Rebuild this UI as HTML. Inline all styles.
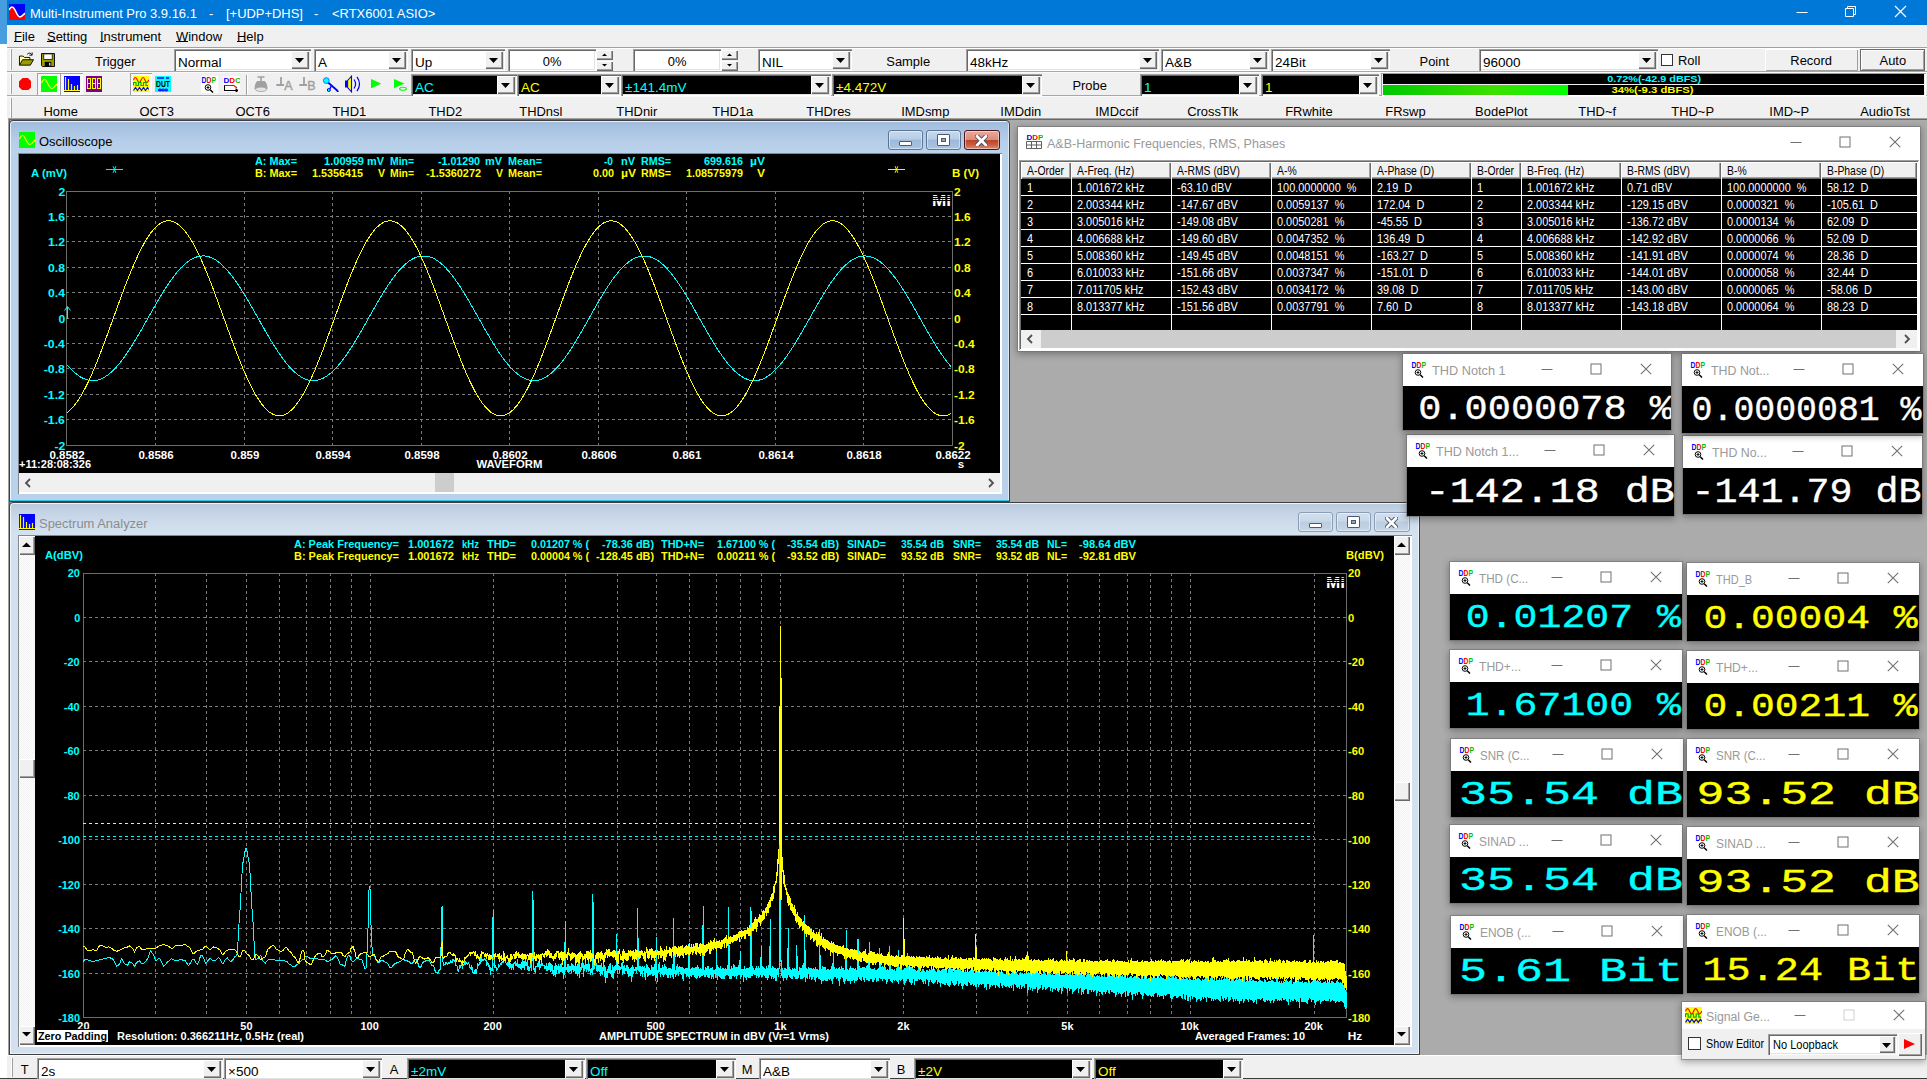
<!DOCTYPE html><html><head><meta charset="utf-8"><title>Multi-Instrument Pro</title><style>html,body{margin:0;padding:0;}
body{width:1927px;height:1079px;overflow:hidden;position:relative;background:#ababab;font-family:"Liberation Sans",sans-serif;}
body div,body svg{position:absolute;box-sizing:border-box;}
</style></head><body>
<div style="left:0px;top:0px;width:8px;height:44px;background:#469de0;"></div>
<div style="left:0px;top:44px;width:8px;height:1035px;background:#fff;"></div>
<div style="left:7px;top:0px;width:1920px;height:25px;background:#0078d7;"></div>
<svg style="left:9px;top:4px" width="16" height="16" viewBox="0 0 16 16"><rect width="16" height="16" fill="#0000ff"/><path d="M0,16 L0,6 C2,2 4,2 6,6 C8,10 9,13 11,13 C13,13 14,11 16,9 L16,16 Z" fill="#ff0000"/><path d="M0,6 C2,2 4,2 6,6 C8,10 9,13 11,13 C13,13 14,11 16,9" fill="none" stroke="#fff" stroke-width="1.6"/></svg>
<div style="left:30px;top:3.7px;height:21px;line-height:21px;font-size:12.5px;color:#fff;font-family:'Liberation Sans',sans-serif;white-space:pre;transform:scaleX(1.0350);transform-origin:0 0;">Multi-Instrument Pro 3.9.16.1</div>
<div style="left:209px;top:3.7px;height:21px;line-height:21px;font-size:12.5px;color:#fff;font-family:'Liberation Sans',sans-serif;white-space:pre;transform:scaleX(1.0350);transform-origin:0 0;">-</div>
<div style="left:226px;top:3.7px;height:21px;line-height:21px;font-size:12.5px;color:#fff;font-family:'Liberation Sans',sans-serif;white-space:pre;transform:scaleX(1.0350);transform-origin:0 0;">[+UDP+DHS]</div>
<div style="left:314px;top:3.7px;height:21px;line-height:21px;font-size:12.5px;color:#fff;font-family:'Liberation Sans',sans-serif;white-space:pre;transform:scaleX(1.0350);transform-origin:0 0;">-</div>
<div style="left:332px;top:3.7px;height:21px;line-height:21px;font-size:12.5px;color:#fff;font-family:'Liberation Sans',sans-serif;white-space:pre;transform:scaleX(1.0350);transform-origin:0 0;">&lt;RTX6001 ASIO&gt;</div>
<svg style="left:1780px;top:0" width="147" height="25" viewBox="0 0 147 25"><g stroke="#fff" stroke-width="1" fill="none"><path d="M16.5,12.5 h11"/><path d="M65.5,8.5 h8 v8 h-8 z M67.5,8.5 v-2 h8 v8 h-2"/><path d="M115,6 l11,11 M126,6 l-11,11" stroke-width="1.2"/></g></svg>
<div style="left:7px;top:25px;width:1920px;height:23px;background:#f0f0f0;"></div>
<div style="left:14px;top:26.7px;height:20px;line-height:20px;font-size:12.5px;color:#000;font-family:'Liberation Sans',sans-serif;white-space:pre;transform:scaleX(1.0350);transform-origin:0 0;">File</div>
<div style="left:14px;top:41px;width:8px;height:1px;background:#000;"></div>
<div style="left:47px;top:26.7px;height:20px;line-height:20px;font-size:12.5px;color:#000;font-family:'Liberation Sans',sans-serif;white-space:pre;transform:scaleX(1.0350);transform-origin:0 0;">Setting</div>
<div style="left:47px;top:41px;width:9px;height:1px;background:#000;"></div>
<div style="left:100px;top:26.7px;height:20px;line-height:20px;font-size:12.5px;color:#000;font-family:'Liberation Sans',sans-serif;white-space:pre;transform:scaleX(1.0350);transform-origin:0 0;">Instrument</div>
<div style="left:100px;top:41px;width:4px;height:1px;background:#000;"></div>
<div style="left:176px;top:26.7px;height:20px;line-height:20px;font-size:12.5px;color:#000;font-family:'Liberation Sans',sans-serif;white-space:pre;transform:scaleX(1.0350);transform-origin:0 0;">Window</div>
<div style="left:176px;top:41px;width:12px;height:1px;background:#000;"></div>
<div style="left:237px;top:26.7px;height:20px;line-height:20px;font-size:12.5px;color:#000;font-family:'Liberation Sans',sans-serif;white-space:pre;transform:scaleX(1.0350);transform-origin:0 0;">Help</div>
<div style="left:237px;top:41px;width:9px;height:1px;background:#000;"></div>
<div style="left:7px;top:48px;width:1920px;height:71px;background:#f0f0f0;"></div>
<div style="left:7px;top:47px;width:1920px;height:1px;background:#a0a0a0;"></div>
<div style="left:7px;top:48px;width:1920px;height:1px;background:#fff;"></div>
<div style="left:7px;top:71px;width:1920px;height:1px;background:#a8a8a8;"></div>
<div style="left:7px;top:72px;width:1920px;height:1px;background:#fbfbfb;"></div>
<div style="left:7px;top:95px;width:1920px;height:1px;background:#a8a8a8;"></div>
<div style="left:7px;top:96px;width:1920px;height:1px;background:#fbfbfb;"></div>
<div style="left:10px;top:49px;width:1px;height:21px;background:#fff;"></div>
<div style="left:11px;top:49px;width:1px;height:21px;background:#a0a0a0;"></div>
<div style="left:10px;top:74px;width:1px;height:20px;background:#fff;"></div>
<div style="left:11px;top:74px;width:1px;height:20px;background:#a0a0a0;"></div>
<div style="left:10px;top:98px;width:1px;height:20px;background:#fff;"></div>
<div style="left:11px;top:98px;width:1px;height:20px;background:#a0a0a0;"></div>
<svg style="left:17.5px;top:52.3px" width="16.5" height="14.5" viewBox="0 0 18 16"><path d="M1.5,14.5 V4.5 h4 l1.5,1.5 h6 v2.5" fill="#ffff9c" stroke="#000"/><path d="M1.5,14.5 l3.5,-6 h12 l-3.5,6 z" fill="#9c9c00" stroke="#000"/><path d="M10,2.5 c2,-2 4,-1.5 5,0.5 M15.5,0.5 v3 h-3" fill="none" stroke="#000"/></svg>
<svg style="left:41px;top:53px" width="14" height="14" viewBox="0 0 15 15"><path d="M0.5,0.5 h14 v14 h-13 l-1,-1 z" fill="#9c9c00" stroke="#000"/><rect x="3" y="1" width="9" height="6" fill="#fff" stroke="#000" stroke-width="0.8"/><rect x="4" y="9.5" width="7" height="5" fill="#000"/><rect x="8.5" y="10.5" width="1.6" height="3" fill="#cfcfcf"/></svg>
<div style="left:95px;top:51.7px;height:20px;line-height:20px;font-size:12.5px;color:#000;font-family:'Liberation Sans',sans-serif;white-space:pre;transform:scaleX(1.0350);transform-origin:0 0;">Trigger</div>
<div style="left:174px;top:49px;width:135px;height:22px;background:#fff;box-shadow:inset 1px 1px 0 #a0a0a0,inset 2px 2px 0 #696969,inset -1px -1px 0 #fff,inset -2px -2px 0 #e3e3e3;"></div>
<div style="left:174px;top:49px;width:137px;height:22px;background:#fff;box-shadow:inset 1px 1px 0 #a0a0a0,inset 2px 2px 0 #696969,inset -1px -1px 0 #fff,inset -2px -2px 0 #e3e3e3;"></div>
<div style="left:291px;top:51px;width:18px;height:18px;background:#f0f0f0;box-shadow:inset 1px 1px 0 #fff,inset -1px -1px 0 #696969,inset -2px -2px 0 #a0a0a0;"></div>
<svg style="left:295.0px;top:58.0px" width="9" height="5" viewBox="0 0 9 5"><polygon points="0,0 9,0 4.5,5" fill="#000"/></svg>
<div style="left:178px;top:52.7px;height:20px;line-height:20px;font-size:12.5px;color:#000;font-family:'Liberation Sans',sans-serif;white-space:pre;transform:scaleX(1.0800);transform-origin:0 0;">Normal</div>
<div style="left:314px;top:49px;width:92px;height:22px;background:#fff;box-shadow:inset 1px 1px 0 #a0a0a0,inset 2px 2px 0 #696969,inset -1px -1px 0 #fff,inset -2px -2px 0 #e3e3e3;"></div>
<div style="left:314px;top:49px;width:94px;height:22px;background:#fff;box-shadow:inset 1px 1px 0 #a0a0a0,inset 2px 2px 0 #696969,inset -1px -1px 0 #fff,inset -2px -2px 0 #e3e3e3;"></div>
<div style="left:388px;top:51px;width:18px;height:18px;background:#f0f0f0;box-shadow:inset 1px 1px 0 #fff,inset -1px -1px 0 #696969,inset -2px -2px 0 #a0a0a0;"></div>
<svg style="left:392.0px;top:58.0px" width="9" height="5" viewBox="0 0 9 5"><polygon points="0,0 9,0 4.5,5" fill="#000"/></svg>
<div style="left:318px;top:52.7px;height:20px;line-height:20px;font-size:12.5px;color:#000;font-family:'Liberation Sans',sans-serif;white-space:pre;transform:scaleX(1.0800);transform-origin:0 0;">A</div>
<div style="left:411px;top:49px;width:92px;height:22px;background:#fff;box-shadow:inset 1px 1px 0 #a0a0a0,inset 2px 2px 0 #696969,inset -1px -1px 0 #fff,inset -2px -2px 0 #e3e3e3;"></div>
<div style="left:411px;top:49px;width:94px;height:22px;background:#fff;box-shadow:inset 1px 1px 0 #a0a0a0,inset 2px 2px 0 #696969,inset -1px -1px 0 #fff,inset -2px -2px 0 #e3e3e3;"></div>
<div style="left:485px;top:51px;width:18px;height:18px;background:#f0f0f0;box-shadow:inset 1px 1px 0 #fff,inset -1px -1px 0 #696969,inset -2px -2px 0 #a0a0a0;"></div>
<svg style="left:489.0px;top:58.0px" width="9" height="5" viewBox="0 0 9 5"><polygon points="0,0 9,0 4.5,5" fill="#000"/></svg>
<div style="left:415px;top:52.7px;height:20px;line-height:20px;font-size:12.5px;color:#000;font-family:'Liberation Sans',sans-serif;white-space:pre;transform:scaleX(1.0800);transform-origin:0 0;">Up</div>
<div style="left:508px;top:49px;width:88px;height:22px;background:#fff;box-shadow:inset 1px 1px 0 #a0a0a0,inset 2px 2px 0 #696969,inset -1px -1px 0 #fff,inset -2px -2px 0 #e3e3e3;"></div>
<div style="left:552px;top:52.7px;height:19px;line-height:19px;font-size:12.5px;color:#000;font-family:'Liberation Sans',sans-serif;white-space:pre;left:542.97px;transform:scaleX(1.0350);transform-origin:50% 0;">0%</div>
<div style="left:596px;top:50px;width:17px;height:10px;background:#f0f0f0;box-shadow:inset 1px 1px 0 #fff,inset -1px -1px 0 #696969,inset -2px -2px 0 #a0a0a0;"></div>
<div style="left:596px;top:61px;width:17px;height:10px;background:#f0f0f0;box-shadow:inset 1px 1px 0 #fff,inset -1px -1px 0 #696969,inset -2px -2px 0 #a0a0a0;"></div>
<svg style="left:602px;top:53px" width="5" height="14" viewBox="0 0 5 14"><polygon points="0,3 5,3 2.5,0.5" fill="#000"/><polygon points="0,11 5,11 2.5,13.5" fill="#000"/></svg>
<div style="left:633px;top:49px;width:88px;height:22px;background:#fff;box-shadow:inset 1px 1px 0 #a0a0a0,inset 2px 2px 0 #696969,inset -1px -1px 0 #fff,inset -2px -2px 0 #e3e3e3;"></div>
<div style="left:677px;top:52.7px;height:19px;line-height:19px;font-size:12.5px;color:#000;font-family:'Liberation Sans',sans-serif;white-space:pre;left:667.97px;transform:scaleX(1.0350);transform-origin:50% 0;">0%</div>
<div style="left:721px;top:50px;width:17px;height:10px;background:#f0f0f0;box-shadow:inset 1px 1px 0 #fff,inset -1px -1px 0 #696969,inset -2px -2px 0 #a0a0a0;"></div>
<div style="left:721px;top:61px;width:17px;height:10px;background:#f0f0f0;box-shadow:inset 1px 1px 0 #fff,inset -1px -1px 0 #696969,inset -2px -2px 0 #a0a0a0;"></div>
<svg style="left:727px;top:53px" width="5" height="14" viewBox="0 0 5 14"><polygon points="0,3 5,3 2.5,0.5" fill="#000"/><polygon points="0,11 5,11 2.5,13.5" fill="#000"/></svg>
<div style="left:758px;top:49px;width:92px;height:22px;background:#fff;box-shadow:inset 1px 1px 0 #a0a0a0,inset 2px 2px 0 #696969,inset -1px -1px 0 #fff,inset -2px -2px 0 #e3e3e3;"></div>
<div style="left:758px;top:49px;width:94px;height:22px;background:#fff;box-shadow:inset 1px 1px 0 #a0a0a0,inset 2px 2px 0 #696969,inset -1px -1px 0 #fff,inset -2px -2px 0 #e3e3e3;"></div>
<div style="left:832px;top:51px;width:18px;height:18px;background:#f0f0f0;box-shadow:inset 1px 1px 0 #fff,inset -1px -1px 0 #696969,inset -2px -2px 0 #a0a0a0;"></div>
<svg style="left:836.0px;top:58.0px" width="9" height="5" viewBox="0 0 9 5"><polygon points="0,0 9,0 4.5,5" fill="#000"/></svg>
<div style="left:762px;top:52.7px;height:20px;line-height:20px;font-size:12.5px;color:#000;font-family:'Liberation Sans',sans-serif;white-space:pre;transform:scaleX(1.0800);transform-origin:0 0;">NIL</div>
<div style="left:908px;top:51.7px;height:20px;line-height:20px;font-size:12.5px;color:#000;font-family:'Liberation Sans',sans-serif;white-space:pre;left:886.81px;transform:scaleX(1.0350);transform-origin:50% 0;">Sample</div>
<div style="left:966px;top:49px;width:191px;height:22px;background:#fff;box-shadow:inset 1px 1px 0 #a0a0a0,inset 2px 2px 0 #696969,inset -1px -1px 0 #fff,inset -2px -2px 0 #e3e3e3;"></div>
<div style="left:966px;top:49px;width:193px;height:22px;background:#fff;box-shadow:inset 1px 1px 0 #a0a0a0,inset 2px 2px 0 #696969,inset -1px -1px 0 #fff,inset -2px -2px 0 #e3e3e3;"></div>
<div style="left:1139px;top:51px;width:18px;height:18px;background:#f0f0f0;box-shadow:inset 1px 1px 0 #fff,inset -1px -1px 0 #696969,inset -2px -2px 0 #a0a0a0;"></div>
<svg style="left:1143.0px;top:58.0px" width="9" height="5" viewBox="0 0 9 5"><polygon points="0,0 9,0 4.5,5" fill="#000"/></svg>
<div style="left:970px;top:52.7px;height:20px;line-height:20px;font-size:12.5px;color:#000;font-family:'Liberation Sans',sans-serif;white-space:pre;transform:scaleX(1.0800);transform-origin:0 0;">48kHz</div>
<div style="left:1161px;top:49px;width:106px;height:22px;background:#fff;box-shadow:inset 1px 1px 0 #a0a0a0,inset 2px 2px 0 #696969,inset -1px -1px 0 #fff,inset -2px -2px 0 #e3e3e3;"></div>
<div style="left:1161px;top:49px;width:108px;height:22px;background:#fff;box-shadow:inset 1px 1px 0 #a0a0a0,inset 2px 2px 0 #696969,inset -1px -1px 0 #fff,inset -2px -2px 0 #e3e3e3;"></div>
<div style="left:1249px;top:51px;width:18px;height:18px;background:#f0f0f0;box-shadow:inset 1px 1px 0 #fff,inset -1px -1px 0 #696969,inset -2px -2px 0 #a0a0a0;"></div>
<svg style="left:1253.0px;top:58.0px" width="9" height="5" viewBox="0 0 9 5"><polygon points="0,0 9,0 4.5,5" fill="#000"/></svg>
<div style="left:1165px;top:52.7px;height:20px;line-height:20px;font-size:12.5px;color:#000;font-family:'Liberation Sans',sans-serif;white-space:pre;transform:scaleX(1.0800);transform-origin:0 0;">A&amp;B</div>
<div style="left:1271px;top:49px;width:117px;height:22px;background:#fff;box-shadow:inset 1px 1px 0 #a0a0a0,inset 2px 2px 0 #696969,inset -1px -1px 0 #fff,inset -2px -2px 0 #e3e3e3;"></div>
<div style="left:1271px;top:49px;width:119px;height:22px;background:#fff;box-shadow:inset 1px 1px 0 #a0a0a0,inset 2px 2px 0 #696969,inset -1px -1px 0 #fff,inset -2px -2px 0 #e3e3e3;"></div>
<div style="left:1370px;top:51px;width:18px;height:18px;background:#f0f0f0;box-shadow:inset 1px 1px 0 #fff,inset -1px -1px 0 #696969,inset -2px -2px 0 #a0a0a0;"></div>
<svg style="left:1374.0px;top:58.0px" width="9" height="5" viewBox="0 0 9 5"><polygon points="0,0 9,0 4.5,5" fill="#000"/></svg>
<div style="left:1275px;top:52.7px;height:20px;line-height:20px;font-size:12.5px;color:#000;font-family:'Liberation Sans',sans-serif;white-space:pre;transform:scaleX(1.0800);transform-origin:0 0;">24Bit</div>
<div style="left:1434px;top:51.7px;height:20px;line-height:20px;font-size:12.5px;color:#000;font-family:'Liberation Sans',sans-serif;white-space:pre;left:1419.75px;transform:scaleX(1.0350);transform-origin:50% 0;">Point</div>
<div style="left:1479px;top:49px;width:177px;height:22px;background:#fff;box-shadow:inset 1px 1px 0 #a0a0a0,inset 2px 2px 0 #696969,inset -1px -1px 0 #fff,inset -2px -2px 0 #e3e3e3;"></div>
<div style="left:1479px;top:49px;width:179px;height:22px;background:#fff;box-shadow:inset 1px 1px 0 #a0a0a0,inset 2px 2px 0 #696969,inset -1px -1px 0 #fff,inset -2px -2px 0 #e3e3e3;"></div>
<div style="left:1638px;top:51px;width:18px;height:18px;background:#f0f0f0;box-shadow:inset 1px 1px 0 #fff,inset -1px -1px 0 #696969,inset -2px -2px 0 #a0a0a0;"></div>
<svg style="left:1642.0px;top:58.0px" width="9" height="5" viewBox="0 0 9 5"><polygon points="0,0 9,0 4.5,5" fill="#000"/></svg>
<div style="left:1483px;top:52.7px;height:20px;line-height:20px;font-size:12.5px;color:#000;font-family:'Liberation Sans',sans-serif;white-space:pre;transform:scaleX(1.0800);transform-origin:0 0;">96000</div>
<div style="left:1661px;top:54px;width:12px;height:12px;background:#fff;box-shadow:inset 1px 1px 0 #333,inset -1px -1px 0 #333;"></div>
<div style="left:1678px;top:50.7px;height:20px;line-height:20px;font-size:12.5px;color:#000;font-family:'Liberation Sans',sans-serif;white-space:pre;transform:scaleX(1.0350);transform-origin:0 0;">Roll</div>
<div style="left:1765px;top:49px;width:93px;height:22px;background:#f0f0f0;box-shadow:inset 1px 1px 0 #fff,inset -1px -1px 0 #a0a0a0;"></div>
<div style="left:1811px;top:51.7px;height:19px;line-height:19px;font-size:12.5px;color:#000;font-family:'Liberation Sans',sans-serif;white-space:pre;left:1790.85px;transform:scaleX(1.0350);transform-origin:50% 0;">Record</div>
<div style="left:1860px;top:49px;width:65px;height:22px;background:#f0f0f0;box-shadow:inset 1px 1px 0 #696969,inset -1px -1px 0 #696969,inset 2px 2px 0 #fff,inset -2px -2px 0 #a0a0a0;"></div>
<div style="left:1893px;top:51.7px;height:19px;line-height:19px;font-size:12.5px;color:#000;font-family:'Liberation Sans',sans-serif;white-space:pre;left:1880.14px;transform:scaleX(1.0350);transform-origin:50% 0;">Auto</div>
<svg style="left:18.6px;top:77.5px" width="12.5" height="12.5" viewBox="0 0 14 14"><polygon points="4,0 10,0 14,4 14,10 10,14 4,14 0,10 0,4" fill="#ff0000"/></svg>
<div style="left:37px;top:73px;width:23px;height:22px;background:#fff;box-shadow:inset 1px 1px 0 #a0a0a0,inset -1px -1px 0 #fff;background-image:repeating-conic-gradient(#f0f0f0 0 25%,#fff 0 50%);background-size:2px 2px;"></div>
<div style="left:60px;top:73px;width:23px;height:22px;background:#fff;box-shadow:inset 1px 1px 0 #a0a0a0,inset -1px -1px 0 #fff;background-image:repeating-conic-gradient(#f0f0f0 0 25%,#fff 0 50%);background-size:2px 2px;"></div>
<svg style="left:41px;top:76px" width="16" height="16" viewBox="0 0 16 16"><rect width="16" height="16" fill="#00ff00"/><path d="M0.5,7 C2,3 4,2 6,6 C8,10 9,12.5 11,12.5 C13,12.5 14,10 16,8" fill="none" stroke="#ffff00" stroke-width="1.2"/></svg>
<svg style="left:64px;top:76px" width="16" height="16" viewBox="0 0 16 16"><rect width="16" height="16" fill="#0000ff"/><path d="M1.5,1 V14 M4.5,3 V14 M7.5,8 V14 M10.5,10 V14 M13.5,9 V14 M0,14.5 H16" stroke="#ffff00" stroke-width="1.2" fill="none"/></svg>
<svg style="left:86px;top:76px" width="16" height="16" viewBox="0 0 16 16"><rect width="16" height="16" fill="#800080"/><g fill="none" stroke="#ffff00" stroke-width="1"><rect x="1.5" y="2.5" width="3" height="5"/><rect x="1.5" y="7.5" width="3" height="5"/><rect x="6.5" y="2.5" width="3" height="5"/><rect x="6.5" y="7.5" width="3" height="5"/><rect x="11.5" y="2.5" width="3" height="5"/><rect x="11.5" y="7.5" width="3" height="5"/></g></svg>
<div style="left:129.5px;top:73px;width:22px;height:22px;background:#fff;box-shadow:inset 1px 1px 0 #a0a0a0,inset -1px -1px 0 #fff;background-image:repeating-conic-gradient(#f0f0f0 0 25%,#fff 0 50%);background-size:2px 2px;"></div>
<svg style="left:133px;top:76px" width="16" height="16" viewBox="0 0 16 16"><rect width="16" height="16" fill="#ffff00"/><path d="M0.5,4 q1.9,-5 3.8,0 t3.8,0 t3.8,0 t3.8,0" fill="none" stroke="#ff0000" stroke-width="1.1"/><path d="M0.5,9.5 v-3 h2.5 v3 h2.5 v-3 h2.5 v3 h2.5 v-3 h2.5 v3 h2" fill="none" stroke="#00b000" stroke-width="1.1"/><path d="M0.5,14.5 l2,-3 l2,3 l2,-3 l2,3 l2,-3 l2,3 l2,-3 l1.2,2" fill="none" stroke="#0000ff" stroke-width="1.1"/></svg>
<svg style="left:155px;top:76px" width="16" height="16" viewBox="0 0 16 16"><rect width="16" height="16" fill="#00ffff"/><text x="8" y="11" font-size="8.5" font-weight="bold" font-family="Liberation Sans,sans-serif" text-anchor="middle" fill="#000" textLength="14" lengthAdjust="spacingAndGlyphs">DUT</text><path d="M2,2 h7 M11,2 l3,0 M3,14 h10" stroke="#0000ff" stroke-width="1.4"/><circle cx="5" cy="14" r="1.2" fill="none" stroke="#0000ff" stroke-width="0.7"/><circle cx="8" cy="14" r="1.2" fill="none" stroke="#0000ff" stroke-width="0.7"/><circle cx="11" cy="14" r="1.2" fill="none" stroke="#0000ff" stroke-width="0.7"/></svg>
<svg style="left:201px;top:76px" width="17" height="17" viewBox="0 0 17 17"><rect width="17" height="17" fill="#fff"/><text x="0.5" y="7" font-size="8.5" font-weight="bold" font-family="Liberation Sans,sans-serif" textLength="14.5" lengthAdjust="spacingAndGlyphs"><tspan fill="#0000ff">D</tspan><tspan fill="#ff0000">D</tspan><tspan fill="#00c000">P</tspan></text><circle cx="7" cy="11.5" r="2.8" fill="#fff" stroke="#000" stroke-width="1"/><path d="M7,10 v3 M5.5,11.5 h3" stroke="#000" stroke-width="0.9"/><path d="M9.2,13.7 L12,16.5" stroke="#000" stroke-width="1.5"/></svg>
<svg style="left:223px;top:76px" width="17" height="16" viewBox="0 0 17 16"><rect width="17" height="16" fill="#fff"/><text x="0.5" y="7" font-size="8" font-weight="bold" font-family="Liberation Sans,sans-serif"><tspan fill="#0000ff">D</tspan><tspan fill="#ff0000">D</tspan><tspan fill="#00c000">C</tspan></text><path d="M1.5,9 V14.5 H15 M15,14.5 l-2.5,-1.8 M15,14.5 l-2.5,1.5" fill="none" stroke="#000" stroke-width="1.1"/><path d="M1.5,9.5 H11 L14,12" fill="none" stroke="#ff0000" stroke-width="1.1"/></svg>
<div style="left:246px;top:75px;width:1px;height:20px;background:#a0a0a0;"></div>
<div style="left:247px;top:75px;width:1px;height:20px;background:#fff;"></div>
<svg style="left:254px;top:76px" width="15" height="16" viewBox="0 0 15 16"><path d="M3.5,1 h7 M7,1 v4" stroke="#a0a0a0" stroke-width="1.6" fill="none"/><path d="M3.2,5 h7.6 q3,3.5 2.6,8 h-12.8 q-0.4,-4.500 2.600,-8 z" fill="#a0a0a0"/><ellipse cx="7" cy="13.3" rx="5.6" ry="2.2" fill="#e4e4e4" stroke="#a0a0a0" stroke-width="0.8"/></svg>
<svg style="left:276px;top:76px" width="18" height="16" viewBox="0 0 18 16"><path d="M5,1 V9 M0.3,9 H8" stroke="#a0a0a0" stroke-width="1.8" fill="none"/><text x="8.3" y="14" font-size="12.5" font-family="Liberation Sans,sans-serif" fill="#a0a0a0" stroke="#a0a0a0" stroke-width="0.4">A</text></svg>
<svg style="left:299px;top:76px" width="18" height="16" viewBox="0 0 18 16"><path d="M5,1 V9 M0.3,9 H8" stroke="#a0a0a0" stroke-width="1.8" fill="none"/><text x="8.3" y="14" font-size="12.5" font-family="Liberation Sans,sans-serif" fill="#a0a0a0" stroke="#a0a0a0" stroke-width="0.4">B</text></svg>
<svg style="left:322px;top:76px" width="18" height="17" viewBox="0 0 18 17"><path d="M5.5,6 L15.5,14.8" stroke="#0000ff" stroke-width="1.8" fill="none"/><path d="M9.5,9.5 L7.5,13.5" stroke="#0000ff" stroke-width="1.4" fill="none"/><circle cx="4.3" cy="4.6" r="2.9" fill="#00ffff" stroke="#1e5cff" stroke-width="0.9"/><circle cx="6.8" cy="14" r="1.5" fill="#00ffff" stroke="#0000ff" stroke-width="1"/><circle cx="15.7" cy="15.2" r="0.9" fill="#000"/></svg>
<svg style="left:344px;top:75px" width="18" height="18" viewBox="0 0 18 18"><rect x="1" y="5.5" width="2.6" height="7" fill="#0000ff"/><path d="M3.6,5.5 L7.5,1.2 V16.8 L3.6,12.5 z" fill="#ffff00" stroke="#0000ff" stroke-width="1.1"/><path d="M10,4.5 q3.2,4.500 0,9 M13,1.800 q5,7.200 0,14.400" fill="none" stroke="#0000ff" stroke-width="1.2"/></svg>
<svg style="left:370.8px;top:79px" width="10.4" height="9.4" viewBox="0 0 10 9"><polygon points="0,0 10,4.5 0,9" fill="#00ff00"/></svg>
<svg style="left:393.5px;top:79px" width="14" height="13" viewBox="0 0 14 13"><polygon points="0,0 10.400,4.600 0,9.200" fill="#00ff00"/><ellipse cx="9" cy="9.800" rx="3.400" ry="1.500" fill="none" stroke="#00ff00" stroke-width="1.1"/></svg>
<div style="left:411px;top:74px;width:104px;height:22px;background:#000;box-shadow:inset 1px 1px 0 #a0a0a0,inset 2px 2px 0 #696969,inset -1px -1px 0 #fff,inset -2px -2px 0 #e3e3e3;"></div>
<div style="left:411px;top:74px;width:106px;height:22px;background:#000;box-shadow:inset 1px 1px 0 #a0a0a0,inset 2px 2px 0 #696969,inset -1px -1px 0 #fff,inset -2px -2px 0 #e3e3e3;"></div>
<div style="left:497px;top:76px;width:18px;height:18px;background:#f0f0f0;box-shadow:inset 1px 1px 0 #fff,inset -1px -1px 0 #696969,inset -2px -2px 0 #a0a0a0;"></div>
<svg style="left:501.0px;top:83.0px" width="9" height="5" viewBox="0 0 9 5"><polygon points="0,0 9,0 4.5,5" fill="#000"/></svg>
<div style="left:415px;top:77.7px;height:20px;line-height:20px;font-size:12.5px;color:#00ffff;font-family:'Liberation Sans',sans-serif;white-space:pre;transform:scaleX(1.0800);transform-origin:0 0;">AC</div>
<div style="left:517px;top:74px;width:102px;height:22px;background:#000;box-shadow:inset 1px 1px 0 #a0a0a0,inset 2px 2px 0 #696969,inset -1px -1px 0 #fff,inset -2px -2px 0 #e3e3e3;"></div>
<div style="left:517px;top:74px;width:104px;height:22px;background:#000;box-shadow:inset 1px 1px 0 #a0a0a0,inset 2px 2px 0 #696969,inset -1px -1px 0 #fff,inset -2px -2px 0 #e3e3e3;"></div>
<div style="left:601px;top:76px;width:18px;height:18px;background:#f0f0f0;box-shadow:inset 1px 1px 0 #fff,inset -1px -1px 0 #696969,inset -2px -2px 0 #a0a0a0;"></div>
<svg style="left:605.0px;top:83.0px" width="9" height="5" viewBox="0 0 9 5"><polygon points="0,0 9,0 4.5,5" fill="#000"/></svg>
<div style="left:521px;top:77.7px;height:20px;line-height:20px;font-size:12.5px;color:#ffff00;font-family:'Liberation Sans',sans-serif;white-space:pre;transform:scaleX(1.0800);transform-origin:0 0;">AC</div>
<div style="left:621px;top:74px;width:208px;height:22px;background:#000;box-shadow:inset 1px 1px 0 #a0a0a0,inset 2px 2px 0 #696969,inset -1px -1px 0 #fff,inset -2px -2px 0 #e3e3e3;"></div>
<div style="left:621px;top:74px;width:210px;height:22px;background:#000;box-shadow:inset 1px 1px 0 #a0a0a0,inset 2px 2px 0 #696969,inset -1px -1px 0 #fff,inset -2px -2px 0 #e3e3e3;"></div>
<div style="left:811px;top:76px;width:18px;height:18px;background:#f0f0f0;box-shadow:inset 1px 1px 0 #fff,inset -1px -1px 0 #696969,inset -2px -2px 0 #a0a0a0;"></div>
<svg style="left:815.0px;top:83.0px" width="9" height="5" viewBox="0 0 9 5"><polygon points="0,0 9,0 4.5,5" fill="#000"/></svg>
<div style="left:625px;top:77.7px;height:20px;line-height:20px;font-size:12.5px;color:#00ffff;font-family:'Liberation Sans',sans-serif;white-space:pre;transform:scaleX(1.0800);transform-origin:0 0;">±141.4mV</div>
<div style="left:832px;top:74px;width:208px;height:22px;background:#000;box-shadow:inset 1px 1px 0 #a0a0a0,inset 2px 2px 0 #696969,inset -1px -1px 0 #fff,inset -2px -2px 0 #e3e3e3;"></div>
<div style="left:832px;top:74px;width:210px;height:22px;background:#000;box-shadow:inset 1px 1px 0 #a0a0a0,inset 2px 2px 0 #696969,inset -1px -1px 0 #fff,inset -2px -2px 0 #e3e3e3;"></div>
<div style="left:1022px;top:76px;width:18px;height:18px;background:#f0f0f0;box-shadow:inset 1px 1px 0 #fff,inset -1px -1px 0 #696969,inset -2px -2px 0 #a0a0a0;"></div>
<svg style="left:1026.0px;top:83.0px" width="9" height="5" viewBox="0 0 9 5"><polygon points="0,0 9,0 4.5,5" fill="#000"/></svg>
<div style="left:836px;top:77.7px;height:20px;line-height:20px;font-size:12.5px;color:#ffff00;font-family:'Liberation Sans',sans-serif;white-space:pre;transform:scaleX(1.0800);transform-origin:0 0;">±4.472V</div>
<div style="left:1090px;top:75.7px;height:20px;line-height:20px;font-size:12.5px;color:#000;font-family:'Liberation Sans',sans-serif;white-space:pre;left:1073.32px;transform:scaleX(1.0350);transform-origin:50% 0;">Probe</div>
<div style="left:1140px;top:74px;width:117px;height:22px;background:#000;box-shadow:inset 1px 1px 0 #a0a0a0,inset 2px 2px 0 #696969,inset -1px -1px 0 #fff,inset -2px -2px 0 #e3e3e3;"></div>
<div style="left:1140px;top:74px;width:119px;height:22px;background:#000;box-shadow:inset 1px 1px 0 #a0a0a0,inset 2px 2px 0 #696969,inset -1px -1px 0 #fff,inset -2px -2px 0 #e3e3e3;"></div>
<div style="left:1239px;top:76px;width:18px;height:18px;background:#f0f0f0;box-shadow:inset 1px 1px 0 #fff,inset -1px -1px 0 #696969,inset -2px -2px 0 #a0a0a0;"></div>
<svg style="left:1243.0px;top:83.0px" width="9" height="5" viewBox="0 0 9 5"><polygon points="0,0 9,0 4.5,5" fill="#000"/></svg>
<div style="left:1144px;top:77.7px;height:20px;line-height:20px;font-size:12.5px;color:#00ffff;font-family:'Liberation Sans',sans-serif;white-space:pre;transform:scaleX(1.0800);transform-origin:0 0;">1</div>
<div style="left:1261px;top:74px;width:116px;height:22px;background:#000;box-shadow:inset 1px 1px 0 #a0a0a0,inset 2px 2px 0 #696969,inset -1px -1px 0 #fff,inset -2px -2px 0 #e3e3e3;"></div>
<div style="left:1261px;top:74px;width:118px;height:22px;background:#000;box-shadow:inset 1px 1px 0 #a0a0a0,inset 2px 2px 0 #696969,inset -1px -1px 0 #fff,inset -2px -2px 0 #e3e3e3;"></div>
<div style="left:1359px;top:76px;width:18px;height:18px;background:#f0f0f0;box-shadow:inset 1px 1px 0 #fff,inset -1px -1px 0 #696969,inset -2px -2px 0 #a0a0a0;"></div>
<svg style="left:1363.0px;top:83.0px" width="9" height="5" viewBox="0 0 9 5"><polygon points="0,0 9,0 4.5,5" fill="#000"/></svg>
<div style="left:1265px;top:77.7px;height:20px;line-height:20px;font-size:12.5px;color:#ffff00;font-family:'Liberation Sans',sans-serif;white-space:pre;transform:scaleX(1.0800);transform-origin:0 0;">1</div>
<div style="left:1381px;top:73px;width:545px;height:23px;background:#f0f0f0;box-shadow:inset 1px 1px 0 #a0a0a0,inset -1px -1px 0 #fff;"></div>
<div style="left:1383px;top:74px;width:541px;height:10px;background:#000;"></div>
<div style="left:1383px;top:85px;width:541px;height:10px;background:#000;"></div>
<div style="left:1383px;top:85px;width:185px;height:10px;background:linear-gradient(90deg,#00c800,#3ee000 60%,#00ff00);"></div>
<div style="left:1654px;top:73px;height:12px;line-height:12px;font-size:9.5px;color:#00ffff;font-family:'Liberation Sans',sans-serif;white-space:pre;font-weight:bold;left:1612.82px;transform:scaleX(1.1414);transform-origin:50% 0;">0.72%(-42.9 dBFS)</div>
<div style="left:1653px;top:84px;height:12px;line-height:12px;font-size:9.5px;color:#ffff00;font-family:'Liberation Sans',sans-serif;white-space:pre;font-weight:bold;left:1618.43px;transform:scaleX(1.1858);transform-origin:50% 0;">34%(-9.3 dBFS)</div>
<div style="left:61px;top:102.7px;height:19px;line-height:19px;font-size:12.5px;color:#000;font-family:'Liberation Sans',sans-serif;white-space:pre;left:44.33px;transform:scaleX(1.0350);transform-origin:50% 0;">Home</div>
<div style="left:157px;top:102.7px;height:19px;line-height:19px;font-size:12.5px;color:#000;font-family:'Liberation Sans',sans-serif;white-space:pre;left:140.33px;transform:scaleX(1.0350);transform-origin:50% 0;">OCT3</div>
<div style="left:253px;top:102.7px;height:19px;line-height:19px;font-size:12.5px;color:#000;font-family:'Liberation Sans',sans-serif;white-space:pre;left:236.33px;transform:scaleX(1.0350);transform-origin:50% 0;">OCT6</div>
<div style="left:349px;top:102.7px;height:19px;line-height:19px;font-size:12.5px;color:#000;font-family:'Liberation Sans',sans-serif;white-space:pre;left:332.68px;transform:scaleX(1.0350);transform-origin:50% 0;">THD1</div>
<div style="left:445px;top:102.7px;height:19px;line-height:19px;font-size:12.5px;color:#000;font-family:'Liberation Sans',sans-serif;white-space:pre;left:428.68px;transform:scaleX(1.0350);transform-origin:50% 0;">THD2</div>
<div style="left:541px;top:102.7px;height:19px;line-height:19px;font-size:12.5px;color:#000;font-family:'Liberation Sans',sans-serif;white-space:pre;left:520.17px;transform:scaleX(1.0350);transform-origin:50% 0;">THDnsl</div>
<div style="left:637px;top:102.7px;height:19px;line-height:19px;font-size:12.5px;color:#000;font-family:'Liberation Sans',sans-serif;white-space:pre;left:617.21px;transform:scaleX(1.0350);transform-origin:50% 0;">THDnir</div>
<div style="left:733px;top:102.7px;height:19px;line-height:19px;font-size:12.5px;color:#000;font-family:'Liberation Sans',sans-serif;white-space:pre;left:713.20px;transform:scaleX(1.0350);transform-origin:50% 0;">THD1a</div>
<div style="left:829px;top:102.7px;height:19px;line-height:19px;font-size:12.5px;color:#000;font-family:'Liberation Sans',sans-serif;white-space:pre;left:807.47px;transform:scaleX(1.0350);transform-origin:50% 0;">THDres</div>
<div style="left:925px;top:102.7px;height:19px;line-height:19px;font-size:12.5px;color:#000;font-family:'Liberation Sans',sans-serif;white-space:pre;left:901.74px;transform:scaleX(1.0350);transform-origin:50% 0;">IMDsmp</div>
<div style="left:1021px;top:102.7px;height:19px;line-height:19px;font-size:12.5px;color:#000;font-family:'Liberation Sans',sans-serif;white-space:pre;left:1001.20px;transform:scaleX(1.0350);transform-origin:50% 0;">IMDdin</div>
<div style="left:1117px;top:102.7px;height:19px;line-height:19px;font-size:12.5px;color:#000;font-family:'Liberation Sans',sans-serif;white-space:pre;left:1096.17px;transform:scaleX(1.0350);transform-origin:50% 0;">IMDccif</div>
<div style="left:1213px;top:102.7px;height:19px;line-height:19px;font-size:12.5px;color:#000;font-family:'Liberation Sans',sans-serif;white-space:pre;left:1188.35px;transform:scaleX(1.0350);transform-origin:50% 0;">CrossTlk</div>
<div style="left:1309px;top:102.7px;height:19px;line-height:19px;font-size:12.5px;color:#000;font-family:'Liberation Sans',sans-serif;white-space:pre;left:1286.08px;transform:scaleX(1.0350);transform-origin:50% 0;">FRwhite</div>
<div style="left:1405px;top:102.7px;height:19px;line-height:19px;font-size:12.5px;color:#000;font-family:'Liberation Sans',sans-serif;white-space:pre;left:1385.55px;transform:scaleX(1.0350);transform-origin:50% 0;">FRswp</div>
<div style="left:1501px;top:102.7px;height:19px;line-height:19px;font-size:12.5px;color:#000;font-family:'Liberation Sans',sans-serif;white-space:pre;left:1475.63px;transform:scaleX(1.0350);transform-origin:50% 0;">BodePlot</div>
<div style="left:1597px;top:102.7px;height:19px;line-height:19px;font-size:12.5px;color:#000;font-family:'Liberation Sans',sans-serif;white-space:pre;left:1578.77px;transform:scaleX(1.0350);transform-origin:50% 0;">THD~f</div>
<div style="left:1693px;top:102.7px;height:19px;line-height:19px;font-size:12.5px;color:#000;font-family:'Liberation Sans',sans-serif;white-space:pre;left:1672.34px;transform:scaleX(1.0350);transform-origin:50% 0;">THD~P</div>
<div style="left:1789px;top:102.7px;height:19px;line-height:19px;font-size:12.5px;color:#000;font-family:'Liberation Sans',sans-serif;white-space:pre;left:1769.72px;transform:scaleX(1.0350);transform-origin:50% 0;">IMD~P</div>
<div style="left:1885px;top:102.7px;height:19px;line-height:19px;font-size:12.5px;color:#000;font-family:'Liberation Sans',sans-serif;white-space:pre;left:1861.03px;transform:scaleX(1.0350);transform-origin:50% 0;">AudioTst</div>
<div style="left:8px;top:118px;width:1919px;height:937px;border-left:1px solid #a0a0a0;border-top:1px solid #a0a0a0;"></div>
<div style="left:9px;top:119px;width:1918px;height:936px;border-left:1px solid #696969;border-top:1px solid #696969;"></div>
<div style="left:9px;top:120px;width:1001px;height:382px;background:linear-gradient(180deg,#9fbbdc 0px,#a9c3e2 8px,#b6cee9 20px,#bdd3ec 34px,#b9d1ea 35px);border:1px solid #3f3f3f;border-radius:4px 4px 0 0;box-shadow:inset 1px 1px 0 rgba(255,255,255,.75),inset -1px -1px 0 rgba(255,255,255,.55);"></div>
<svg style="left:19px;top:132px" width="16" height="16" viewBox="0 0 16 16"><rect width="16" height="16" fill="#00ff00"/><path d="M0.5,7 C2,3 4,2 6,6 C8,10 9,12.5 11,12.5 C13,12.5 14,10 16,8" fill="none" stroke="#ffff00" stroke-width="1.2"/></svg>
<div style="left:39px;top:131.7px;height:20px;line-height:20px;font-size:12.5px;color:#000;font-family:'Liberation Sans',sans-serif;white-space:pre;transform:scaleX(1.0350);transform-origin:0 0;">Oscilloscope</div>
<div style="left:888px;top:130px;width:35px;height:20px;background:linear-gradient(180deg,#c6d9ee 0%,#b7cde7 45%,#9db9da 50%,#aac4e2 100%);border:1px solid #5d7594;border-radius:3px;box-shadow:inset 0 0 0 1px rgba(255,255,255,.45);"></div>
<div style="left:926px;top:130px;width:35px;height:20px;background:linear-gradient(180deg,#c6d9ee 0%,#b7cde7 45%,#9db9da 50%,#aac4e2 100%);border:1px solid #5d7594;border-radius:3px;box-shadow:inset 0 0 0 1px rgba(255,255,255,.45);"></div>
<div style="left:964px;top:130px;width:36px;height:20px;background:linear-gradient(180deg,#e9a99c 0%,#de8c7a 48%,#be4428 52%,#c85a40 75%,#d88a76 100%);border:1px solid #4a1420;border-radius:3px;box-shadow:inset 0 0 0 1px rgba(255,255,255,.45);"></div>
<div style="left:899px;top:141px;width:13px;height:5px;background:#fff;border:1px solid #4b5a70;border-radius:1px;"></div>
<div style="left:937px;top:134px;width:13px;height:12px;background:#fff;border:1px solid #4b5a70;border-radius:1px;"></div>
<div style="left:941px;top:138px;width:5px;height:4px;background:#8ea6c8;border:1px solid #4b5a70;"></div>
<svg style="left:975.2px;top:134.5px" width="13" height="11.4" viewBox="0 0 16 14"><path d="M2.5,1.5 L13.5,12.5 M13.5,1.5 L2.5,12.5" stroke="#43506a" stroke-width="5.6" stroke-linecap="round"/><path d="M2.5,1.5 L13.5,12.5 M13.5,1.5 L2.5,12.5" stroke="#fff" stroke-width="3.4" stroke-linecap="round"/></svg>
<div style="left:10px;top:500px;width:999px;height:1px;background:#35c4e8;"></div>
<div style="left:18px;top:153px;width:984px;height:341px;background:#fff;border-left:1px solid #828790;border-top:1px solid #828790;"></div>
<div style="left:19px;top:154px;width:981px;height:319px;background:#000;"></div>
<div style="left:19px;top:473px;width:981px;height:19px;background:#f0f0f0;"></div>
<div style="left:435px;top:473px;width:19px;height:19px;background:#cdcdcd;"></div>
<svg style="left:24px;top:478px" width="8" height="10" viewBox="0 0 8 10"><path d="M6,1 L2,5 L6,9" fill="none" stroke="#505050" stroke-width="1.8"/></svg>
<svg style="left:987px;top:478px" width="8" height="10" viewBox="0 0 8 10"><path d="M2,1 L6,5 L2,9" fill="none" stroke="#505050" stroke-width="1.8"/></svg>
<svg style="left:19px;top:154px" width="981" height="319" viewBox="19 154 981 319" shape-rendering="crispEdges"><rect x="66.5" y="191.5" width="886" height="254" fill="none" stroke="#6c6c6c"/><path d="M66,216.5H952M66,241.5H952M66,267.5H952M66,292.5H952M66,318.5H952M66,343.5H952M66,368.5H952M66,394.5H952M66,419.5H952M155.5,191V445M244.5,191V445M332.5,191V445M421.5,191V445M509.5,191V445M598.5,191V445M686.5,191V445M775.5,191V445M863.5,191V445" stroke="#7a7a7a" stroke-dasharray="3 3" fill="none"/></svg>
<svg style="left:19px;top:154px" width="981" height="319" viewBox="19 154 981 319" shape-rendering="crispEdges"><polyline points="66.9,364.6 68.9,366.9 70.9,369.0 72.9,371.0 74.9,372.8 76.9,374.4 78.9,375.9 80.9,377.2 82.9,378.2 84.9,379.1 86.9,379.8 88.9,380.3 90.9,380.6 92.9,380.7 94.9,380.5 96.9,380.2 98.9,379.7 100.9,379.0 102.9,378.0 104.9,376.9 106.9,375.6 108.9,374.1 110.9,372.5 112.9,370.6 114.9,368.6 116.9,366.4 118.9,364.1 120.9,361.6 122.9,359.0 124.9,356.2 126.9,353.3 128.9,350.3 130.9,347.2 132.9,344.1 134.9,340.8 136.9,337.4 138.9,334.0 140.9,330.6 142.9,327.1 144.9,323.5 146.9,320.0 148.9,316.4 150.9,312.9 152.9,309.4 154.9,305.9 156.9,302.4 158.9,299.0 160.9,295.7 162.9,292.4 164.9,289.2 166.9,286.1 168.9,283.1 170.9,280.2 172.9,277.5 174.9,274.9 176.9,272.4 178.9,270.1 180.9,267.9 182.9,265.9 184.9,264.0 186.9,262.4 188.9,260.9 190.9,259.6 192.9,258.5 194.9,257.6 196.9,256.9 198.9,256.4 200.9,256.1 202.9,255.9 204.9,256.0 206.9,256.3 208.9,256.8 210.9,257.5 212.9,258.4 214.9,259.5 216.9,260.8 218.9,262.2 220.9,263.9 222.9,265.7 224.9,267.7 226.9,269.8 228.9,272.2 230.9,274.6 232.9,277.2 234.9,280.0 236.9,282.8 238.9,285.8 240.9,288.9 242.9,292.1 244.9,295.3 246.9,298.7 248.9,302.1 250.9,305.5 252.9,309.0 254.9,312.5 256.9,316.1 258.9,319.6 260.9,323.2 262.9,326.7 264.9,330.2 266.9,333.7 268.9,337.1 270.9,340.5 272.9,343.7 274.9,346.9 276.9,350.0 278.9,353.0 280.9,355.9 282.9,358.7 284.9,361.3 286.9,363.8 288.9,366.2 290.9,368.4 292.9,370.4 294.9,372.3 296.9,374.0 298.9,375.5 300.9,376.8 302.9,377.9 304.9,378.9 306.9,379.6 308.9,380.2 310.9,380.5 312.9,380.7 314.9,380.6 316.9,380.3 318.9,379.9 320.9,379.2 322.9,378.3 324.9,377.3 326.9,376.0 328.9,374.6 330.9,373.0 332.9,371.2 334.9,369.2 336.9,367.1 338.9,364.8 340.9,362.4 342.9,359.8 344.9,357.1 346.9,354.2 348.9,351.3 350.9,348.2 352.9,345.0 354.9,341.8 356.9,338.4 358.9,335.1 360.9,331.6 362.9,328.1 364.9,324.6 366.9,321.1 368.9,317.5 370.9,314.0 372.9,310.4 374.9,306.9 376.9,303.4 378.9,300.0 380.9,296.6 382.9,293.4 384.9,290.1 386.9,287.0 388.9,284.0 390.9,281.1 392.9,278.3 394.9,275.6 396.9,273.1 398.9,270.7 400.9,268.5 402.9,266.5 404.9,264.6 406.9,262.9 408.9,261.3 410.9,260.0 412.9,258.8 414.9,257.8 416.9,257.1 418.9,256.5 420.9,256.1 422.9,256.0 424.9,256.0 426.9,256.2 428.9,256.7 430.9,257.3 432.9,258.1 434.9,259.1 436.9,260.4 438.9,261.8 440.9,263.4 442.9,265.1 444.9,267.1 446.9,269.2 448.9,271.4 450.9,273.9 452.9,276.4 454.9,279.1 456.9,281.9 458.9,284.9 460.9,287.9 462.9,291.1 464.9,294.3 466.9,297.7 468.9,301.0 470.9,304.5 472.9,308.0 474.9,311.5 476.9,315.0 478.9,318.6 480.9,322.1 482.9,325.7 484.9,329.2 486.9,332.6 488.9,336.1 490.9,339.5 492.9,342.8 494.9,346.0 496.9,349.1 498.9,352.2 500.9,355.1 502.9,357.9 504.9,360.6 506.9,363.1 508.9,365.5 510.9,367.7 512.9,369.8 514.9,371.7 516.9,373.5 518.9,375.1 520.9,376.4 522.9,377.6 524.9,378.6 526.9,379.4 528.9,380.0 530.9,380.4 532.9,380.6 534.9,380.6 536.9,380.4 538.9,380.0 540.9,379.4 542.9,378.6 544.9,377.6 546.9,376.4 548.9,375.1 550.9,373.5 552.9,371.7 554.9,369.8 556.9,367.7 558.9,365.5 560.9,363.1 562.9,360.6 564.9,357.9 566.9,355.1 568.9,352.2 570.9,349.1 572.9,346.0 574.9,342.8 576.9,339.5 578.9,336.1 580.9,332.6 582.9,329.2 584.9,325.7 586.9,322.1 588.9,318.6 590.9,315.0 592.9,311.5 594.9,308.0 596.9,304.5 598.9,301.0 600.9,297.7 602.9,294.3 604.9,291.1 606.9,287.9 608.9,284.9 610.9,281.9 612.9,279.1 614.9,276.4 616.9,273.9 618.9,271.4 620.9,269.2 622.9,267.1 624.9,265.1 626.9,263.4 628.9,261.8 630.9,260.4 632.9,259.1 634.9,258.1 636.9,257.3 638.9,256.7 640.9,256.2 642.9,256.0 644.9,256.0 646.9,256.1 648.9,256.5 650.9,257.1 652.9,257.8 654.9,258.8 656.9,260.0 658.9,261.3 660.9,262.9 662.9,264.6 664.9,266.5 666.9,268.5 668.9,270.7 670.9,273.1 672.9,275.6 674.9,278.3 676.9,281.1 678.9,284.0 680.9,287.0 682.9,290.1 684.9,293.4 686.9,296.6 688.9,300.0 690.9,303.4 692.9,306.9 694.9,310.4 696.9,314.0 698.9,317.5 700.9,321.1 702.9,324.6 704.9,328.1 706.9,331.6 708.9,335.1 710.9,338.4 712.9,341.8 714.9,345.0 716.9,348.2 718.9,351.3 720.9,354.2 722.9,357.1 724.9,359.8 726.9,362.4 728.9,364.8 730.9,367.1 732.9,369.2 734.9,371.2 736.9,373.0 738.9,374.6 740.9,376.0 742.9,377.3 744.9,378.3 746.9,379.2 748.9,379.9 750.9,380.3 752.9,380.6 754.9,380.7 756.9,380.5 758.9,380.2 760.9,379.6 762.9,378.9 764.9,377.9 766.9,376.8 768.9,375.5 770.9,374.0 772.9,372.3 774.9,370.4 776.9,368.4 778.9,366.2 780.9,363.8 782.9,361.3 784.9,358.7 786.9,355.9 788.9,353.0 790.9,350.0 792.9,346.9 794.9,343.7 796.9,340.5 798.9,337.1 800.9,333.7 802.9,330.2 804.9,326.7 806.9,323.2 808.9,319.6 810.9,316.1 812.9,312.5 814.9,309.0 816.9,305.5 818.9,302.1 820.9,298.7 822.9,295.3 824.9,292.1 826.9,288.9 828.9,285.8 830.9,282.8 832.9,280.0 834.9,277.2 836.9,274.6 838.9,272.2 840.9,269.8 842.9,267.7 844.9,265.7 846.9,263.9 848.9,262.2 850.9,260.8 852.9,259.5 854.9,258.4 856.9,257.5 858.9,256.8 860.9,256.3 862.9,256.0 864.9,255.9 866.9,256.1 868.9,256.4 870.9,256.9 872.9,257.6 874.9,258.5 876.9,259.6 878.9,260.9 880.9,262.4 882.9,264.0 884.9,265.9 886.9,267.9 888.9,270.1 890.9,272.4 892.9,274.9 894.9,277.5 896.9,280.2 898.9,283.1 900.9,286.1 902.9,289.2 904.9,292.4 906.9,295.7 908.9,299.0 910.9,302.4 912.9,305.9 914.9,309.4 916.9,312.9 918.9,316.4 920.9,320.0 922.9,323.5 924.9,327.1 926.9,330.6 928.9,334.0 930.9,337.4 932.9,340.8 934.9,344.1 936.9,347.2 938.9,350.3 940.9,353.3 942.9,356.2 944.9,359.0 946.9,361.6 948.9,364.1 950.9,366.4" fill="none" stroke="#00ffff" stroke-width="1"/><polyline points="66.9,412.7 68.9,411.2 70.9,409.3 72.9,407.2 74.9,404.8 76.9,402.1 78.9,399.1 80.9,395.9 82.9,392.4 84.9,388.7 86.9,384.7 88.9,380.6 90.9,376.2 92.9,371.7 94.9,366.9 96.9,362.1 98.9,357.0 100.9,351.9 102.9,346.6 104.9,341.3 106.9,335.9 108.9,330.4 110.9,324.9 112.9,319.4 114.9,313.8 116.9,308.3 118.9,302.8 120.9,297.4 122.9,292.0 124.9,286.7 126.9,281.5 128.9,276.4 130.9,271.5 132.9,266.7 134.9,262.1 136.9,257.7 138.9,253.4 140.9,249.4 142.9,245.6 144.9,242.0 146.9,238.7 148.9,235.6 150.9,232.8 152.9,230.3 154.9,228.1 156.9,226.1 158.9,224.4 160.9,223.1 162.9,222.0 164.9,221.3 166.9,220.9 168.9,220.8 170.9,221.0 172.9,221.5 174.9,222.3 176.9,223.5 178.9,224.9 180.9,226.7 182.9,228.7 184.9,231.0 186.9,233.6 188.9,236.5 190.9,239.7 192.9,243.1 194.9,246.7 196.9,250.6 198.9,254.7 200.9,259.0 202.9,263.5 204.9,268.2 206.9,273.0 208.9,278.0 210.9,283.1 212.9,288.3 214.9,293.6 216.9,299.0 218.9,304.5 220.9,310.0 222.9,315.5 224.9,321.0 226.9,326.6 228.9,332.1 230.9,337.5 232.9,342.9 234.9,348.2 236.9,353.4 238.9,358.6 240.9,363.5 242.9,368.4 244.9,373.0 246.9,377.5 248.9,381.8 250.9,385.9 252.9,389.8 254.9,393.5 256.9,396.9 258.9,400.0 260.9,402.9 262.9,405.5 264.9,407.9 266.9,409.9 268.9,411.7 270.9,413.1 272.9,414.3 274.9,415.1 276.9,415.6 278.9,415.8 280.9,415.7 282.9,415.3 284.9,414.6 286.9,413.5 288.9,412.2 290.9,410.5 292.9,408.6 294.9,406.3 296.9,403.8 298.9,401.0 300.9,398.0 302.9,394.6 304.9,391.1 306.9,387.3 308.9,383.2 310.9,379.0 312.9,374.6 314.9,369.9 316.9,365.2 318.9,360.2 320.9,355.2 322.9,350.0 324.9,344.7 326.9,339.3 328.9,333.9 330.9,328.4 332.9,322.9 334.9,317.3 336.9,311.8 338.9,306.3 340.9,300.8 342.9,295.4 344.9,290.1 346.9,284.8 348.9,279.7 350.9,274.6 352.9,269.8 354.9,265.0 356.9,260.5 358.9,256.1 360.9,251.9 362.9,248.0 364.9,244.3 366.9,240.8 368.9,237.6 370.9,234.6 372.9,231.9 374.9,229.4 376.9,227.3 378.9,225.5 380.9,223.9 382.9,222.7 384.9,221.7 386.9,221.1 388.9,220.8 390.9,220.8 392.9,221.1 394.9,221.8 396.9,222.7 398.9,224.0 400.9,225.5 402.9,227.4 404.9,229.5 406.9,231.9 408.9,234.7 410.9,237.6 412.9,240.9 414.9,244.4 416.9,248.1 418.9,252.1 420.9,256.2 422.9,260.6 424.9,265.2 426.9,269.9 428.9,274.8 430.9,279.8 432.9,285.0 434.9,290.2 436.9,295.6 438.9,301.0 440.9,306.5 442.9,312.0 444.9,317.5 446.9,323.0 448.9,328.6 450.9,334.1 452.9,339.5 454.9,344.9 456.9,350.1 458.9,355.3 460.9,360.4 462.9,365.3 464.9,370.1 466.9,374.7 468.9,379.1 470.9,383.4 472.9,387.4 474.9,391.2 476.9,394.7 478.9,398.0 480.9,401.1 482.9,403.9 484.9,406.4 486.9,408.6 488.9,410.6 490.9,412.2 492.9,413.6 494.9,414.6 496.9,415.3 498.9,415.7 500.9,415.8 502.9,415.6 504.9,415.1 506.9,414.2 508.9,413.1 510.9,411.6 512.9,409.9 514.9,407.8 516.9,405.5 518.9,402.8 520.9,399.9 522.9,396.8 524.9,393.4 526.9,389.7 528.9,385.8 530.9,381.7 532.9,377.4 534.9,372.9 536.9,368.2 538.9,363.4 540.9,358.4 542.9,353.3 544.9,348.1 546.9,342.7 548.9,337.3 550.9,331.9 552.9,326.4 554.9,320.9 556.9,315.3 558.9,309.8 560.9,304.3 562.9,298.8 564.9,293.4 566.9,288.1 568.9,282.9 570.9,277.8 572.9,272.8 574.9,268.0 576.9,263.3 578.9,258.9 580.9,254.6 582.9,250.5 584.9,246.6 586.9,243.0 588.9,239.6 590.9,236.4 592.9,233.6 594.9,231.0 596.9,228.6 598.9,226.6 600.9,224.9 602.9,223.4 604.9,222.3 606.9,221.5 608.9,221.0 610.9,220.8 612.9,220.9 614.9,221.3 616.9,222.1 618.9,223.1 620.9,224.5 622.9,226.2 624.9,228.1 626.9,230.4 628.9,232.9 630.9,235.7 632.9,238.8 634.9,242.1 636.9,245.7 638.9,249.5 640.9,253.6 642.9,257.8 644.9,262.3 646.9,266.9 648.9,271.7 650.9,276.6 652.9,281.7 654.9,286.9 656.9,292.2 658.9,297.5 660.9,303.0 662.9,308.5 664.9,314.0 666.9,319.5 668.9,325.1 670.9,330.6 672.9,336.0 674.9,341.5 676.9,346.8 678.9,352.0 680.9,357.2 682.9,362.2 684.9,367.1 686.9,371.8 688.9,376.3 690.9,380.7 692.9,384.8 694.9,388.8 696.9,392.5 698.9,396.0 700.9,399.2 702.9,402.2 704.9,404.9 706.9,407.3 708.9,409.4 710.9,411.2 712.9,412.8 714.9,414.0 716.9,414.9 718.9,415.5 720.9,415.8 722.9,415.8 724.9,415.5 726.9,414.8 728.9,413.8 730.9,412.6 732.9,411.0 734.9,409.1 736.9,407.0 738.9,404.5 740.9,401.8 742.9,398.8 744.9,395.6 746.9,392.0 748.9,388.3 750.9,384.3 752.9,380.2 754.9,375.8 756.9,371.2 758.9,366.5 760.9,361.6 762.9,356.6 764.9,351.4 766.9,346.1 768.9,340.8 770.9,335.4 772.9,329.9 774.9,324.4 776.9,318.8 778.9,313.3 780.9,307.8 782.9,302.3 784.9,296.9 786.9,291.5 788.9,286.2 790.9,281.0 792.9,276.0 794.9,271.1 796.9,266.3 798.9,261.7 800.9,257.3 802.9,253.1 804.9,249.0 806.9,245.3 808.9,241.7 810.9,238.4 812.9,235.4 814.9,232.6 816.9,230.1 818.9,227.9 820.9,225.9 822.9,224.3 824.9,223.0 826.9,222.0 828.9,221.2 830.9,220.9 832.9,220.8 834.9,221.0 836.9,221.6 838.9,222.4 840.9,223.6 842.9,225.1 844.9,226.8 846.9,228.9 848.9,231.3 850.9,233.9 852.9,236.8 854.9,240.0 856.9,243.4 858.9,247.1 860.9,251.0 862.9,255.1 864.9,259.4 866.9,263.9 868.9,268.6 870.9,273.4 872.9,278.4 874.9,283.6 876.9,288.8 878.9,294.1 880.9,299.5 882.9,305.0 884.9,310.5 886.9,316.0 888.9,321.5 890.9,327.1 892.9,332.6 894.9,338.0 896.9,343.4 898.9,348.7 900.9,353.9 902.9,359.0 904.9,364.0 906.9,368.8 908.9,373.5 910.9,377.9 912.9,382.2 914.9,386.3 916.9,390.2 918.9,393.8 920.9,397.2 922.9,400.3 924.9,403.2 926.9,405.8 928.9,408.1 930.9,410.1 932.9,411.8 934.9,413.2 936.9,414.4 938.9,415.2 940.9,415.7 942.9,415.8 944.9,415.7 946.9,415.3 948.9,414.5 950.9,413.4" fill="none" stroke="#ffff00" stroke-width="1"/></svg>
<div style="left:65px;top:184.5px;height:14px;line-height:14px;font-size:11.5px;color:#00ffff;font-family:'Liberation Sans',sans-serif;white-space:pre;font-weight:bold;left:58.60px;transform:scaleX(1.0600);transform-origin:100% 0;">2</div>
<div style="left:954px;top:184.5px;height:14px;line-height:14px;font-size:11.5px;color:#ffff00;font-family:'Liberation Sans',sans-serif;white-space:pre;font-weight:bold;transform:scaleX(1.0400);transform-origin:0 0;">2</div>
<div style="left:65px;top:209.5px;height:14px;line-height:14px;font-size:11.5px;color:#00ffff;font-family:'Liberation Sans',sans-serif;white-space:pre;font-weight:bold;left:49.02px;transform:scaleX(1.0600);transform-origin:100% 0;">1.6</div>
<div style="left:954px;top:209.5px;height:14px;line-height:14px;font-size:11.5px;color:#ffff00;font-family:'Liberation Sans',sans-serif;white-space:pre;font-weight:bold;transform:scaleX(1.0400);transform-origin:0 0;">1.6</div>
<div style="left:65px;top:234.5px;height:14px;line-height:14px;font-size:11.5px;color:#00ffff;font-family:'Liberation Sans',sans-serif;white-space:pre;font-weight:bold;left:49.02px;transform:scaleX(1.0600);transform-origin:100% 0;">1.2</div>
<div style="left:954px;top:234.5px;height:14px;line-height:14px;font-size:11.5px;color:#ffff00;font-family:'Liberation Sans',sans-serif;white-space:pre;font-weight:bold;transform:scaleX(1.0400);transform-origin:0 0;">1.2</div>
<div style="left:65px;top:260.5px;height:14px;line-height:14px;font-size:11.5px;color:#00ffff;font-family:'Liberation Sans',sans-serif;white-space:pre;font-weight:bold;left:49.02px;transform:scaleX(1.0600);transform-origin:100% 0;">0.8</div>
<div style="left:954px;top:260.5px;height:14px;line-height:14px;font-size:11.5px;color:#ffff00;font-family:'Liberation Sans',sans-serif;white-space:pre;font-weight:bold;transform:scaleX(1.0400);transform-origin:0 0;">0.8</div>
<div style="left:65px;top:285.5px;height:14px;line-height:14px;font-size:11.5px;color:#00ffff;font-family:'Liberation Sans',sans-serif;white-space:pre;font-weight:bold;left:49.02px;transform:scaleX(1.0600);transform-origin:100% 0;">0.4</div>
<div style="left:954px;top:285.5px;height:14px;line-height:14px;font-size:11.5px;color:#ffff00;font-family:'Liberation Sans',sans-serif;white-space:pre;font-weight:bold;transform:scaleX(1.0400);transform-origin:0 0;">0.4</div>
<div style="left:65px;top:311.5px;height:14px;line-height:14px;font-size:11.5px;color:#00ffff;font-family:'Liberation Sans',sans-serif;white-space:pre;font-weight:bold;left:58.60px;transform:scaleX(1.0600);transform-origin:100% 0;">0</div>
<div style="left:954px;top:311.5px;height:14px;line-height:14px;font-size:11.5px;color:#ffff00;font-family:'Liberation Sans',sans-serif;white-space:pre;font-weight:bold;transform:scaleX(1.0400);transform-origin:0 0;">0</div>
<div style="left:65px;top:336.5px;height:14px;line-height:14px;font-size:11.5px;color:#00ffff;font-family:'Liberation Sans',sans-serif;white-space:pre;font-weight:bold;left:45.19px;transform:scaleX(1.0600);transform-origin:100% 0;">-0.4</div>
<div style="left:954px;top:336.5px;height:14px;line-height:14px;font-size:11.5px;color:#ffff00;font-family:'Liberation Sans',sans-serif;white-space:pre;font-weight:bold;transform:scaleX(1.0400);transform-origin:0 0;">-0.4</div>
<div style="left:65px;top:361.5px;height:14px;line-height:14px;font-size:11.5px;color:#00ffff;font-family:'Liberation Sans',sans-serif;white-space:pre;font-weight:bold;left:45.19px;transform:scaleX(1.0600);transform-origin:100% 0;">-0.8</div>
<div style="left:954px;top:361.5px;height:14px;line-height:14px;font-size:11.5px;color:#ffff00;font-family:'Liberation Sans',sans-serif;white-space:pre;font-weight:bold;transform:scaleX(1.0400);transform-origin:0 0;">-0.8</div>
<div style="left:65px;top:387.5px;height:14px;line-height:14px;font-size:11.5px;color:#00ffff;font-family:'Liberation Sans',sans-serif;white-space:pre;font-weight:bold;left:45.19px;transform:scaleX(1.0600);transform-origin:100% 0;">-1.2</div>
<div style="left:954px;top:387.5px;height:14px;line-height:14px;font-size:11.5px;color:#ffff00;font-family:'Liberation Sans',sans-serif;white-space:pre;font-weight:bold;transform:scaleX(1.0400);transform-origin:0 0;">-1.2</div>
<div style="left:65px;top:412.5px;height:14px;line-height:14px;font-size:11.5px;color:#00ffff;font-family:'Liberation Sans',sans-serif;white-space:pre;font-weight:bold;left:45.19px;transform:scaleX(1.0600);transform-origin:100% 0;">-1.6</div>
<div style="left:954px;top:412.5px;height:14px;line-height:14px;font-size:11.5px;color:#ffff00;font-family:'Liberation Sans',sans-serif;white-space:pre;font-weight:bold;transform:scaleX(1.0400);transform-origin:0 0;">-1.6</div>
<div style="left:65px;top:438.5px;height:14px;line-height:14px;font-size:11.5px;color:#00ffff;font-family:'Liberation Sans',sans-serif;white-space:pre;font-weight:bold;left:54.78px;transform:scaleX(1.0600);transform-origin:100% 0;">-2</div>
<div style="left:954px;top:438.5px;height:14px;line-height:14px;font-size:11.5px;color:#ffff00;font-family:'Liberation Sans',sans-serif;white-space:pre;font-weight:bold;transform:scaleX(1.0400);transform-origin:0 0;">-2</div>
<div style="left:67px;top:448px;height:14px;line-height:14px;font-size:11.5px;color:#fff;font-family:'Liberation Sans',sans-serif;white-space:pre;font-weight:bold;left:49.41px;transform:scaleX(1.0000);transform-origin:50% 0;">0.8582</div>
<div style="left:156px;top:448px;height:14px;line-height:14px;font-size:11.5px;color:#fff;font-family:'Liberation Sans',sans-serif;white-space:pre;font-weight:bold;left:138.41px;transform:scaleX(1.0000);transform-origin:50% 0;">0.8586</div>
<div style="left:245px;top:448px;height:14px;line-height:14px;font-size:11.5px;color:#fff;font-family:'Liberation Sans',sans-serif;white-space:pre;font-weight:bold;left:230.61px;transform:scaleX(1.0000);transform-origin:50% 0;">0.859</div>
<div style="left:333px;top:448px;height:14px;line-height:14px;font-size:11.5px;color:#fff;font-family:'Liberation Sans',sans-serif;white-space:pre;font-weight:bold;left:315.41px;transform:scaleX(1.0000);transform-origin:50% 0;">0.8594</div>
<div style="left:422px;top:448px;height:14px;line-height:14px;font-size:11.5px;color:#fff;font-family:'Liberation Sans',sans-serif;white-space:pre;font-weight:bold;left:404.41px;transform:scaleX(1.0000);transform-origin:50% 0;">0.8598</div>
<div style="left:510px;top:448px;height:14px;line-height:14px;font-size:11.5px;color:#fff;font-family:'Liberation Sans',sans-serif;white-space:pre;font-weight:bold;left:492.41px;transform:scaleX(1.0000);transform-origin:50% 0;">0.8602</div>
<div style="left:599px;top:448px;height:14px;line-height:14px;font-size:11.5px;color:#fff;font-family:'Liberation Sans',sans-serif;white-space:pre;font-weight:bold;left:581.41px;transform:scaleX(1.0000);transform-origin:50% 0;">0.8606</div>
<div style="left:687px;top:448px;height:14px;line-height:14px;font-size:11.5px;color:#fff;font-family:'Liberation Sans',sans-serif;white-space:pre;font-weight:bold;left:672.61px;transform:scaleX(1.0000);transform-origin:50% 0;">0.861</div>
<div style="left:776px;top:448px;height:14px;line-height:14px;font-size:11.5px;color:#fff;font-family:'Liberation Sans',sans-serif;white-space:pre;font-weight:bold;left:758.41px;transform:scaleX(1.0000);transform-origin:50% 0;">0.8614</div>
<div style="left:864px;top:448px;height:14px;line-height:14px;font-size:11.5px;color:#fff;font-family:'Liberation Sans',sans-serif;white-space:pre;font-weight:bold;left:846.41px;transform:scaleX(1.0000);transform-origin:50% 0;">0.8618</div>
<div style="left:953px;top:448px;height:14px;line-height:14px;font-size:11.5px;color:#fff;font-family:'Liberation Sans',sans-serif;white-space:pre;font-weight:bold;left:935.41px;transform:scaleX(1.0000);transform-origin:50% 0;">0.8622</div>
<div style="left:19px;top:457px;height:14px;line-height:14px;font-size:11.5px;color:#fff;font-family:'Liberation Sans',sans-serif;white-space:pre;font-weight:bold;transform:scaleX(0.9584);transform-origin:0 0;">+11:28:08:326</div>
<div style="left:509px;top:457px;height:14px;line-height:14px;font-size:11.5px;color:#fff;font-family:'Liberation Sans',sans-serif;white-space:pre;font-weight:bold;left:475.57px;transform:scaleX(0.9870);transform-origin:50% 0;">WAVEFORM</div>
<div style="left:961px;top:457px;height:14px;line-height:14px;font-size:11.5px;color:#fff;font-family:'Liberation Sans',sans-serif;white-space:pre;font-weight:bold;left:957.80px;">s</div>
<div style="left:31px;top:166px;height:14px;line-height:14px;font-size:11.5px;color:#00ffff;font-family:'Liberation Sans',sans-serif;white-space:pre;font-weight:bold;transform:scaleX(0.9828);transform-origin:0 0;">A (mV)</div>
<div style="left:952px;top:166px;height:14px;line-height:14px;font-size:11.5px;color:#ffff00;font-family:'Liberation Sans',sans-serif;white-space:pre;font-weight:bold;transform:scaleX(1.0064);transform-origin:0 0;">B (V)</div>
<svg style="left:106px;top:165px" width="17" height="9" viewBox="0 0 18 9"><path d="M0,4.5 H18 M7.5,1 L9,4.5 L7.5,8 M10.5,1 L9,4.5 L10.5,8" stroke="#00ffff" fill="none" stroke-width="1"/></svg>
<svg style="left:888px;top:165px" width="17" height="9" viewBox="0 0 18 9"><path d="M0,4.5 H18 M7.5,1 L9,4.5 L7.5,8 M10.5,1 L9,4.5 L10.5,8" stroke="#ffff00" fill="none" stroke-width="1"/></svg>
<svg style="left:62px;top:305px" width="9" height="16" viewBox="0 0 9 16"><path d="M5.5,14 V2 M2.5,5.5 L5.5,1.5 L8.5,5.5" stroke="#00ffff" fill="none" stroke-width="1"/></svg>
<div style="left:931.5px;top:193.5px;height:14px;line-height:14px;font-size:16px;color:#fff;font-family:'Liberation Sans',sans-serif;white-space:pre;font-weight:bold;transform:scaleX(1.0691);transform-origin:0 0;">Mi</div>
<div style="left:932px;top:196px;width:20px;height:1px;background:#000;"></div>
<div style="left:932px;top:198px;width:20px;height:1px;background:#000;"></div>
<div style="left:932px;top:200px;width:20px;height:1px;background:#000;"></div>
<div style="left:932px;top:193px;width:20px;height:2px;background:#000;"></div>
<div style="left:255px;top:155px;height:13px;line-height:13px;font-size:11px;color:#00ffff;font-family:'Liberation Sans',sans-serif;white-space:pre;font-weight:bold;transform:scaleX(0.9886);transform-origin:0 0;">A: Max=</div>
<div style="left:324px;top:155px;height:13px;line-height:13px;font-size:11px;color:#00ffff;font-family:'Liberation Sans',sans-serif;white-space:pre;font-weight:bold;transform:scaleX(1.0061);transform-origin:0 0;">1.00959</div>
<div style="left:367px;top:155px;height:13px;line-height:13px;font-size:11px;color:#00ffff;font-family:'Liberation Sans',sans-serif;white-space:pre;font-weight:bold;transform:scaleX(0.9931);transform-origin:0 0;">mV</div>
<div style="left:390px;top:155px;height:13px;line-height:13px;font-size:11px;color:#00ffff;font-family:'Liberation Sans',sans-serif;white-space:pre;font-weight:bold;transform:scaleX(0.9463);transform-origin:0 0;">Min=</div>
<div style="left:438px;top:155px;height:13px;line-height:13px;font-size:11px;color:#00ffff;font-family:'Liberation Sans',sans-serif;white-space:pre;font-weight:bold;transform:scaleX(0.9673);transform-origin:0 0;">-1.01290</div>
<div style="left:485px;top:155px;height:13px;line-height:13px;font-size:11px;color:#00ffff;font-family:'Liberation Sans',sans-serif;white-space:pre;font-weight:bold;transform:scaleX(0.9931);transform-origin:0 0;">mV</div>
<div style="left:508px;top:155px;height:13px;line-height:13px;font-size:11px;color:#00ffff;font-family:'Liberation Sans',sans-serif;white-space:pre;font-weight:bold;transform:scaleX(0.9844);transform-origin:0 0;">Mean=</div>
<div style="left:604px;top:155px;height:13px;line-height:13px;font-size:11px;color:#00ffff;font-family:'Liberation Sans',sans-serif;white-space:pre;font-weight:bold;transform:scaleX(0.9203);transform-origin:0 0;">-0</div>
<div style="left:621px;top:155px;height:13px;line-height:13px;font-size:11px;color:#00ffff;font-family:'Liberation Sans',sans-serif;white-space:pre;font-weight:bold;transform:scaleX(0.9960);transform-origin:0 0;">nV</div>
<div style="left:641px;top:155px;height:13px;line-height:13px;font-size:11px;color:#00ffff;font-family:'Liberation Sans',sans-serif;white-space:pre;font-weight:bold;transform:scaleX(0.9719);transform-origin:0 0;">RMS=</div>
<div style="left:704px;top:155px;height:13px;line-height:13px;font-size:11px;color:#00ffff;font-family:'Liberation Sans',sans-serif;white-space:pre;font-weight:bold;transform:scaleX(0.9809);transform-origin:0 0;">699.616</div>
<div style="left:750px;top:155px;height:13px;line-height:13px;font-size:11px;color:#00ffff;font-family:'Liberation Sans',sans-serif;white-space:pre;font-weight:bold;transform:scaleX(1.0968);transform-origin:0 0;">µV</div>
<div style="left:255px;top:167px;height:13px;line-height:13px;font-size:11px;color:#ffff00;font-family:'Liberation Sans',sans-serif;white-space:pre;font-weight:bold;transform:scaleX(0.9886);transform-origin:0 0;">B: Max=</div>
<div style="left:312px;top:167px;height:13px;line-height:13px;font-size:11px;color:#ffff00;font-family:'Liberation Sans',sans-serif;white-space:pre;font-weight:bold;transform:scaleX(0.9809);transform-origin:0 0;">1.5356415</div>
<div style="left:378px;top:167px;height:13px;line-height:13px;font-size:11px;color:#ffff00;font-family:'Liberation Sans',sans-serif;white-space:pre;font-weight:bold;transform:scaleX(0.9540);transform-origin:0 0;">V</div>
<div style="left:390px;top:167px;height:13px;line-height:13px;font-size:11px;color:#ffff00;font-family:'Liberation Sans',sans-serif;white-space:pre;font-weight:bold;transform:scaleX(0.9463);transform-origin:0 0;">Min=</div>
<div style="left:426px;top:167px;height:13px;line-height:13px;font-size:11px;color:#ffff00;font-family:'Liberation Sans',sans-serif;white-space:pre;font-weight:bold;transform:scaleX(0.9882);transform-origin:0 0;">-1.5360272</div>
<div style="left:496px;top:167px;height:13px;line-height:13px;font-size:11px;color:#ffff00;font-family:'Liberation Sans',sans-serif;white-space:pre;font-weight:bold;transform:scaleX(0.9540);transform-origin:0 0;">V</div>
<div style="left:508px;top:167px;height:13px;line-height:13px;font-size:11px;color:#ffff00;font-family:'Liberation Sans',sans-serif;white-space:pre;font-weight:bold;transform:scaleX(0.9844);transform-origin:0 0;">Mean=</div>
<div style="left:593px;top:167px;height:13px;line-height:13px;font-size:11px;color:#ffff00;font-family:'Liberation Sans',sans-serif;white-space:pre;font-weight:bold;transform:scaleX(0.9810);transform-origin:0 0;">0.00</div>
<div style="left:621px;top:167px;height:13px;line-height:13px;font-size:11px;color:#ffff00;font-family:'Liberation Sans',sans-serif;white-space:pre;font-weight:bold;transform:scaleX(1.0968);transform-origin:0 0;">µV</div>
<div style="left:641px;top:167px;height:13px;line-height:13px;font-size:11px;color:#ffff00;font-family:'Liberation Sans',sans-serif;white-space:pre;font-weight:bold;transform:scaleX(0.9719);transform-origin:0 0;">RMS=</div>
<div style="left:686px;top:167px;height:13px;line-height:13px;font-size:11px;color:#ffff00;font-family:'Liberation Sans',sans-serif;white-space:pre;font-weight:bold;transform:scaleX(0.9809);transform-origin:0 0;">1.08575979</div>
<div style="left:757px;top:167px;height:13px;line-height:13px;font-size:11px;color:#ffff00;font-family:'Liberation Sans',sans-serif;white-space:pre;font-weight:bold;transform:scaleX(1.0903);transform-origin:0 0;">V</div>
<div style="left:9px;top:502px;width:1411px;height:553px;background:linear-gradient(180deg,#b9c9dc 0px,#c3d2e4 8px,#cfdcec 20px,#d6e2f0 34px,#d3e0ef 35px);border:1px solid #3f3f3f;border-radius:4px 4px 0 0;box-shadow:inset 1px 1px 0 rgba(255,255,255,.75),inset -1px -1px 0 rgba(255,255,255,.55);"></div>
<svg style="left:19px;top:514px" width="16" height="16" viewBox="0 0 16 16"><rect width="16" height="16" fill="#0000ff"/><path d="M1.5,1 V14 M4.5,3 V14 M7.5,8 V14 M10.5,10 V14 M13.5,9 V14 M0,14.5 H16" stroke="#ffff00" stroke-width="1.2" fill="none"/></svg>
<div style="left:39px;top:513.7px;height:20px;line-height:20px;font-size:12.5px;color:#8c8c8c;font-family:'Liberation Sans',sans-serif;white-space:pre;transform:scaleX(1.0350);transform-origin:0 0;">Spectrum Analyzer</div>
<div style="left:1298px;top:512px;width:35px;height:20px;background:linear-gradient(180deg,#d3dfed 0%,#c9d8e9 45%,#bccde1 50%,#c6d5e7 100%);border:1px solid #8c9db7;border-radius:3px;box-shadow:inset 0 0 0 1px rgba(255,255,255,.45);"></div>
<div style="left:1336px;top:512px;width:35px;height:20px;background:linear-gradient(180deg,#d3dfed 0%,#c9d8e9 45%,#bccde1 50%,#c6d5e7 100%);border:1px solid #8c9db7;border-radius:3px;box-shadow:inset 0 0 0 1px rgba(255,255,255,.45);"></div>
<div style="left:1374px;top:512px;width:36px;height:20px;background:linear-gradient(180deg,#d3dfed 0%,#c9d8e9 45%,#bccde1 50%,#c6d5e7 100%);border:1px solid #8c9db7;border-radius:3px;box-shadow:inset 0 0 0 1px rgba(255,255,255,.45);"></div>
<div style="left:1309px;top:523px;width:13px;height:5px;background:#fff;border:1px solid #4b5a70;border-radius:1px;"></div>
<div style="left:1347px;top:516px;width:13px;height:12px;background:#fff;border:1px solid #4b5a70;border-radius:1px;"></div>
<div style="left:1351px;top:520px;width:5px;height:4px;background:#8ea6c8;border:1px solid #4b5a70;"></div>
<svg style="left:1385.2px;top:516.5px" width="13" height="11.4" viewBox="0 0 16 14"><path d="M2.5,1.5 L13.5,12.5 M13.5,1.5 L2.5,12.5" stroke="#43506a" stroke-width="5.6" stroke-linecap="round"/><path d="M2.5,1.5 L13.5,12.5 M13.5,1.5 L2.5,12.5" stroke="#fff" stroke-width="3.4" stroke-linecap="round"/></svg>
<div style="left:18px;top:535px;width:1394px;height:512px;background:#fff;border-left:1px solid #828790;border-top:1px solid #828790;"></div>
<div style="left:35px;top:536px;width:1359px;height:509px;background:#000;"></div>
<div style="left:19px;top:536px;width:16px;height:509px;background:#fff;background-image:repeating-conic-gradient(#f0f0f0 0 25%,#fff 0 50%);background-size:2px 2px;"></div>
<div style="left:19px;top:536px;width:16px;height:19px;background:#f0f0f0;box-shadow:inset 1px 1px 0 #fff,inset -1px -1px 0 #696969,inset -2px -2px 0 #a0a0a0;"></div>
<svg style="left:22px;top:542px" width="9" height="5" viewBox="0 0 9 5"><polygon points="0,5 9,5 4.5,0.5" fill="#000"/></svg>
<div style="left:19px;top:1026px;width:16px;height:19px;background:#f0f0f0;box-shadow:inset 1px 1px 0 #fff,inset -1px -1px 0 #696969,inset -2px -2px 0 #a0a0a0;"></div>
<svg style="left:22px;top:1032px" width="9" height="5" viewBox="0 0 9 5"><polygon points="0,0 9,0 4.5,4.5" fill="#000"/></svg>
<div style="left:19px;top:759px;width:16px;height:19px;background:#f0f0f0;box-shadow:inset 1px 1px 0 #fff,inset -1px -1px 0 #696969,inset -2px -2px 0 #a0a0a0;"></div>
<div style="left:1394px;top:536px;width:16px;height:509px;background:#fff;background-image:repeating-conic-gradient(#f0f0f0 0 25%,#fff 0 50%);background-size:2px 2px;"></div>
<div style="left:1394px;top:536px;width:16px;height:19px;background:#f0f0f0;box-shadow:inset 1px 1px 0 #fff,inset -1px -1px 0 #696969,inset -2px -2px 0 #a0a0a0;"></div>
<svg style="left:1397px;top:542px" width="9" height="5" viewBox="0 0 9 5"><polygon points="0,5 9,5 4.5,0.5" fill="#000"/></svg>
<div style="left:1394px;top:1026px;width:16px;height:19px;background:#f0f0f0;box-shadow:inset 1px 1px 0 #fff,inset -1px -1px 0 #696969,inset -2px -2px 0 #a0a0a0;"></div>
<svg style="left:1397px;top:1032px" width="9" height="5" viewBox="0 0 9 5"><polygon points="0,0 9,0 4.5,4.5" fill="#000"/></svg>
<div style="left:1394px;top:782px;width:16px;height:19px;background:#f0f0f0;box-shadow:inset 1px 1px 0 #fff,inset -1px -1px 0 #696969,inset -2px -2px 0 #a0a0a0;"></div>
<svg style="left:35px;top:536px" width="1359" height="509" viewBox="35 536 1359 509" shape-rendering="crispEdges"><rect x="83.5" y="573.5" width="1263" height="444" fill="none" stroke="#6c6c6c"/><path d="M83,617.5H1346M83,661.5H1346M83,706.5H1346M83,750.5H1346M83,795.5H1346M83,839.5H1346M83,884.5H1346M83,928.5H1346M83,973.5H1346M155.5,573V1017M206.5,573V1017M246.5,573V1017M279.5,573V1017M306.5,573V1017M330.5,573V1017M351.5,573V1017M370.5,573V1017M493.5,573V1017M565.5,573V1017M617.5,573V1017M656.5,573V1017M689.5,573V1017M716.5,573V1017M740.5,573V1017M761.5,573V1017M780.5,573V1017M903.5,573V1017M976.5,573V1017M1027.5,573V1017M1067.5,573V1017M1099.5,573V1017M1127.5,573V1017M1150.5,573V1017M1171.5,573V1017M1190.5,573V1017M1314.5,573V1017" stroke="#7a7a7a" stroke-dasharray="3 3" fill="none"/><path d="M83,823.5H1314" stroke="#ffff00" stroke-dasharray="3 3" fill="none"/><path d="M83,836.5H1314" stroke="#00ffff" stroke-dasharray="3 3" fill="none"/></svg>
<svg style="left:35px;top:536px" width="1359" height="509" viewBox="35 536 1359 509"><clipPath id="spc"><rect x="83" y="573" width="1264" height="444"/></clipPath><g clip-path="url(#spc)" fill="none" stroke-width="1" stroke-linejoin="round" shape-rendering="crispEdges"><path d="M80.5,963.9 84.5,960.0 87.5,959.9 90.5,960.8 93.5,961.5 96.5,960.6 99.5,959.8 102.5,959.2 105.5,958.4 108.5,957.4 111.5,958.3 113.5,960.0 116.5,966.4 119.5,964.3 121.5,958.4 124.5,963.7 127.5,965.5 129.5,961.5 132.5,963.4 134.5,966.6 136.5,962.6 139.5,960.8 141.5,963.3 144.5,963.0 146.5,960.2 148.5,957.0 150.5,950.8 153.5,954.7 155.5,960.8 157.5,959.6 159.5,958.1 161.5,961.5 163.5,966.4 165.5,964.4 167.5,962.0 169.5,960.5 171.5,958.7 173.5,959.4 175.5,961.0 177.5,960.8 179.5,959.8 181.5,959.7 183.5,960.3 185.5,960.6 186.5,963.0 188.5,965.3 190.5,963.1 192.5,959.5 194.5,959.6 195.5,962.7 197.5,964.5 199.5,959.9 200.5,955.2 202.5,955.9 204.5,960.4 205.5,963.3 207.5,961.2 209.5,959.0 210.5,958.9 212.5,960.1 213.5,961.0 215.5,960.3 217.5,958.6 218.5,957.8 220.5,959.7 221.5,962.9 223.5,963.6 224.5,960.7 226.5,958.1 227.5,957.9 228.5,959.6 230.5,961.4 231.5,961.2 233.5,959.0 234.5,957.0 235.5,956.9 237.5,953.6 238.5,930.4 240.5,903.6 241.5,881.9 242.5,865.4 244.5,854.4 245.5,848.9 246.5,848.7 247.5,853.9 249.5,864.5 250.5,880.6 251.5,902.0 253.5,928.5 254.5,953.5 255.5,959.4 256.5,959.5 258.5,958.0 259.5,956.3 260.5,955.6 261.5,957.0 262.5,960.1 264.5,962.8 265.5,963.1 266.5,961.6 267.5,960.2 268.5,959.5 269.5,959.5 270.5,959.6 272.5,959.7 273.5,959.7 274.5,959.9 275.5,960.3 276.5,960.5 277.5,960.6 278.5,960.7 279.5,960.8 280.5,960.9 281.5,960.9 283.5,960.9 284.5,961.0 285.5,961.0 286.5,961.2 287.5,962.1 288.5,963.6 289.5,964.6 290.5,964.8 291.5,965.4 292.5,966.2 293.5,966.8 294.5,966.9 295.5,966.2 296.5,965.1 297.5,964.2 298.5,963.9 299.5,963.1 300.5,961.6 301.5,960.4 302.5,959.8 303.5,959.5 304.5,958.6 304.5,957.5 305.5,956.6 306.5,956.4 307.5,956.7 308.5,957.4 309.5,958.0 310.5,958.4 311.5,958.4 312.5,958.3 313.5,958.2 314.5,958.2 315.5,958.2 315.5,958.3 316.5,958.6 317.5,958.9 318.5,959.2 319.5,959.2 320.5,959.3 321.5,959.4 321.5,959.5 322.5,959.5 323.5,959.6 324.5,959.9 325.5,960.4 326.5,961.0 326.5,961.4 327.5,961.5 328.5,961.2 329.5,960.7 330.5,960.0 331.5,959.5 331.5,959.4 332.5,959.0 333.5,958.1 334.5,956.9 335.5,956.0 335.5,955.6 336.5,956.1 337.5,957.8 338.5,960.0 339.5,962.2 339.5,963.8 340.5,964.2 341.5,964.4 342.5,964.9 342.5,965.5 343.5,965.9 344.5,966.1 345.5,965.2 345.5,962.4 346.5,959.7 347.5,957.1 348.5,955.4 348.5,955.1 349.5,955.8 350.5,957.3 350.5,959.0 351.5,960.6 352.5,961.5 353.5,961.6 353.5,961.2 354.5,960.6 355.5,959.8 355.5,959.2 356.5,958.9 357.5,958.9 358.5,958.9 358.5,959.0 359.5,959.1 360.5,959.2 360.5,959.3 361.5,959.4 362.5,960.4 362.5,962.1 363.5,964.5 364.5,966.9 364.5,968.5 365.5,968.7 366.5,966.9 366.5,962.7 367.5,944.2 368.5,913.6 368.5,893.8 369.5,886.6 370.5,892.1 370.5,910.2 371.5,939.1 372.5,954.7 372.5,955.6 373.5,955.9 374.5,956.1 374.5,956.7 375.5,957.9 375.5,959.3 376.5,960.7 377.5,961.8 377.5,962.3 378.5,962.2 379.5,962.0 379.5,961.6 380.5,961.1 380.5,960.6 381.5,960.3 382.5,960.2 382.5,960.3 383.5,960.7 383.5,961.1 384.5,961.7 385.5,962.2 385.5,962.5 386.5,962.7 386.5,962.9 387.5,963.4 388.5,964.5 388.5,965.6 389.5,966.7 389.5,967.5 390.5,967.9 391.5,967.8 391.5,967.3 392.5,966.6 392.5,965.8 393.5,965.0 393.5,964.3 394.5,964.0 395.5,963.9 395.5,963.7 396.5,963.4 396.5,963.0 397.5,962.7 397.5,962.4 398.5,962.1 398.5,962.1 399.5,962.0 400.5,961.7 400.5,961.2 401.5,960.7 401.5,960.2 402.5,959.7 402.5,959.5 403.5,959.5 403.5,959.6 404.5,959.8 404.5,960.1 405.5,960.4 406.5,960.7 406.5,960.9 407.5,961.0 407.5,961.1 408.5,961.3 408.5,961.6 409.5,962.0 409.5,962.5 410.5,963.0 410.5,963.3 411.5,963.5 411.5,963.5 412.5,963.3 412.5,962.7 413.5,961.9 413.5,961.0 414.5,960.2 414.5,959.5 415.5,959.1 415.5,959.0 416.5,959.3 416.5,960.1 417.5,961.3 417.5,962.7 418.5,964.2 418.5,965.9 419.5,967.1 419.5,967.7 420.5,967.6 420.5,967.1 421.5,966.1 421.5,964.8 422.5,963.6 422.5,962.7 423.5,961.9 423.5,961.4 424.5,961.2 424.5,961.2 425.5,961.1 425.5,961.0 426.5,960.8 426.5,960.6 427.5,960.4 427.5,960.3 428.5,960.2 428.5,960.4 429.5,960.9 429.5,961.7 430.5,962.5 430.5,963.4 431.5,964.2 431.5,965.0 432.5,965.5 432.5,965.7 433.5,966.0 433.5,966.6 434.5,967.6 434.5,970.0 435.5,971.2 435.5,972.1 436.5,972.8 436.5,973.0 437.5,973.0 437.5,972.7 438.5,972.2 438.5,970.8 439.5,970.2 439.5,969.6 440.5,969.1 440.5,963.7 441.5,930.2 441.5,908.5 442.5,906.6 442.5,957.5 443.5,965.8 443.5,964.8 444.5,964.3 444.5,964.3 445.5,964.0 445.5,963.1 446.5,962.5 446.5,963.0 447.5,963.5 447.5,964.1 448.5,963.8 448.5,962.6 449.5,963.0 449.5,962.7 450.5,963.0 450.5,960.3 451.5,961.8 451.5,962.7 452.5,962.2 452.5,959.4 453.5,960.2 453.5,959.6 454.5,961.0 454.5,961.9 455.5,961.2 455.5,965.3 456.5,965.8 456.5,965.5 457.5,966.7 457.5,969.8 458.5,971.1 458.5,970.1 459.5,967.9 459.5,965.2 460.5,967.6 460.5,966.4 461.5,964.9 461.5,963.8 462.5,968.7 462.5,966.6 463.5,964.6 463.5,964.5 464.5,964.4 464.5,961.8 465.5,961.5 465.5,964.1 466.5,963.0 466.5,963.3 467.5,964.2 467.5,963.3 468.5,962.8 468.5,963.4 469.5,965.0 469.5,967.9 470.5,968.2 470.5,967.4 471.5,969.8 471.5,965.9 472.5,969.1 472.5,972.2 473.5,972.7 473.5,973.3 474.5,970.4 474.5,973.7 475.5,973.3 475.5,969.2 476.5,973.4 476.5,970.6 477.5,967.5 477.5,963.6 478.5,965.5 478.5,964.8 479.5,962.9 479.5,964.1 480.5,963.6 480.5,960.4 481.5,953.7 481.5,961.2 482.5,959.9 482.5,960.4 483.5,960.5 483.5,959.5 484.5,958.3 484.5,959.0 485.5,960.8 485.5,959.7 486.5,961.0 486.5,965.6 487.5,964.8 487.5,962.6 488.5,963.4 488.5,966.5 489.5,966.4 489.5,965.8 490.5,974.1 490.5,967.8 491.5,968.5 491.5,970.0 492.5,970.6 492.5,923.0 493.5,910.5 493.5,944.0 494.5,966.8 494.5,968.0 495.5,967.8 495.5,965.9 496.5,968.8 496.5,970.5 497.5,968.5 497.5,969.9 498.5,966.9 498.5,964.9 499.5,965.3 499.5,966.1 500.5,964.0 500.5,963.1 501.5,964.5 501.5,963.0 502.5,962.0 502.5,961.1 503.5,962.3 503.5,961.9 504.5,959.9 504.5,956.8 505.5,959.4 505.5,962.3 506.5,963.4 506.5,964.4 507.5,962.7 507.5,965.7 508.5,966.5 508.5,960.9 509.5,968.8 509.5,967.4 510.5,963.7 510.5,966.2 511.5,969.3 511.5,964.0 512.5,967.5 512.5,964.7 513.5,969.2 513.5,963.8 514.5,963.5 514.5,962.1 515.5,961.6 515.5,965.5 516.5,963.6 516.5,965.7 517.5,959.7 517.5,966.4 518.5,967.9 518.5,964.6 519.5,964.2 519.5,967.4 520.5,964.7 520.5,968.2 521.5,962.7 521.5,969.3 522.5,966.5 522.5,958.2 523.5,964.2 523.5,966.5 524.5,969.6 524.5,962.3 525.5,960.3 525.5,965.1 526.5,965.1 526.5,963.6 527.5,959.8 527.5,968.4 528.5,970.8 528.5,966.4 529.5,967.7 529.5,970.8 530.5,965.0 530.5,962.7 531.5,970.3 531.5,965.2 532.5,956.3 532.5,891.4 533.5,908.0 533.5,967.5 534.5,971.8 534.5,968.1 535.5,972.2 535.5,966.3 536.5,966.1 536.5,966.8 537.5,966.0 537.5,963.0 538.5,966.7 538.5,961.9 539.5,963.5 539.5,969.2 540.5,964.1 540.5,967.2 541.5,961.1 541.5,965.9 542.5,963.2 542.5,965.4 543.5,965.2 543.5,965.9 544.5,965.9 544.5,968.3 545.5,966.7 545.5,968.3 546.5,964.0 546.5,970.3 547.5,970.8 547.5,966.2 548.5,969.4 548.5,963.9 549.5,962.8 549.5,969.9 550.5,963.7 550.5,971.5 551.5,969.9 551.5,964.7 552.5,966.0 552.5,973.2 553.5,970.7 553.5,975.5 554.5,974.1 554.5,968.2 555.5,963.4 555.5,976.5 556.5,971.5 556.5,965.0 557.5,969.3 557.5,966.6 558.5,965.0 558.5,971.8 559.5,972.9 559.5,967.2 560.5,964.1 560.5,971.1 561.5,963.8 561.5,970.9 562.5,972.6 562.5,967.2 563.5,967.8 563.5,978.1 564.5,971.3 564.5,963.4 565.5,921.8 565.5,969.2 566.5,969.1 566.5,967.3 567.5,971.3 567.5,964.6 568.5,964.8 568.5,972.2 569.5,971.2 569.5,966.1 570.5,967.0 570.5,969.0 571.5,973.0 571.5,963.4 572.5,965.5 572.5,968.0 573.5,971.1 573.5,965.2 574.5,967.3 574.5,971.0 575.5,964.1 575.5,974.0 576.5,966.6 576.5,973.4 577.5,965.0 577.5,975.2 578.5,972.2 578.5,963.6 579.5,963.9 579.5,977.1 580.5,967.3 580.5,970.7 581.5,969.1 581.5,963.9 582.5,967.3 582.5,961.2 583.5,965.4 583.5,976.2 584.5,965.3 584.5,970.9 585.5,966.9 585.5,962.5 586.5,966.3 586.5,971.2 587.5,964.6 587.5,968.8 588.5,971.9 588.5,961.1 589.5,966.8 589.5,971.0 590.5,969.2 590.5,974.4 591.5,971.6 591.5,968.9 592.5,974.4 592.5,894.4 593.5,909.6 593.5,969.6 594.5,967.8 594.5,962.2 595.5,966.0 595.5,962.1 596.5,963.3 596.5,969.8 597.5,971.4 597.5,965.4 598.5,965.5 598.5,969.9 599.5,971.0 599.5,965.1 600.5,975.2 600.5,967.9 601.5,963.4 601.5,973.4 602.5,967.2 602.5,974.4 603.5,963.0 603.5,970.6 604.5,966.0 604.5,976.7 605.5,967.5 605.5,982.1 606.5,974.4 606.5,971.8 607.5,977.1 607.5,969.1 608.5,972.9 608.5,966.5 609.5,972.3 609.5,964.8 610.5,963.7 610.5,973.9 611.5,970.5 611.5,976.1 612.5,977.6 612.5,965.5 613.5,978.2 613.5,967.6 614.5,972.3 614.5,967.5 615.5,965.8 615.5,970.7 616.5,968.4 616.5,934.1 617.5,966.8 617.5,973.9 618.5,965.4 618.5,969.4 619.5,966.1 619.5,972.3 620.5,967.9 620.5,969.1 621.5,968.1 621.5,964.0 622.5,962.8 622.5,974.7 623.5,966.2 623.5,972.6 624.5,973.6 624.5,965.5 625.5,970.3 625.5,968.5 626.5,970.6 626.5,965.6 627.5,965.8 627.5,971.3 628.5,976.2 628.5,967.7 629.5,970.7 629.5,975.0 630.5,975.3 630.5,969.5 631.5,967.6 631.5,981.4 632.5,972.6 632.5,965.6 633.5,973.2 633.5,967.2 634.5,970.4 634.5,969.1 635.5,970.6 635.5,967.4 636.5,972.3 636.5,967.4 637.5,969.1 637.5,908.0 638.5,964.4 638.5,970.8 639.5,971.8 639.5,966.8 640.5,966.4 640.5,975.1 641.5,973.3 641.5,967.6 642.5,976.9 642.5,966.2 643.5,970.5 643.5,968.3 644.5,966.3 644.5,973.6 645.5,979.5 645.5,968.7 646.5,972.4 646.5,964.4 647.5,965.3 647.5,976.4 648.5,968.0 648.5,975.3 649.5,968.6 649.5,974.5 650.5,970.6 650.5,974.3 651.5,965.2 651.5,972.8 652.5,975.9 652.5,967.6 653.5,968.0 653.5,976.0 654.5,973.5 654.5,964.9 655.5,968.7 655.5,980.8 656.5,937.8 656.5,973.8 657.5,982.0 657.5,970.1 658.5,972.6 658.5,966.4 659.5,962.3 659.5,971.3 660.5,968.5 660.5,976.6 661.5,969.0 661.5,973.8 662.5,965.4 662.5,974.6 663.5,967.7 663.5,976.6 664.5,964.1 664.5,975.0 665.5,973.4 665.5,966.0 666.5,974.6 666.5,967.8 667.5,970.1 667.5,977.7 668.5,977.5 668.5,968.9 669.5,974.7 669.5,968.4 670.5,968.1 670.5,977.5 671.5,969.6 671.5,974.4 672.5,964.8 672.5,975.0 673.5,978.9 673.5,918.2 674.5,973.4 674.5,968.6 675.5,976.9 675.5,970.0 676.5,975.0 676.5,969.0 677.5,964.2 677.5,970.1 678.5,975.4 678.5,967.0 679.5,971.4 679.5,966.1 680.5,973.2 680.5,967.7 681.5,967.9 681.5,974.8 682.5,967.3 682.5,977.3 683.5,980.5 683.5,968.0 684.5,972.6 684.5,969.2 685.5,973.1 685.5,968.5 686.5,968.5 686.5,976.4 687.5,968.2 687.5,974.4 688.5,976.6 688.5,944.4 689.5,963.3 689.5,979.0 690.5,969.2 690.5,974.7 691.5,976.9 691.5,968.7 692.5,975.0 692.5,967.9 693.5,968.6 693.5,974.5 694.5,968.8 694.5,976.2 695.5,977.2 695.5,967.9 696.5,967.8 696.5,978.1 697.5,977.6 697.5,965.5 698.5,975.5 698.5,967.4 699.5,970.0 699.5,977.2 700.5,968.1 700.5,976.7 701.5,969.9 701.5,975.8 702.5,974.9 702.5,943.6 703.5,907.0 703.5,974.6 704.5,970.9 704.5,976.3 705.5,967.5 705.5,976.5 706.5,968.6 706.5,973.1 707.5,977.0 707.5,966.5 708.5,977.2 708.5,966.3 709.5,977.3 709.5,969.8 710.5,968.2 710.5,974.1 711.5,968.1 711.5,979.0 712.5,975.3 712.5,967.9 713.5,978.2 713.5,970.2 714.5,970.5 714.5,973.1 715.5,969.6 715.5,977.3 716.5,972.0 716.5,949.2 717.5,979.4 717.5,969.4 718.5,975.4 718.5,967.1 719.5,969.5 719.5,976.7 720.5,977.1 720.5,966.8 721.5,979.0 721.5,969.5 722.5,968.6 722.5,978.6 723.5,978.4 723.5,968.7 724.5,969.9 724.5,978.8 725.5,968.3 725.5,975.8 726.5,969.2 726.5,974.4 727.5,966.0 727.5,974.8 728.5,975.7 728.5,907.0 729.5,978.8 729.5,969.3 730.5,978.3 730.5,969.0 731.5,979.0 731.5,966.3 732.5,968.8 732.5,976.0 733.5,964.9 733.5,974.7 734.5,976.2 734.5,965.6 735.5,967.7 735.5,975.1 736.5,967.9 736.5,978.1 737.5,974.0 737.5,968.3 738.5,965.8 738.5,974.4 739.5,974.1 739.5,968.2 740.5,951.6 740.5,978.7 741.5,975.2 741.5,969.5 742.5,969.7 742.5,974.7 743.5,969.6 743.5,981.6 744.5,966.6 744.5,976.2 745.5,969.3 745.5,976.7 746.5,979.7 746.5,968.6 747.5,976.9 747.5,968.3 748.5,977.8 748.5,969.4 749.5,967.2 749.5,977.7 750.5,977.2 750.5,907.0 751.5,915.6 751.5,975.3 752.5,966.4 752.5,975.1 753.5,968.8 753.5,973.7 754.5,974.1 754.5,970.2 755.5,974.4 755.5,968.0 756.5,977.3 756.5,966.6 757.5,975.3 757.5,969.1 758.5,966.9 758.5,977.7 759.5,975.8 759.5,968.5 760.5,974.6 760.5,967.2 761.5,947.0 761.5,977.0 762.5,976.6 762.5,966.7 763.5,967.9 763.5,974.9 764.5,968.2 764.5,975.9 765.5,969.9 765.5,977.6 766.5,966.3 766.5,976.2 767.5,979.8 767.5,968.5 768.5,977.3 768.5,965.0 769.5,966.3 769.5,975.0 770.5,919.3 770.5,975.9 771.5,968.5 771.5,978.7 772.5,975.0 772.5,966.1 773.5,967.6 773.5,978.2 774.5,968.5 774.5,977.1 775.5,968.6 775.5,980.5 776.5,980.9 776.5,969.8 777.5,974.6 777.5,968.2 778.5,977.0 778.5,968.7 779.5,967.9 779.5,878.7 780.5,757.2 780.5,961.8 781.5,961.0 781.5,975.5 782.5,968.4 782.5,975.5 783.5,980.1 783.5,970.8 784.5,968.9 784.5,977.1 785.5,968.4 785.5,976.2 786.5,979.4 786.5,969.1 787.5,977.6 787.5,968.1 788.5,928.4 788.5,975.0 789.5,968.0 789.5,976.2 790.5,977.9 790.5,969.6 791.5,970.3 791.5,978.1 792.5,968.5 792.5,978.2 793.5,969.7 793.5,975.8 794.5,976.6 794.5,968.0 795.5,970.0 795.5,979.0 796.5,978.7 796.5,945.8 797.5,965.6 797.5,978.3 798.5,977.8 798.5,971.2 799.5,974.7 799.5,967.9 800.5,978.3 800.5,968.7 801.5,978.5 801.5,968.1 802.5,978.3 802.5,967.1 803.5,963.8 803.5,978.0 804.5,976.0 804.5,915.5 805.5,981.9 805.5,969.3 806.5,968.5 806.5,977.2 807.5,978.6 807.5,970.3 808.5,967.8 808.5,974.0 809.5,968.6 809.5,978.4 810.5,968.5 810.5,976.3 811.5,968.6 811.5,979.9 812.5,978.1 812.5,969.5 813.5,968.8 813.5,976.1 814.5,969.5 814.5,978.3 815.5,981.9 815.5,967.5 816.5,977.7 816.5,969.0 817.5,976.9 817.5,969.1 818.5,978.7 818.5,970.7 819.5,978.8 819.5,929.1 820.5,979.4 820.5,968.6 821.5,969.2 821.5,983.8 822.5,977.4 822.5,966.6 823.5,967.9 823.5,980.3 824.5,979.0 824.5,967.2 825.5,967.4 825.5,980.6 826.5,980.0 826.5,971.6 827.5,969.5 827.5,980.4 828.5,978.2 828.5,969.4 829.5,979.2 829.5,971.0 830.5,969.4 830.5,977.4 831.5,980.2 831.5,966.3 832.5,969.5 832.5,984.0 833.5,942.5 833.5,978.2 834.5,967.6 834.5,976.7 835.5,976.7 835.5,969.1 836.5,978.8 836.5,968.6 837.5,977.9 837.5,969.8 838.5,968.4 838.5,976.3 839.5,985.3 839.5,967.0 840.5,978.4 840.5,969.6 841.5,976.8 841.5,966.4 842.5,977.7 842.5,968.6 843.5,981.2 843.5,968.0 844.5,983.6 844.5,970.0 845.5,980.9 845.5,969.3 846.5,930.1 846.5,976.4 847.5,980.5 847.5,969.9 848.5,980.8 848.5,971.8 849.5,968.6 849.5,978.3 850.5,983.6 850.5,966.9 851.5,969.7 851.5,980.1 852.5,980.9 852.5,968.0 853.5,968.5 853.5,976.6 854.5,982.3 854.5,969.7 855.5,968.9 855.5,980.1 856.5,980.8 856.5,970.1 857.5,979.7 857.5,940.1 858.5,939.5 858.5,976.1 859.5,978.1 859.5,966.5 860.5,970.2 860.5,979.1 861.5,980.0 861.5,968.6 862.5,976.6 862.5,967.6 863.5,968.0 863.5,979.2 864.5,981.0 864.5,967.1 865.5,968.6 865.5,977.8 866.5,966.2 866.5,979.3 867.5,979.4 867.5,965.7 868.5,969.2 868.5,980.6 869.5,942.7 869.5,981.0 870.5,977.7 870.5,968.7 871.5,978.2 871.5,969.1 872.5,981.7 872.5,969.7 873.5,969.3 873.5,981.4 874.5,979.2 874.5,968.9 875.5,970.6 875.5,977.7 876.5,970.5 876.5,981.5 877.5,980.2 877.5,969.0 878.5,981.0 878.5,968.7 879.5,977.5 879.5,948.5 880.5,968.6 880.5,978.8 881.5,967.8 881.5,977.2 882.5,980.6 882.5,966.7 883.5,968.4 883.5,979.0 884.5,978.9 884.5,967.8 885.5,967.9 885.5,979.8 886.5,970.7 886.5,983.3 887.5,981.3 887.5,969.0 888.5,978.6 888.5,970.8 889.5,978.9 889.5,946.0 890.5,967.4 890.5,980.5 891.5,969.4 891.5,981.7 892.5,982.6 892.5,969.3 893.5,970.6 893.5,979.6 894.5,969.2 894.5,980.9 895.5,979.7 895.5,971.3 896.5,980.1 896.5,969.0 897.5,968.0 897.5,981.1 898.5,950.2 898.5,983.6 899.5,967.3 899.5,979.5 900.5,980.4 900.5,967.4 901.5,966.6 901.5,979.4 902.5,977.6 902.5,970.2 903.5,970.5 903.5,980.8 904.5,968.3 904.5,984.5 905.5,980.9 905.5,968.7 906.5,967.7 906.5,980.1 907.5,977.3 907.5,953.7 908.5,978.7 908.5,966.8 909.5,970.0 909.5,981.8 910.5,968.0 910.5,980.4 911.5,984.6 911.5,967.7 912.5,982.9 912.5,968.6 913.5,978.8 913.5,969.2 914.5,984.2 914.5,969.6 915.5,971.2 915.5,980.3 916.5,971.2 916.5,980.7 917.5,980.4 917.5,970.3 918.5,978.9 918.5,967.4 919.5,969.6 919.5,979.1 920.5,972.1 920.5,978.4 921.5,979.7 921.5,972.5 922.5,969.9 922.5,981.4 923.5,983.2 923.5,969.4 924.5,980.3 924.5,971.1 925.5,972.4 925.5,983.3 926.5,970.4 926.5,978.6 927.5,979.9 927.5,970.3 928.5,971.5 928.5,985.3 929.5,979.8 929.5,969.6 930.5,979.7 930.5,970.8 931.5,969.8 931.5,981.2 932.5,970.0 932.5,982.1 933.5,969.3 933.5,983.1 934.5,982.0 934.5,969.5 935.5,972.7 935.5,981.4 936.5,972.2 936.5,979.3 937.5,969.3 937.5,983.9 938.5,979.3 938.5,969.0 939.5,970.9 939.5,979.4 940.5,986.4 940.5,972.2 941.5,970.8 941.5,982.4 942.5,983.4 942.5,969.3 943.5,970.1 943.5,982.6 944.5,984.3 944.5,969.4 945.5,984.2 945.5,972.6 946.5,968.4 946.5,982.1 947.5,973.3 947.5,984.3 948.5,985.9 948.5,971.1 949.5,967.4 949.5,986.2 950.5,984.0 950.5,968.1 951.5,980.4 951.5,969.8 952.5,982.9 952.5,969.7 953.5,984.6 953.5,972.8 954.5,985.2 954.5,970.5 955.5,984.1 955.5,970.8 956.5,970.8 956.5,983.9 957.5,968.0 957.5,980.3 958.5,969.3 958.5,985.5 959.5,981.8 959.5,969.3 960.5,969.2 960.5,982.8 961.5,971.5 961.5,982.7 962.5,988.4 962.5,971.5 963.5,985.8 963.5,971.2 964.5,983.6 964.5,974.0 965.5,970.7 965.5,984.8 966.5,985.2 966.5,972.1 967.5,972.0 967.5,985.4 968.5,972.3 968.5,981.7 969.5,971.4 969.5,981.3 970.5,984.3 970.5,970.7 971.5,970.1 971.5,984.8 972.5,970.3 972.5,983.1 973.5,985.0 973.5,970.4 974.5,985.0 974.5,973.4 975.5,986.3 975.5,955.0 976.5,986.1 976.5,972.2 977.5,971.3 977.5,982.6 978.5,986.1 978.5,972.5 979.5,984.7 979.5,972.8 980.5,983.8 980.5,972.8 981.5,972.1 981.5,984.4 982.5,971.8 982.5,982.9 983.5,983.8 983.5,972.2 984.5,987.2 984.5,973.4 985.5,968.2 985.5,983.7 986.5,989.4 986.5,971.9 987.5,973.1 987.5,984.0 988.5,983.4 988.5,971.4 989.5,973.2 989.5,988.4 990.5,985.9 990.5,972.5 991.5,971.3 991.5,983.8 992.5,985.9 992.5,972.4 993.5,984.6 993.5,972.9 994.5,984.7 994.5,970.9 995.5,969.5 995.5,987.4 996.5,973.4 996.5,983.5 997.5,985.3 997.5,973.1 998.5,972.4 998.5,985.7 999.5,987.1 999.5,971.1 1000.5,982.3 1000.5,972.6 1001.5,973.1 1001.5,984.3 1002.5,988.0 1002.5,972.7 1003.5,984.7 1003.5,974.9 1004.5,985.1 1004.5,974.7 1005.5,986.9 1005.5,974.6 1006.5,973.9 1006.5,986.2 1007.5,985.7 1007.5,971.6 1008.5,973.5 1008.5,985.7 1009.5,987.6 1009.5,973.4 1010.5,985.4 1010.5,974.3 1011.5,987.5 1011.5,973.9 1012.5,984.2 1012.5,972.6 1013.5,972.7 1013.5,990.3 1014.5,971.4 1014.5,983.1 1015.5,972.1 1015.5,984.7 1016.5,972.4 1016.5,986.7 1017.5,974.2 1017.5,987.8 1018.5,975.2 1018.5,985.1 1019.5,988.3 1019.5,973.8 1020.5,984.9 1020.5,972.4 1021.5,975.8 1021.5,988.9 1022.5,985.0 1022.5,973.9 1023.5,985.9 1023.5,974.3 1024.5,973.3 1024.5,987.3 1025.5,974.2 1025.5,983.9 1026.5,970.2 1026.5,983.1 1027.5,973.4 1027.5,992.5 1028.5,987.6 1028.5,972.5 1029.5,986.9 1029.5,973.5 1030.5,973.7 1030.5,990.0 1031.5,985.2 1031.5,973.6 1032.5,973.8 1032.5,990.1 1033.5,988.2 1033.5,971.4 1034.5,974.8 1034.5,988.1 1035.5,988.9 1035.5,973.5 1036.5,972.6 1036.5,986.3 1037.5,971.7 1037.5,992.1 1038.5,987.3 1038.5,973.7 1039.5,988.5 1039.5,971.9 1040.5,987.2 1040.5,976.1 1041.5,973.4 1041.5,984.1 1042.5,975.0 1042.5,989.7 1043.5,974.1 1043.5,988.6 1044.5,986.0 1044.5,969.3 1045.5,989.7 1045.5,974.5 1046.5,976.2 1046.5,988.5 1047.5,973.4 1047.5,987.2 1048.5,973.4 1048.5,986.9 1049.5,986.7 1049.5,973.3 1050.5,975.3 1050.5,990.8 1051.5,975.2 1051.5,987.8 1052.5,974.5 1052.5,992.0 1053.5,986.4 1053.5,975.3 1054.5,975.1 1054.5,989.0 1055.5,973.8 1055.5,989.1 1056.5,987.5 1056.5,974.1 1057.5,972.3 1057.5,990.9 1058.5,974.0 1058.5,991.4 1059.5,988.2 1059.5,973.0 1060.5,987.7 1060.5,975.1 1061.5,976.1 1061.5,993.2 1062.5,989.5 1062.5,975.2 1063.5,986.7 1063.5,975.1 1064.5,975.5 1064.5,987.2 1065.5,987.4 1065.5,973.7 1066.5,988.8 1066.5,974.0 1067.5,975.3 1067.5,992.9 1068.5,975.9 1068.5,987.2 1069.5,974.3 1069.5,990.1 1070.5,987.6 1070.5,972.8 1071.5,976.3 1071.5,988.2 1072.5,974.5 1072.5,993.5 1073.5,975.2 1073.5,991.5 1074.5,990.8 1074.5,976.0 1075.5,973.9 1075.5,989.3 1076.5,988.8 1076.5,975.5 1077.5,972.7 1077.5,987.7 1078.5,975.5 1078.5,992.4 1079.5,973.7 1079.5,988.7 1080.5,986.9 1080.5,973.9 1081.5,994.8 1081.5,974.5 1082.5,976.2 1082.5,990.2 1083.5,993.8 1083.5,975.6 1084.5,975.0 1084.5,989.7 1085.5,987.6 1085.5,977.8 1086.5,988.7 1086.5,976.0 1087.5,974.1 1087.5,993.9 1088.5,973.7 1088.5,993.6 1089.5,974.3 1089.5,990.0 1090.5,988.9 1090.5,975.1 1091.5,974.9 1091.5,991.1 1092.5,988.4 1092.5,973.9 1093.5,974.2 1093.5,991.8 1094.5,990.7 1094.5,976.5 1095.5,990.0 1095.5,977.1 1096.5,976.7 1096.5,995.1 1097.5,991.0 1097.5,975.2 1098.5,990.5 1098.5,976.0 1099.5,991.6 1099.5,976.6 1100.5,977.6 1100.5,991.4 1101.5,993.2 1101.5,975.6 1102.5,994.2 1102.5,976.5 1103.5,977.3 1103.5,991.4 1104.5,974.8 1104.5,991.7 1105.5,977.3 1105.5,993.5 1106.5,989.5 1106.5,977.0 1107.5,989.9 1107.5,974.0 1108.5,975.2 1108.5,991.2 1109.5,994.0 1109.5,976.3 1110.5,989.9 1110.5,976.1 1111.5,991.7 1111.5,976.8 1112.5,991.9 1112.5,975.1 1113.5,992.8 1113.5,974.2 1114.5,992.6 1114.5,976.9 1115.5,977.7 1115.5,996.9 1116.5,992.2 1116.5,976.1 1117.5,977.0 1117.5,990.7 1118.5,993.9 1118.5,974.8 1119.5,992.9 1119.5,976.8 1120.5,993.7 1120.5,975.1 1121.5,977.2 1121.5,996.2 1122.5,992.7 1122.5,975.3 1123.5,992.5 1123.5,977.4 1124.5,992.0 1124.5,972.0 1125.5,996.2 1125.5,977.8 1126.5,978.2 1126.5,990.9 1127.5,977.9 1127.5,995.2 1128.5,995.9 1128.5,978.9 1129.5,992.8 1129.5,977.3 1130.5,991.8 1130.5,976.8 1131.5,994.6 1131.5,976.9 1132.5,999.7 1132.5,978.5 1133.5,993.2 1133.5,977.5 1134.5,993.2 1134.5,977.0 1135.5,976.6 1135.5,995.6 1136.5,975.0 1136.5,990.6 1137.5,994.2 1137.5,975.7 1138.5,978.7 1138.5,991.4 1139.5,991.1 1139.5,978.0 1140.5,979.8 1140.5,993.0 1141.5,994.7 1141.5,976.9 1142.5,976.9 1142.5,998.2 1143.5,994.3 1143.5,979.5 1144.5,993.0 1144.5,975.7 1145.5,977.3 1145.5,993.3 1146.5,977.1 1146.5,994.6 1147.5,979.2 1147.5,995.5 1148.5,995.3 1148.5,978.6 1149.5,978.6 1149.5,994.3 1150.5,977.2 1150.5,995.3 1151.5,996.6 1151.5,977.3 1152.5,978.9 1152.5,995.9 1153.5,996.5 1153.5,974.7 1154.5,977.4 1154.5,993.9 1155.5,978.1 1155.5,992.5 1156.5,992.3 1156.5,978.4 1157.5,978.3 1157.5,996.3 1158.5,975.9 1158.5,994.5 1159.5,996.2 1159.5,980.2 1160.5,977.0 1160.5,995.3 1161.5,995.3 1161.5,977.2 1162.5,995.2 1162.5,978.0 1163.5,978.4 1163.5,998.5 1164.5,992.5 1164.5,979.4 1165.5,979.2 1165.5,995.3 1166.5,978.7 1166.5,994.3 1167.5,992.9 1167.5,979.2 1168.5,973.4 1168.5,993.3 1169.5,993.9 1169.5,977.7 1170.5,997.4 1170.5,978.4 1171.5,998.9 1171.5,978.5 1172.5,998.9 1172.5,975.5 1173.5,996.9 1173.5,975.0 1174.5,980.8 1174.5,996.0 1175.5,995.8 1175.5,976.7 1176.5,978.3 1176.5,997.9 1177.5,996.9 1177.5,979.8 1178.5,996.1 1178.5,980.3 1179.5,977.7 1179.5,995.5 1180.5,995.2 1180.5,979.2 1181.5,978.7 1181.5,997.6 1182.5,979.5 1182.5,998.7 1183.5,977.4 1183.5,993.8 1184.5,979.5 1184.5,997.9 1185.5,999.3 1185.5,979.6 1186.5,994.5 1186.5,976.9 1187.5,978.5 1187.5,1000.7 1188.5,981.0 1188.5,1000.7 1189.5,974.7 1189.5,995.1 1190.5,999.5 1190.5,979.6 1191.5,995.6 1191.5,980.1 1192.5,998.2 1192.5,980.9 1193.5,978.4 1193.5,996.1 1194.5,996.1 1194.5,981.2 1195.5,979.3 1195.5,997.6 1196.5,980.0 1196.5,1001.1 1197.5,998.3 1197.5,978.5 1198.5,998.4 1198.5,978.8 1199.5,979.6 1199.5,997.2 1200.5,1000.1 1200.5,980.9 1201.5,999.3 1201.5,981.0 1202.5,996.5 1202.5,979.4 1203.5,980.5 1203.5,999.0 1204.5,995.0 1204.5,979.8 1205.5,997.8 1205.5,975.0 1206.5,980.6 1206.5,1001.4 1207.5,978.3 1207.5,996.5 1208.5,980.0 1208.5,998.0 1209.5,980.3 1209.5,997.4 1210.5,978.8 1210.5,997.3 1211.5,978.0 1211.5,1000.6 1212.5,997.6 1212.5,975.7 1213.5,1000.4 1213.5,980.3 1214.5,979.3 1214.5,997.2 1215.5,999.9 1215.5,981.3 1216.5,998.4 1216.5,978.6 1217.5,981.6 1217.5,998.1 1218.5,999.5 1218.5,982.0 1219.5,978.8 1219.5,1000.2 1220.5,981.0 1220.5,1001.4 1221.5,977.5 1221.5,995.9 1222.5,980.3 1222.5,998.2 1223.5,979.5 1223.5,1000.2 1224.5,977.3 1224.5,995.8 1225.5,999.8 1225.5,979.4 1226.5,978.9 1226.5,998.4 1227.5,995.8 1227.5,976.7 1228.5,980.5 1228.5,1001.4 1229.5,1000.0 1229.5,978.9 1230.5,999.5 1230.5,981.0 1231.5,996.9 1231.5,979.0 1232.5,998.2 1232.5,976.8 1233.5,979.7 1233.5,1002.0 1234.5,996.3 1234.5,981.1 1235.5,1000.2 1235.5,980.4 1236.5,979.0 1236.5,998.4 1237.5,980.3 1237.5,1000.6 1238.5,1000.5 1238.5,980.8 1239.5,978.3 1239.5,1003.4 1240.5,998.4 1240.5,979.0 1241.5,980.1 1241.5,1000.5 1242.5,996.9 1242.5,980.7 1243.5,978.0 1243.5,1002.7 1244.5,978.2 1244.5,1000.8 1245.5,982.1 1245.5,998.5 1246.5,981.4 1246.5,998.7 1247.5,981.9 1247.5,999.2 1248.5,981.8 1248.5,1001.1 1249.5,978.7 1249.5,998.3 1250.5,979.4 1250.5,999.6 1251.5,999.4 1251.5,983.1 1252.5,980.1 1252.5,1000.2 1253.5,980.9 1253.5,1002.4 1254.5,1001.6 1254.5,981.7 1255.5,999.6 1255.5,981.0 1256.5,1003.9 1256.5,981.0 1257.5,982.5 1257.5,998.7 1258.5,998.9 1258.5,981.6 1259.5,998.4 1259.5,979.5 1260.5,980.4 1260.5,999.4 1261.5,981.2 1261.5,998.5 1262.5,997.4 1262.5,981.7 1263.5,982.7 1263.5,999.5 1264.5,1001.6 1264.5,979.3 1265.5,1001.5 1265.5,980.0 1266.5,999.8 1266.5,982.5 1267.5,982.4 1267.5,1000.2 1268.5,999.3 1268.5,981.3 1269.5,982.0 1269.5,999.3 1270.5,1002.0 1270.5,982.6 1271.5,980.4 1271.5,1000.5 1272.5,999.4 1272.5,980.5 1273.5,1002.5 1273.5,981.1 1274.5,983.1 1274.5,1000.1 1275.5,997.4 1275.5,982.1 1276.5,998.6 1276.5,977.1 1277.5,981.2 1277.5,1001.0 1278.5,983.0 1278.5,999.3 1279.5,982.0 1279.5,1000.3 1280.5,999.8 1280.5,983.5 1281.5,1000.2 1281.5,981.7 1282.5,997.3 1282.5,983.4 1283.5,982.0 1283.5,999.4 1284.5,999.2 1284.5,982.0 1285.5,998.3 1285.5,981.3 1286.5,979.9 1286.5,998.8 1287.5,1002.0 1287.5,981.4 1288.5,1004.4 1288.5,982.5 1289.5,981.6 1289.5,999.0 1290.5,980.5 1290.5,1001.2 1291.5,980.3 1291.5,999.5 1292.5,984.6 1292.5,1000.8 1293.5,1000.2 1293.5,982.7 1294.5,982.1 1294.5,998.3 1295.5,982.1 1295.5,999.6 1296.5,980.7 1296.5,1001.9 1297.5,1000.0 1297.5,981.1 1298.5,1001.8 1298.5,979.0 1299.5,1007.6 1299.5,982.4 1300.5,982.4 1300.5,997.8 1301.5,982.2 1301.5,1001.5 1302.5,1001.9 1302.5,981.7 1303.5,1001.2 1303.5,983.5 1304.5,982.3 1304.5,1001.3 1305.5,982.7 1305.5,1000.6 1306.5,1002.5 1306.5,982.1 1307.5,1003.4 1307.5,983.8 1308.5,999.9 1308.5,980.2 1309.5,982.3 1309.5,997.7 1310.5,998.8 1310.5,983.1 1311.5,1001.1 1311.5,982.5 1312.5,981.2 1312.5,999.9 1313.5,999.3 1313.5,935.0 1314.5,1002.5 1314.5,982.7 1315.5,981.0 1315.5,1004.5 1316.5,998.6 1316.5,982.3 1317.5,980.4 1317.5,1000.5 1318.5,981.7 1318.5,1000.9 1319.5,999.7 1319.5,982.5 1320.5,981.9 1320.5,1004.0 1321.5,999.6 1321.5,983.3 1322.5,983.4 1322.5,1000.5 1323.5,1000.8 1323.5,982.1 1324.5,982.7 1324.5,1000.0 1325.5,981.8 1325.5,1000.6 1326.5,1000.0 1326.5,983.0 1327.5,1000.5 1327.5,982.6 1328.5,1000.2 1328.5,983.4 1329.5,981.5 1329.5,998.2 1330.5,983.8 1330.5,1001.9 1331.5,1000.3 1331.5,981.4 1332.5,999.4 1332.5,981.5 1333.5,983.0 1333.5,1000.0 1334.5,1000.5 1334.5,983.7 1335.5,983.6 1335.5,1002.4 1336.5,1001.0 1336.5,981.6 1337.5,980.4 1337.5,1000.4 1338.5,1001.0 1338.5,982.2 1339.5,1001.5 1339.5,983.6 1340.5,1001.0 1340.5,982.3 1341.5,984.4 1341.5,1000.1 1342.5,983.8 1342.5,1001.5 1343.5,1002.4 1343.5,985.6 1344.5,986.6 1344.5,1004.5 1345.5,1008.7 1345.5,990.0 1346.5,993.8 1346.5,1007.7" stroke="#00ffff"/><path d="M80.5,946.5 84.5,946.5 87.5,950.7 90.5,950.4 93.5,949.8 96.5,950.9 99.5,945.8 102.5,945.7 105.5,947.5 108.5,946.9 111.5,948.2 113.5,950.2 116.5,951.2 119.5,950.6 121.5,949.1 124.5,947.9 127.5,947.1 129.5,945.9 132.5,948.3 134.5,952.3 136.5,948.0 139.5,946.3 141.5,949.3 144.5,949.8 146.5,948.9 148.5,948.6 150.5,948.1 153.5,948.2 155.5,948.4 157.5,947.0 159.5,945.6 161.5,945.1 163.5,944.5 165.5,945.1 167.5,945.9 169.5,946.9 171.5,948.7 173.5,947.7 175.5,945.7 177.5,945.6 179.5,945.7 181.5,945.6 183.5,944.9 185.5,944.7 186.5,945.7 188.5,946.6 190.5,948.8 192.5,953.0 194.5,953.4 195.5,951.7 197.5,950.9 199.5,950.5 200.5,949.9 202.5,949.3 204.5,947.1 205.5,946.2 207.5,947.4 209.5,949.2 210.5,949.3 212.5,947.9 213.5,946.9 215.5,947.4 217.5,948.4 218.5,948.9 220.5,950.7 221.5,953.7 223.5,954.4 224.5,952.6 226.5,950.6 227.5,950.2 228.5,949.7 230.5,949.2 231.5,949.3 233.5,949.6 234.5,949.8 235.5,950.4 237.5,953.4 238.5,956.4 240.5,956.5 241.5,953.7 242.5,950.9 244.5,950.6 245.5,951.7 246.5,953.5 247.5,954.2 249.5,955.8 250.5,958.4 251.5,959.9 253.5,959.1 254.5,956.6 255.5,954.6 256.5,954.6 258.5,956.4 259.5,958.7 260.5,959.7 261.5,959.2 262.5,958.1 264.5,957.2 265.5,956.6 266.5,953.3 267.5,949.9 268.5,948.4 269.5,948.0 270.5,946.9 272.5,945.9 273.5,945.6 274.5,946.5 275.5,948.1 276.5,949.3 277.5,949.6 278.5,950.1 279.5,950.8 280.5,951.3 281.5,951.2 283.5,950.0 284.5,948.5 285.5,947.4 286.5,947.5 287.5,948.8 288.5,950.4 289.5,951.6 290.5,951.9 291.5,953.0 292.5,954.9 293.5,956.4 294.5,956.8 295.5,958.1 296.5,960.1 297.5,962.0 298.5,962.6 299.5,960.7 300.5,956.4 301.5,952.2 302.5,950.5 303.5,951.0 304.5,953.6 304.5,957.9 305.5,961.2 306.5,962.1 307.5,962.5 308.5,963.3 309.5,964.1 310.5,964.6 311.5,964.2 312.5,962.1 313.5,959.2 314.5,956.8 315.5,955.9 315.5,955.6 316.5,954.9 317.5,953.9 318.5,953.3 319.5,953.1 320.5,953.7 321.5,954.7 321.5,955.9 322.5,956.7 323.5,956.9 324.5,955.7 325.5,953.6 326.5,951.8 326.5,950.6 327.5,950.4 328.5,950.9 329.5,951.8 330.5,952.8 331.5,953.6 331.5,954.0 332.5,953.8 333.5,953.6 334.5,953.2 335.5,953.0 335.5,953.0 336.5,952.9 337.5,952.8 338.5,952.6 339.5,952.4 339.5,952.3 340.5,952.4 341.5,952.9 342.5,953.7 342.5,954.9 343.5,955.9 344.5,956.2 345.5,956.0 345.5,955.4 346.5,954.5 347.5,953.7 348.5,953.3 348.5,953.1 349.5,952.4 350.5,951.0 350.5,949.3 351.5,947.8 352.5,946.9 353.5,947.0 353.5,948.4 354.5,950.7 355.5,953.3 355.5,956.1 356.5,957.8 357.5,957.9 358.5,957.3 358.5,956.2 359.5,955.0 360.5,954.0 360.5,953.6 361.5,953.5 362.5,953.4 362.5,953.2 363.5,952.9 364.5,952.7 364.5,952.5 365.5,952.5 366.5,952.8 366.5,953.5 367.5,954.4 368.5,955.5 368.5,956.2 369.5,956.6 370.5,956.5 370.5,956.2 371.5,955.7 372.5,955.2 372.5,954.8 373.5,954.6 374.5,954.6 374.5,955.3 375.5,956.7 375.5,958.3 376.5,959.9 377.5,961.1 377.5,961.7 378.5,961.5 379.5,960.9 379.5,959.8 380.5,958.6 380.5,957.5 381.5,956.7 382.5,956.4 382.5,956.3 383.5,956.0 383.5,955.6 384.5,955.2 385.5,954.8 385.5,954.5 386.5,954.4 386.5,954.3 387.5,953.8 388.5,953.2 388.5,952.5 389.5,951.9 389.5,951.4 390.5,951.2 391.5,951.2 391.5,951.3 392.5,951.4 392.5,951.5 393.5,951.6 393.5,951.7 394.5,951.8 395.5,951.8 395.5,952.2 396.5,953.0 396.5,953.9 397.5,955.0 397.5,956.2 398.5,957.0 398.5,957.3 399.5,957.4 400.5,957.6 400.5,958.0 401.5,958.5 401.5,958.9 402.5,959.3 402.5,959.5 403.5,959.6 403.5,958.8 404.5,957.2 404.5,955.0 405.5,953.1 406.5,951.5 406.5,950.2 407.5,949.5 407.5,949.4 408.5,949.6 408.5,950.0 409.5,950.5 409.5,951.0 410.5,951.6 410.5,952.0 411.5,952.2 411.5,952.3 412.5,952.9 412.5,953.9 413.5,955.6 413.5,957.8 414.5,960.0 414.5,961.7 415.5,962.8 415.5,963.2 416.5,962.9 416.5,962.2 417.5,961.2 417.5,960.0 418.5,958.8 418.5,957.8 419.5,957.0 419.5,956.7 420.5,956.7 420.5,956.9 421.5,957.2 421.5,957.6 422.5,958.0 422.5,958.4 423.5,958.8 423.5,959.0 424.5,959.1 424.5,959.0 425.5,958.9 425.5,958.8 426.5,958.6 426.5,958.4 427.5,958.2 427.5,958.0 428.5,957.9 428.5,958.1 429.5,958.6 429.5,959.2 430.5,960.0 430.5,960.8 431.5,961.5 431.5,962.1 432.5,962.5 432.5,962.6 433.5,962.4 433.5,961.9 434.5,961.2 434.5,959.5 435.5,958.6 435.5,957.9 436.5,957.5 436.5,957.3 437.5,957.3 437.5,957.3 438.5,957.4 438.5,957.5 439.5,957.6 439.5,957.6 440.5,957.7 440.5,957.7 441.5,954.9 441.5,943.6 442.5,942.0 442.5,957.4 443.5,958.0 443.5,957.5 444.5,957.0 444.5,956.5 445.5,956.5 445.5,956.1 446.5,956.5 446.5,956.4 447.5,955.3 447.5,954.0 448.5,953.4 448.5,953.0 449.5,952.3 449.5,952.6 450.5,952.6 450.5,953.8 451.5,954.4 451.5,954.9 452.5,955.3 452.5,954.8 453.5,954.0 453.5,955.2 454.5,955.0 454.5,955.2 455.5,956.2 455.5,959.4 456.5,961.7 456.5,958.6 457.5,958.9 457.5,959.2 458.5,961.5 458.5,960.8 459.5,959.0 459.5,961.4 460.5,961.6 460.5,960.8 461.5,961.9 461.5,962.6 462.5,961.0 462.5,964.1 463.5,962.6 463.5,961.7 464.5,959.8 464.5,957.3 465.5,957.3 465.5,958.2 466.5,956.7 466.5,956.2 467.5,955.8 467.5,956.4 468.5,955.3 468.5,954.5 469.5,953.7 469.5,952.6 470.5,952.9 470.5,955.6 471.5,952.2 471.5,953.6 472.5,953.7 472.5,952.6 473.5,952.3 473.5,951.8 474.5,952.4 474.5,955.9 475.5,951.2 475.5,954.2 476.5,958.4 476.5,956.0 477.5,955.0 477.5,957.7 478.5,958.5 478.5,956.1 479.5,957.5 479.5,960.2 480.5,955.0 480.5,955.4 481.5,955.4 481.5,951.3 482.5,952.3 482.5,953.6 483.5,952.7 483.5,952.8 484.5,955.9 484.5,956.8 485.5,956.2 485.5,953.5 486.5,958.1 486.5,954.6 487.5,953.4 487.5,954.8 488.5,956.1 488.5,959.3 489.5,955.0 489.5,959.2 490.5,959.8 490.5,955.2 491.5,955.8 491.5,958.1 492.5,957.8 492.5,959.9 493.5,954.3 493.5,956.0 494.5,958.1 494.5,954.9 495.5,953.6 495.5,955.9 496.5,956.9 496.5,956.1 497.5,956.1 497.5,954.5 498.5,955.0 498.5,958.4 499.5,953.6 499.5,961.4 500.5,957.3 500.5,956.3 501.5,960.9 501.5,955.2 502.5,960.0 502.5,958.7 503.5,961.7 503.5,951.9 504.5,953.4 504.5,960.9 505.5,960.4 505.5,958.2 506.5,956.3 506.5,957.1 507.5,955.7 507.5,958.3 508.5,960.0 508.5,958.4 509.5,958.1 509.5,964.4 510.5,959.1 510.5,954.0 511.5,955.1 511.5,959.8 512.5,958.5 512.5,956.2 513.5,955.4 513.5,954.6 514.5,954.4 514.5,958.5 515.5,952.7 515.5,958.5 516.5,957.0 516.5,951.4 517.5,955.2 517.5,953.2 518.5,952.4 518.5,957.7 519.5,957.1 519.5,954.2 520.5,957.4 520.5,956.0 521.5,954.2 521.5,958.7 522.5,957.9 522.5,953.4 523.5,959.7 523.5,954.8 524.5,958.9 524.5,954.7 525.5,954.3 525.5,959.9 526.5,958.5 526.5,955.3 527.5,954.9 527.5,954.1 528.5,957.0 528.5,959.1 529.5,953.6 529.5,959.2 530.5,953.6 530.5,962.6 531.5,958.7 531.5,953.8 532.5,953.6 532.5,955.2 533.5,957.8 533.5,959.6 534.5,952.5 534.5,958.8 535.5,956.7 535.5,960.1 536.5,960.1 536.5,954.6 537.5,957.5 537.5,955.2 538.5,955.0 538.5,956.2 539.5,962.4 539.5,955.4 540.5,954.6 540.5,959.2 541.5,961.1 541.5,955.0 542.5,953.2 542.5,954.0 543.5,954.6 543.5,956.8 544.5,957.6 544.5,953.1 545.5,954.5 545.5,952.0 546.5,951.6 546.5,956.8 547.5,949.1 547.5,955.5 548.5,954.5 548.5,950.9 549.5,951.7 549.5,957.5 550.5,953.2 550.5,957.9 551.5,953.7 551.5,957.5 552.5,956.3 552.5,958.8 553.5,956.4 553.5,960.2 554.5,958.1 554.5,954.7 555.5,958.2 555.5,953.3 556.5,956.2 556.5,951.9 557.5,951.5 557.5,952.7 558.5,951.5 558.5,956.0 559.5,959.6 559.5,954.3 560.5,952.3 560.5,957.7 561.5,952.0 561.5,959.9 562.5,952.6 562.5,964.4 563.5,957.8 563.5,953.3 564.5,951.9 564.5,959.3 565.5,956.8 565.5,954.3 566.5,954.5 566.5,956.9 567.5,959.5 567.5,952.1 568.5,954.0 568.5,948.8 569.5,956.0 569.5,954.7 570.5,954.2 570.5,961.0 571.5,953.6 571.5,959.8 572.5,952.9 572.5,959.0 573.5,957.2 573.5,953.3 574.5,953.8 574.5,956.2 575.5,954.6 575.5,964.6 576.5,961.2 576.5,955.1 577.5,961.1 577.5,954.2 578.5,954.0 578.5,962.8 579.5,962.3 579.5,953.0 580.5,951.5 580.5,958.1 581.5,955.5 581.5,953.3 582.5,955.5 582.5,960.3 583.5,959.3 583.5,956.8 584.5,958.6 584.5,954.4 585.5,961.3 585.5,956.5 586.5,951.6 586.5,957.7 587.5,951.2 587.5,959.7 588.5,951.3 588.5,960.5 589.5,956.9 589.5,953.8 590.5,950.6 590.5,961.5 591.5,960.0 591.5,953.4 592.5,954.4 592.5,957.8 593.5,954.3 593.5,958.9 594.5,964.3 594.5,959.2 595.5,962.2 595.5,955.6 596.5,959.0 596.5,954.3 597.5,952.5 597.5,958.7 598.5,953.0 598.5,962.6 599.5,953.5 599.5,957.7 600.5,952.4 600.5,960.8 601.5,957.8 601.5,951.9 602.5,954.4 602.5,960.0 603.5,956.0 603.5,963.2 604.5,961.2 604.5,953.4 605.5,952.9 605.5,957.1 606.5,953.9 606.5,949.9 607.5,950.5 607.5,957.5 608.5,954.4 608.5,949.3 609.5,949.1 609.5,956.1 610.5,954.9 610.5,952.3 611.5,956.0 611.5,952.6 612.5,956.2 612.5,951.7 613.5,951.0 613.5,957.3 614.5,956.5 614.5,950.5 615.5,952.1 615.5,959.7 616.5,953.5 616.5,961.6 617.5,953.2 617.5,965.4 618.5,962.2 618.5,953.7 619.5,949.2 619.5,953.9 620.5,954.3 620.5,959.2 621.5,956.1 621.5,959.3 622.5,960.8 622.5,952.9 623.5,949.3 623.5,962.7 624.5,954.7 624.5,951.4 625.5,953.9 625.5,959.3 626.5,960.2 626.5,953.2 627.5,953.3 627.5,960.2 628.5,958.8 628.5,950.5 629.5,952.2 629.5,956.0 630.5,950.6 630.5,956.3 631.5,955.1 631.5,951.6 632.5,951.1 632.5,959.5 633.5,957.5 633.5,950.9 634.5,961.3 634.5,952.3 635.5,959.0 635.5,949.2 636.5,951.6 636.5,959.3 637.5,950.6 637.5,956.7 638.5,951.4 638.5,957.1 639.5,958.7 639.5,951.6 640.5,957.4 640.5,951.0 641.5,955.0 641.5,950.1 642.5,951.9 642.5,953.6 643.5,958.2 643.5,953.8 644.5,951.6 644.5,960.1 645.5,961.2 645.5,952.5 646.5,952.7 646.5,947.6 647.5,957.4 647.5,949.3 648.5,952.1 648.5,958.4 649.5,956.7 649.5,949.9 650.5,954.5 650.5,950.4 651.5,948.9 651.5,959.8 652.5,949.6 652.5,957.0 653.5,957.6 653.5,951.2 654.5,960.2 654.5,951.1 655.5,957.4 655.5,950.4 656.5,953.4 656.5,955.8 657.5,954.4 657.5,950.4 658.5,958.2 658.5,951.1 659.5,954.1 659.5,951.4 660.5,957.6 660.5,946.6 661.5,949.3 661.5,957.9 662.5,954.8 662.5,950.6 663.5,951.8 663.5,961.7 664.5,958.1 664.5,949.6 665.5,951.4 665.5,960.3 666.5,952.9 666.5,946.8 667.5,953.7 667.5,950.9 668.5,950.7 668.5,952.7 669.5,947.6 669.5,955.8 670.5,954.9 670.5,948.7 671.5,957.8 671.5,949.8 672.5,951.9 672.5,947.7 673.5,955.6 673.5,947.8 674.5,946.3 674.5,953.8 675.5,956.4 675.5,946.6 676.5,954.0 676.5,947.3 677.5,949.6 677.5,956.3 678.5,955.8 678.5,946.2 679.5,948.9 679.5,957.1 680.5,955.6 680.5,946.1 681.5,954.1 681.5,946.4 682.5,945.4 682.5,953.6 683.5,957.5 683.5,948.9 684.5,947.5 684.5,952.1 685.5,954.0 685.5,946.9 686.5,954.5 686.5,945.5 687.5,953.2 687.5,946.4 688.5,945.6 688.5,954.4 689.5,954.4 689.5,943.2 690.5,954.0 690.5,948.9 691.5,944.8 691.5,949.4 692.5,954.2 692.5,947.4 693.5,952.9 693.5,944.0 694.5,947.2 694.5,950.5 695.5,944.0 695.5,953.9 696.5,943.5 696.5,954.6 697.5,950.3 697.5,943.7 698.5,952.2 698.5,947.5 699.5,953.9 699.5,945.4 700.5,943.8 700.5,955.6 701.5,944.4 701.5,952.1 702.5,954.4 702.5,945.0 703.5,944.6 703.5,953.6 704.5,955.4 704.5,945.9 705.5,945.2 705.5,952.8 706.5,950.9 706.5,944.0 707.5,950.9 707.5,944.5 708.5,948.4 708.5,942.6 709.5,943.9 709.5,953.1 710.5,940.3 710.5,953.1 711.5,949.9 711.5,941.2 712.5,942.4 712.5,948.9 713.5,949.1 713.5,942.2 714.5,938.8 714.5,947.0 715.5,948.8 715.5,942.7 716.5,941.2 716.5,950.1 717.5,945.6 717.5,941.3 718.5,947.7 718.5,941.8 719.5,941.0 719.5,946.1 720.5,949.0 720.5,942.5 721.5,948.7 721.5,940.6 722.5,946.6 722.5,940.3 723.5,942.6 723.5,939.3 724.5,947.9 724.5,938.3 725.5,942.5 725.5,938.5 726.5,935.7 726.5,947.2 727.5,945.3 727.5,939.9 728.5,943.4 728.5,936.7 729.5,938.4 729.5,943.3 730.5,936.8 730.5,943.1 731.5,937.4 731.5,941.8 732.5,942.6 732.5,937.0 733.5,941.6 733.5,936.0 734.5,935.8 734.5,940.8 735.5,940.8 735.5,935.4 736.5,934.3 736.5,940.2 737.5,938.8 737.5,934.0 738.5,937.9 738.5,932.3 739.5,941.6 739.5,931.4 740.5,931.7 740.5,936.0 741.5,938.1 741.5,930.6 742.5,936.4 742.5,931.7 743.5,935.1 743.5,931.2 744.5,930.4 744.5,938.3 745.5,938.5 745.5,930.1 746.5,933.3 746.5,930.0 747.5,933.7 747.5,927.9 748.5,928.5 748.5,935.6 749.5,935.0 749.5,925.3 750.5,935.4 750.5,927.8 751.5,930.2 751.5,923.1 752.5,923.3 752.5,930.7 753.5,930.9 753.5,922.9 754.5,928.8 754.5,919.2 755.5,928.1 755.5,917.8 756.5,920.8 756.5,931.5 757.5,923.1 757.5,919.1 758.5,921.9 758.5,917.6 759.5,922.3 759.5,914.9 760.5,925.4 760.5,915.9 761.5,915.3 761.5,921.8 762.5,919.5 762.5,912.5 763.5,910.7 763.5,919.6 764.5,918.1 764.5,911.3 765.5,912.5 765.5,908.3 766.5,907.3 766.5,915.7 767.5,910.1 767.5,904.8 768.5,912.4 768.5,903.3 769.5,900.2 769.5,908.0 770.5,905.5 770.5,897.9 771.5,901.0 771.5,894.3 772.5,893.5 772.5,900.2 773.5,897.0 773.5,886.5 774.5,892.9 774.5,886.3 775.5,881.1 775.5,884.9 776.5,881.0 776.5,872.4 777.5,875.0 777.5,859.4 778.5,863.6 778.5,851.1 779.5,848.2 779.5,789.8 780.5,627.0 780.5,845.1 781.5,841.4 781.5,858.7 782.5,857.9 782.5,871.9 783.5,870.8 783.5,883.6 784.5,875.9 784.5,886.1 785.5,885.8 785.5,889.6 786.5,889.0 786.5,894.5 787.5,892.4 787.5,899.9 788.5,905.8 788.5,894.5 789.5,898.5 789.5,904.5 790.5,898.9 790.5,909.5 791.5,903.8 791.5,909.5 792.5,912.4 792.5,904.8 793.5,909.2 793.5,914.7 794.5,915.4 794.5,905.8 795.5,912.1 795.5,918.4 796.5,922.4 796.5,914.9 797.5,912.4 797.5,921.4 798.5,916.8 798.5,923.1 799.5,927.4 799.5,917.0 800.5,918.7 800.5,926.8 801.5,919.5 801.5,925.7 802.5,922.4 802.5,930.2 803.5,929.6 803.5,921.9 804.5,932.9 804.5,923.9 805.5,933.2 805.5,924.7 806.5,936.9 806.5,925.9 807.5,926.8 807.5,932.8 808.5,934.8 808.5,926.5 809.5,928.3 809.5,935.0 810.5,929.6 810.5,939.9 811.5,929.1 811.5,938.6 812.5,937.7 812.5,932.8 813.5,930.5 813.5,941.9 814.5,933.7 814.5,940.3 815.5,934.6 815.5,939.7 816.5,932.1 816.5,945.3 817.5,946.1 817.5,936.0 818.5,932.8 818.5,944.9 819.5,943.4 819.5,934.8 820.5,937.0 820.5,945.7 821.5,933.5 821.5,944.2 822.5,939.4 822.5,946.2 823.5,947.8 823.5,937.8 824.5,939.9 824.5,947.8 825.5,950.2 825.5,939.8 826.5,940.4 826.5,947.6 827.5,948.6 827.5,940.1 828.5,949.4 828.5,941.4 829.5,942.9 829.5,949.2 830.5,943.6 830.5,955.3 831.5,949.3 831.5,941.0 832.5,945.0 832.5,952.1 833.5,951.2 833.5,942.4 834.5,946.2 834.5,951.4 835.5,952.1 835.5,945.3 836.5,946.1 836.5,951.2 837.5,955.3 837.5,945.6 838.5,953.1 838.5,947.1 839.5,946.2 839.5,953.1 840.5,953.2 840.5,946.9 841.5,948.2 841.5,953.5 842.5,954.5 842.5,947.0 843.5,946.0 843.5,954.6 844.5,958.1 844.5,948.4 845.5,949.1 845.5,955.1 846.5,948.2 846.5,958.7 847.5,956.4 847.5,948.8 848.5,956.7 848.5,949.6 849.5,950.6 849.5,957.3 850.5,958.5 850.5,949.9 851.5,949.3 851.5,955.9 852.5,958.8 852.5,949.0 853.5,950.7 853.5,959.2 854.5,949.7 854.5,958.6 855.5,950.3 855.5,958.7 856.5,959.4 856.5,950.4 857.5,951.5 857.5,960.4 858.5,953.6 858.5,961.1 859.5,951.5 859.5,960.1 860.5,961.9 860.5,952.4 861.5,953.2 861.5,961.3 862.5,952.5 862.5,957.9 863.5,951.4 863.5,960.9 864.5,960.9 864.5,951.9 865.5,949.8 865.5,961.9 866.5,954.1 866.5,962.2 867.5,955.6 867.5,962.4 868.5,961.8 868.5,953.1 869.5,964.0 869.5,953.5 870.5,951.9 870.5,962.8 871.5,951.8 871.5,960.9 872.5,964.4 872.5,952.0 873.5,964.9 873.5,953.1 874.5,952.4 874.5,962.1 875.5,964.2 875.5,954.9 876.5,954.8 876.5,962.6 877.5,961.9 877.5,953.8 878.5,961.2 878.5,954.0 879.5,965.0 879.5,955.5 880.5,954.2 880.5,962.8 881.5,964.1 881.5,953.9 882.5,955.8 882.5,963.0 883.5,962.7 883.5,956.4 884.5,956.1 884.5,966.4 885.5,963.1 885.5,956.5 886.5,956.5 886.5,963.6 887.5,964.2 887.5,954.9 888.5,966.0 888.5,952.9 889.5,954.9 889.5,965.0 890.5,964.1 890.5,956.1 891.5,955.9 891.5,963.9 892.5,965.5 892.5,956.3 893.5,956.4 893.5,965.5 894.5,966.3 894.5,957.6 895.5,956.2 895.5,966.6 896.5,955.9 896.5,966.4 897.5,965.8 897.5,956.4 898.5,965.8 898.5,955.1 899.5,963.8 899.5,957.3 900.5,957.7 900.5,968.8 901.5,966.8 901.5,955.8 902.5,964.1 902.5,955.9 903.5,965.3 903.5,918.0 904.5,957.0 904.5,964.4 905.5,965.2 905.5,957.3 906.5,966.4 906.5,956.8 907.5,965.7 907.5,956.3 908.5,964.1 908.5,956.0 909.5,969.8 909.5,956.7 910.5,957.2 910.5,965.2 911.5,965.9 911.5,956.9 912.5,967.4 912.5,957.2 913.5,957.0 913.5,966.1 914.5,957.4 914.5,968.0 915.5,958.4 915.5,965.0 916.5,965.8 916.5,956.1 917.5,958.6 917.5,966.3 918.5,957.6 918.5,967.4 919.5,957.0 919.5,966.4 920.5,970.7 920.5,957.3 921.5,967.1 921.5,958.1 922.5,957.1 922.5,965.4 923.5,957.4 923.5,967.5 924.5,966.7 924.5,957.2 925.5,958.3 925.5,965.1 926.5,966.1 926.5,956.3 927.5,967.1 927.5,957.0 928.5,957.9 928.5,967.6 929.5,965.2 929.5,955.4 930.5,965.7 930.5,958.7 931.5,958.7 931.5,968.4 932.5,958.0 932.5,965.6 933.5,958.8 933.5,969.3 934.5,958.6 934.5,966.4 935.5,958.0 935.5,967.8 936.5,958.6 936.5,968.3 937.5,967.5 937.5,956.7 938.5,957.4 938.5,968.9 939.5,959.0 939.5,967.6 940.5,957.9 940.5,967.6 941.5,967.7 941.5,959.1 942.5,959.3 942.5,967.4 943.5,967.9 943.5,959.0 944.5,966.3 944.5,958.7 945.5,969.3 945.5,957.0 946.5,958.6 946.5,969.8 947.5,959.3 947.5,968.1 948.5,955.9 948.5,967.8 949.5,960.1 949.5,968.1 950.5,967.9 950.5,959.9 951.5,967.9 951.5,958.7 952.5,955.2 952.5,967.7 953.5,958.7 953.5,971.0 954.5,969.2 954.5,959.3 955.5,957.8 955.5,969.0 956.5,967.4 956.5,957.1 957.5,960.1 957.5,968.3 958.5,968.2 958.5,958.5 959.5,967.9 959.5,959.1 960.5,968.7 960.5,957.7 961.5,959.2 961.5,969.5 962.5,959.5 962.5,971.5 963.5,959.8 963.5,971.2 964.5,959.8 964.5,967.9 965.5,968.7 965.5,959.8 966.5,967.5 966.5,958.8 967.5,971.1 967.5,960.3 968.5,969.0 968.5,958.3 969.5,958.1 969.5,968.7 970.5,967.2 970.5,958.8 971.5,959.0 971.5,970.3 972.5,969.9 972.5,960.2 973.5,966.7 973.5,957.5 974.5,970.5 974.5,958.4 975.5,969.4 975.5,934.3 976.5,958.3 976.5,971.6 977.5,959.1 977.5,969.5 978.5,971.2 978.5,959.7 979.5,972.5 979.5,959.7 980.5,969.7 980.5,960.7 981.5,959.8 981.5,968.2 982.5,968.8 982.5,958.6 983.5,969.7 983.5,960.0 984.5,958.9 984.5,969.0 985.5,968.9 985.5,959.1 986.5,958.7 986.5,969.2 987.5,959.1 987.5,968.7 988.5,969.9 988.5,958.4 989.5,959.2 989.5,971.1 990.5,959.1 990.5,970.6 991.5,971.8 991.5,960.0 992.5,961.4 992.5,969.1 993.5,957.3 993.5,968.0 994.5,958.6 994.5,970.4 995.5,972.0 995.5,958.6 996.5,959.6 996.5,969.2 997.5,970.4 997.5,959.9 998.5,975.2 998.5,960.0 999.5,969.6 999.5,959.1 1000.5,959.0 1000.5,969.6 1001.5,960.7 1001.5,972.2 1002.5,960.4 1002.5,969.0 1003.5,970.3 1003.5,961.8 1004.5,970.9 1004.5,960.9 1005.5,957.8 1005.5,970.4 1006.5,959.2 1006.5,974.0 1007.5,970.6 1007.5,958.1 1008.5,974.2 1008.5,960.9 1009.5,970.8 1009.5,960.6 1010.5,970.7 1010.5,956.7 1011.5,971.3 1011.5,961.2 1012.5,971.6 1012.5,959.6 1013.5,973.0 1013.5,961.8 1014.5,960.0 1014.5,973.1 1015.5,972.0 1015.5,956.7 1016.5,969.4 1016.5,959.1 1017.5,961.5 1017.5,972.0 1018.5,959.8 1018.5,970.4 1019.5,970.4 1019.5,959.5 1020.5,970.1 1020.5,960.5 1021.5,960.6 1021.5,970.9 1022.5,958.6 1022.5,970.1 1023.5,969.4 1023.5,959.0 1024.5,959.7 1024.5,971.9 1025.5,970.5 1025.5,957.3 1026.5,973.0 1026.5,958.7 1027.5,952.3 1027.5,970.5 1028.5,956.6 1028.5,970.9 1029.5,971.0 1029.5,960.3 1030.5,960.1 1030.5,972.3 1031.5,975.4 1031.5,959.4 1032.5,972.1 1032.5,961.6 1033.5,960.9 1033.5,972.6 1034.5,960.0 1034.5,973.3 1035.5,972.3 1035.5,960.2 1036.5,971.9 1036.5,960.2 1037.5,972.2 1037.5,960.5 1038.5,959.6 1038.5,970.9 1039.5,960.6 1039.5,972.5 1040.5,973.8 1040.5,961.7 1041.5,969.4 1041.5,960.8 1042.5,970.5 1042.5,961.8 1043.5,972.2 1043.5,961.2 1044.5,960.7 1044.5,970.8 1045.5,971.5 1045.5,960.3 1046.5,960.5 1046.5,971.5 1047.5,960.9 1047.5,974.0 1048.5,971.8 1048.5,958.7 1049.5,961.6 1049.5,972.7 1050.5,972.8 1050.5,959.5 1051.5,971.3 1051.5,960.5 1052.5,971.0 1052.5,960.4 1053.5,958.1 1053.5,973.4 1054.5,961.7 1054.5,973.5 1055.5,971.6 1055.5,962.0 1056.5,960.9 1056.5,973.4 1057.5,972.8 1057.5,961.5 1058.5,972.9 1058.5,962.5 1059.5,975.2 1059.5,961.8 1060.5,971.0 1060.5,961.2 1061.5,959.4 1061.5,973.6 1062.5,972.7 1062.5,960.4 1063.5,973.0 1063.5,961.8 1064.5,973.0 1064.5,960.3 1065.5,961.5 1065.5,972.0 1066.5,972.1 1066.5,951.1 1067.5,974.0 1067.5,960.2 1068.5,961.8 1068.5,973.6 1069.5,971.8 1069.5,959.5 1070.5,961.5 1070.5,972.1 1071.5,971.9 1071.5,960.7 1072.5,960.6 1072.5,974.3 1073.5,958.4 1073.5,970.1 1074.5,959.1 1074.5,973.2 1075.5,973.1 1075.5,962.4 1076.5,961.2 1076.5,972.4 1077.5,975.3 1077.5,960.5 1078.5,961.0 1078.5,974.3 1079.5,972.8 1079.5,959.9 1080.5,959.4 1080.5,972.0 1081.5,962.2 1081.5,974.1 1082.5,962.6 1082.5,973.2 1083.5,959.2 1083.5,975.0 1084.5,974.4 1084.5,959.4 1085.5,975.0 1085.5,962.0 1086.5,972.0 1086.5,960.2 1087.5,960.2 1087.5,972.2 1088.5,972.5 1088.5,961.1 1089.5,972.3 1089.5,960.3 1090.5,961.2 1090.5,974.3 1091.5,961.5 1091.5,972.1 1092.5,976.9 1092.5,961.6 1093.5,975.0 1093.5,962.2 1094.5,973.7 1094.5,961.0 1095.5,962.2 1095.5,974.2 1096.5,961.5 1096.5,973.4 1097.5,972.4 1097.5,961.1 1098.5,972.7 1098.5,962.1 1099.5,961.8 1099.5,971.2 1100.5,961.0 1100.5,972.2 1101.5,974.6 1101.5,960.5 1102.5,974.3 1102.5,961.7 1103.5,961.6 1103.5,973.4 1104.5,961.7 1104.5,974.9 1105.5,960.8 1105.5,973.0 1106.5,972.8 1106.5,960.4 1107.5,960.0 1107.5,973.1 1108.5,961.2 1108.5,975.5 1109.5,976.5 1109.5,961.9 1110.5,973.6 1110.5,961.9 1111.5,975.0 1111.5,964.0 1112.5,960.9 1112.5,975.1 1113.5,974.0 1113.5,959.5 1114.5,976.3 1114.5,960.9 1115.5,962.6 1115.5,972.3 1116.5,975.7 1116.5,962.8 1117.5,960.3 1117.5,972.6 1118.5,977.5 1118.5,961.2 1119.5,961.9 1119.5,975.1 1120.5,974.4 1120.5,961.4 1121.5,974.5 1121.5,961.4 1122.5,973.7 1122.5,961.9 1123.5,962.5 1123.5,974.3 1124.5,961.8 1124.5,974.8 1125.5,962.2 1125.5,976.9 1126.5,962.5 1126.5,974.3 1127.5,962.4 1127.5,975.8 1128.5,974.8 1128.5,960.1 1129.5,972.7 1129.5,963.1 1130.5,972.6 1130.5,961.7 1131.5,958.6 1131.5,973.8 1132.5,975.9 1132.5,961.5 1133.5,973.6 1133.5,961.3 1134.5,962.1 1134.5,973.3 1135.5,973.7 1135.5,962.1 1136.5,961.3 1136.5,977.3 1137.5,960.9 1137.5,975.4 1138.5,975.0 1138.5,962.1 1139.5,962.4 1139.5,975.3 1140.5,973.8 1140.5,962.4 1141.5,961.2 1141.5,975.9 1142.5,960.2 1142.5,977.7 1143.5,974.3 1143.5,962.6 1144.5,961.5 1144.5,975.2 1145.5,961.1 1145.5,978.5 1146.5,977.1 1146.5,962.0 1147.5,961.2 1147.5,975.4 1148.5,962.6 1148.5,974.8 1149.5,962.6 1149.5,974.6 1150.5,961.6 1150.5,980.8 1151.5,959.4 1151.5,973.8 1152.5,975.5 1152.5,962.1 1153.5,961.5 1153.5,977.6 1154.5,975.5 1154.5,962.1 1155.5,975.3 1155.5,960.9 1156.5,975.6 1156.5,961.1 1157.5,977.2 1157.5,962.0 1158.5,960.6 1158.5,975.8 1159.5,975.3 1159.5,961.5 1160.5,974.0 1160.5,961.7 1161.5,959.4 1161.5,974.8 1162.5,961.2 1162.5,976.0 1163.5,960.7 1163.5,974.7 1164.5,974.8 1164.5,961.5 1165.5,975.5 1165.5,961.7 1166.5,962.1 1166.5,978.6 1167.5,976.1 1167.5,961.8 1168.5,961.9 1168.5,974.7 1169.5,960.7 1169.5,975.8 1170.5,961.8 1170.5,976.3 1171.5,975.0 1171.5,963.1 1172.5,975.5 1172.5,961.4 1173.5,961.4 1173.5,975.3 1174.5,961.3 1174.5,975.1 1175.5,975.0 1175.5,961.0 1176.5,975.5 1176.5,961.1 1177.5,975.3 1177.5,961.3 1178.5,961.7 1178.5,974.8 1179.5,979.0 1179.5,962.6 1180.5,960.6 1180.5,979.2 1181.5,959.2 1181.5,976.6 1182.5,977.0 1182.5,961.5 1183.5,959.2 1183.5,976.7 1184.5,962.3 1184.5,976.2 1185.5,977.0 1185.5,961.3 1186.5,976.8 1186.5,960.1 1187.5,976.7 1187.5,959.7 1188.5,977.5 1188.5,961.6 1189.5,959.6 1189.5,974.7 1190.5,963.3 1190.5,976.9 1191.5,961.2 1191.5,975.0 1192.5,976.0 1192.5,962.2 1193.5,961.5 1193.5,978.8 1194.5,977.9 1194.5,960.6 1195.5,961.3 1195.5,979.4 1196.5,974.8 1196.5,961.7 1197.5,962.5 1197.5,975.8 1198.5,975.6 1198.5,960.4 1199.5,962.8 1199.5,975.9 1200.5,977.0 1200.5,961.4 1201.5,961.1 1201.5,975.5 1202.5,961.1 1202.5,975.8 1203.5,962.2 1203.5,977.2 1204.5,976.4 1204.5,962.5 1205.5,961.2 1205.5,977.3 1206.5,962.4 1206.5,977.7 1207.5,961.9 1207.5,975.7 1208.5,980.8 1208.5,961.9 1209.5,975.4 1209.5,963.3 1210.5,975.9 1210.5,962.0 1211.5,962.6 1211.5,976.7 1212.5,976.9 1212.5,959.5 1213.5,957.4 1213.5,976.7 1214.5,978.3 1214.5,960.7 1215.5,960.8 1215.5,976.1 1216.5,978.5 1216.5,962.0 1217.5,978.0 1217.5,961.5 1218.5,961.8 1218.5,975.8 1219.5,975.9 1219.5,963.0 1220.5,962.0 1220.5,976.5 1221.5,975.4 1221.5,962.9 1222.5,962.8 1222.5,977.9 1223.5,973.9 1223.5,960.4 1224.5,961.0 1224.5,976.7 1225.5,976.5 1225.5,961.4 1226.5,959.8 1226.5,977.4 1227.5,975.8 1227.5,962.8 1228.5,958.1 1228.5,977.5 1229.5,961.5 1229.5,979.3 1230.5,978.4 1230.5,962.0 1231.5,978.5 1231.5,961.7 1232.5,979.9 1232.5,961.6 1233.5,977.4 1233.5,960.5 1234.5,961.9 1234.5,978.3 1235.5,962.3 1235.5,977.2 1236.5,977.8 1236.5,961.2 1237.5,960.7 1237.5,979.0 1238.5,974.9 1238.5,960.7 1239.5,960.9 1239.5,977.3 1240.5,961.1 1240.5,976.7 1241.5,975.9 1241.5,962.2 1242.5,961.2 1242.5,982.0 1243.5,958.0 1243.5,978.0 1244.5,976.7 1244.5,961.6 1245.5,961.9 1245.5,975.9 1246.5,959.9 1246.5,978.0 1247.5,980.7 1247.5,961.3 1248.5,976.0 1248.5,960.8 1249.5,960.4 1249.5,977.8 1250.5,962.7 1250.5,976.0 1251.5,979.9 1251.5,962.4 1252.5,977.0 1252.5,961.9 1253.5,962.9 1253.5,976.8 1254.5,977.3 1254.5,957.4 1255.5,978.2 1255.5,960.1 1256.5,961.9 1256.5,978.0 1257.5,978.6 1257.5,961.0 1258.5,961.6 1258.5,979.6 1259.5,977.6 1259.5,960.9 1260.5,977.0 1260.5,960.9 1261.5,962.1 1261.5,976.7 1262.5,961.5 1262.5,977.7 1263.5,977.5 1263.5,963.2 1264.5,977.8 1264.5,960.9 1265.5,959.6 1265.5,975.1 1266.5,977.7 1266.5,960.2 1267.5,961.7 1267.5,980.0 1268.5,963.2 1268.5,976.5 1269.5,978.2 1269.5,961.2 1270.5,979.5 1270.5,958.8 1271.5,962.2 1271.5,976.8 1272.5,961.8 1272.5,978.8 1273.5,962.4 1273.5,978.5 1274.5,961.0 1274.5,977.6 1275.5,962.6 1275.5,978.1 1276.5,977.2 1276.5,960.0 1277.5,962.1 1277.5,977.8 1278.5,978.9 1278.5,960.7 1279.5,976.6 1279.5,959.9 1280.5,961.3 1280.5,978.9 1281.5,977.4 1281.5,963.3 1282.5,978.7 1282.5,962.3 1283.5,960.3 1283.5,976.6 1284.5,961.1 1284.5,980.9 1285.5,976.7 1285.5,963.4 1286.5,977.4 1286.5,960.2 1287.5,961.1 1287.5,978.9 1288.5,976.8 1288.5,961.2 1289.5,976.8 1289.5,961.9 1290.5,962.3 1290.5,978.2 1291.5,962.7 1291.5,979.2 1292.5,961.7 1292.5,977.6 1293.5,961.4 1293.5,978.4 1294.5,976.4 1294.5,960.9 1295.5,963.1 1295.5,982.3 1296.5,981.8 1296.5,961.6 1297.5,979.3 1297.5,961.7 1298.5,962.2 1298.5,979.5 1299.5,977.4 1299.5,961.2 1300.5,979.4 1300.5,962.4 1301.5,962.8 1301.5,976.5 1302.5,977.3 1302.5,962.1 1303.5,978.0 1303.5,961.7 1304.5,960.1 1304.5,977.5 1305.5,961.0 1305.5,979.2 1306.5,979.0 1306.5,963.3 1307.5,979.2 1307.5,963.2 1308.5,962.5 1308.5,981.7 1309.5,960.2 1309.5,978.3 1310.5,977.4 1310.5,960.3 1311.5,979.9 1311.5,963.2 1312.5,979.5 1312.5,962.8 1313.5,961.8 1313.5,980.8 1314.5,979.8 1314.5,962.0 1315.5,963.5 1315.5,980.3 1316.5,977.5 1316.5,960.9 1317.5,977.9 1317.5,963.0 1318.5,962.0 1318.5,979.3 1319.5,963.1 1319.5,980.2 1320.5,961.5 1320.5,979.9 1321.5,961.3 1321.5,978.2 1322.5,979.4 1322.5,962.2 1323.5,962.0 1323.5,978.8 1324.5,979.7 1324.5,963.4 1325.5,977.7 1325.5,962.1 1326.5,979.0 1326.5,963.0 1327.5,962.0 1327.5,981.6 1328.5,979.0 1328.5,961.0 1329.5,963.1 1329.5,981.1 1330.5,961.0 1330.5,979.4 1331.5,978.3 1331.5,960.5 1332.5,962.6 1332.5,979.9 1333.5,961.4 1333.5,979.0 1334.5,961.9 1334.5,978.8 1335.5,961.2 1335.5,977.5 1336.5,977.3 1336.5,960.0 1337.5,960.5 1337.5,978.2 1338.5,963.2 1338.5,979.6 1339.5,978.7 1339.5,962.7 1340.5,962.6 1340.5,978.8 1341.5,979.6 1341.5,963.4 1342.5,963.9 1342.5,982.7 1343.5,963.9 1343.5,982.4 1344.5,965.0 1344.5,987.6 1345.5,971.6 1345.5,986.6 1346.5,989.8 1346.5,976.2" stroke="#ffff00"/><path d="M780.5,678V900" stroke="#ffff00" stroke-width="2"/><path d="M779.5,845V880" stroke="#00ffff" stroke-width="1.2"/></g></svg>
<div style="left:80px;top:565.8px;height:14px;line-height:14px;font-size:11.5px;color:#00ffff;font-family:'Liberation Sans',sans-serif;white-space:pre;font-weight:bold;left:67.21px;transform:scaleX(0.9500);transform-origin:100% 0;">20</div>
<div style="left:1348px;top:566px;height:14px;line-height:14px;font-size:11.5px;color:#ffff00;font-family:'Liberation Sans',sans-serif;white-space:pre;font-weight:bold;transform:scaleX(0.9700);transform-origin:0 0;">20</div>
<div style="left:80px;top:610.8px;height:14px;line-height:14px;font-size:11.5px;color:#00ffff;font-family:'Liberation Sans',sans-serif;white-space:pre;font-weight:bold;left:73.60px;transform:scaleX(0.9500);transform-origin:100% 0;">0</div>
<div style="left:1348px;top:611px;height:14px;line-height:14px;font-size:11.5px;color:#ffff00;font-family:'Liberation Sans',sans-serif;white-space:pre;font-weight:bold;transform:scaleX(0.9700);transform-origin:0 0;">0</div>
<div style="left:80px;top:654.8px;height:14px;line-height:14px;font-size:11.5px;color:#00ffff;font-family:'Liberation Sans',sans-serif;white-space:pre;font-weight:bold;left:63.38px;transform:scaleX(0.9500);transform-origin:100% 0;">-20</div>
<div style="left:1348px;top:655px;height:14px;line-height:14px;font-size:11.5px;color:#ffff00;font-family:'Liberation Sans',sans-serif;white-space:pre;font-weight:bold;transform:scaleX(0.9700);transform-origin:0 0;">-20</div>
<div style="left:80px;top:699.8px;height:14px;line-height:14px;font-size:11.5px;color:#00ffff;font-family:'Liberation Sans',sans-serif;white-space:pre;font-weight:bold;left:63.38px;transform:scaleX(0.9500);transform-origin:100% 0;">-40</div>
<div style="left:1348px;top:700px;height:14px;line-height:14px;font-size:11.5px;color:#ffff00;font-family:'Liberation Sans',sans-serif;white-space:pre;font-weight:bold;transform:scaleX(0.9700);transform-origin:0 0;">-40</div>
<div style="left:80px;top:743.8px;height:14px;line-height:14px;font-size:11.5px;color:#00ffff;font-family:'Liberation Sans',sans-serif;white-space:pre;font-weight:bold;left:63.38px;transform:scaleX(0.9500);transform-origin:100% 0;">-60</div>
<div style="left:1348px;top:744px;height:14px;line-height:14px;font-size:11.5px;color:#ffff00;font-family:'Liberation Sans',sans-serif;white-space:pre;font-weight:bold;transform:scaleX(0.9700);transform-origin:0 0;">-60</div>
<div style="left:80px;top:788.8px;height:14px;line-height:14px;font-size:11.5px;color:#00ffff;font-family:'Liberation Sans',sans-serif;white-space:pre;font-weight:bold;left:63.38px;transform:scaleX(0.9500);transform-origin:100% 0;">-80</div>
<div style="left:1348px;top:789px;height:14px;line-height:14px;font-size:11.5px;color:#ffff00;font-family:'Liberation Sans',sans-serif;white-space:pre;font-weight:bold;transform:scaleX(0.9700);transform-origin:0 0;">-80</div>
<div style="left:80px;top:832.8px;height:14px;line-height:14px;font-size:11.5px;color:#00ffff;font-family:'Liberation Sans',sans-serif;white-space:pre;font-weight:bold;left:56.99px;transform:scaleX(0.9500);transform-origin:100% 0;">-100</div>
<div style="left:1348px;top:833px;height:14px;line-height:14px;font-size:11.5px;color:#ffff00;font-family:'Liberation Sans',sans-serif;white-space:pre;font-weight:bold;transform:scaleX(0.9700);transform-origin:0 0;">-100</div>
<div style="left:80px;top:877.8px;height:14px;line-height:14px;font-size:11.5px;color:#00ffff;font-family:'Liberation Sans',sans-serif;white-space:pre;font-weight:bold;left:56.99px;transform:scaleX(0.9500);transform-origin:100% 0;">-120</div>
<div style="left:1348px;top:878px;height:14px;line-height:14px;font-size:11.5px;color:#ffff00;font-family:'Liberation Sans',sans-serif;white-space:pre;font-weight:bold;transform:scaleX(0.9700);transform-origin:0 0;">-120</div>
<div style="left:80px;top:921.8px;height:14px;line-height:14px;font-size:11.5px;color:#00ffff;font-family:'Liberation Sans',sans-serif;white-space:pre;font-weight:bold;left:56.99px;transform:scaleX(0.9500);transform-origin:100% 0;">-140</div>
<div style="left:1348px;top:922px;height:14px;line-height:14px;font-size:11.5px;color:#ffff00;font-family:'Liberation Sans',sans-serif;white-space:pre;font-weight:bold;transform:scaleX(0.9700);transform-origin:0 0;">-140</div>
<div style="left:80px;top:966.8px;height:14px;line-height:14px;font-size:11.5px;color:#00ffff;font-family:'Liberation Sans',sans-serif;white-space:pre;font-weight:bold;left:56.99px;transform:scaleX(0.9500);transform-origin:100% 0;">-160</div>
<div style="left:1348px;top:967px;height:14px;line-height:14px;font-size:11.5px;color:#ffff00;font-family:'Liberation Sans',sans-serif;white-space:pre;font-weight:bold;transform:scaleX(0.9700);transform-origin:0 0;">-160</div>
<div style="left:80px;top:1010.8px;height:14px;line-height:14px;font-size:11.5px;color:#00ffff;font-family:'Liberation Sans',sans-serif;white-space:pre;font-weight:bold;left:56.99px;transform:scaleX(0.9500);transform-origin:100% 0;">-180</div>
<div style="left:1348px;top:1011px;height:14px;line-height:14px;font-size:11.5px;color:#ffff00;font-family:'Liberation Sans',sans-serif;white-space:pre;font-weight:bold;transform:scaleX(0.9700);transform-origin:0 0;">-180</div>
<div style="left:83px;top:1019px;height:14px;line-height:14px;font-size:11.5px;color:#fff;font-family:'Liberation Sans',sans-serif;white-space:pre;font-weight:bold;left:76.60px;transform:scaleX(0.9500);transform-origin:50% 0;">20</div>
<div style="left:246px;top:1019px;height:14px;line-height:14px;font-size:11.5px;color:#fff;font-family:'Liberation Sans',sans-serif;white-space:pre;font-weight:bold;left:239.60px;transform:scaleX(0.9500);transform-origin:50% 0;">50</div>
<div style="left:370px;top:1019px;height:14px;line-height:14px;font-size:11.5px;color:#fff;font-family:'Liberation Sans',sans-serif;white-space:pre;font-weight:bold;left:360.41px;transform:scaleX(0.9500);transform-origin:50% 0;">100</div>
<div style="left:493px;top:1019px;height:14px;line-height:14px;font-size:11.5px;color:#fff;font-family:'Liberation Sans',sans-serif;white-space:pre;font-weight:bold;left:483.41px;transform:scaleX(0.9500);transform-origin:50% 0;">200</div>
<div style="left:656px;top:1019px;height:14px;line-height:14px;font-size:11.5px;color:#fff;font-family:'Liberation Sans',sans-serif;white-space:pre;font-weight:bold;left:646.41px;transform:scaleX(0.9500);transform-origin:50% 0;">500</div>
<div style="left:780px;top:1019px;height:14px;line-height:14px;font-size:11.5px;color:#fff;font-family:'Liberation Sans',sans-serif;white-space:pre;font-weight:bold;left:773.60px;transform:scaleX(0.9500);transform-origin:50% 0;">1k</div>
<div style="left:903px;top:1019px;height:14px;line-height:14px;font-size:11.5px;color:#fff;font-family:'Liberation Sans',sans-serif;white-space:pre;font-weight:bold;left:896.60px;transform:scaleX(0.9500);transform-origin:50% 0;">2k</div>
<div style="left:1067px;top:1019px;height:14px;line-height:14px;font-size:11.5px;color:#fff;font-family:'Liberation Sans',sans-serif;white-space:pre;font-weight:bold;left:1060.60px;transform:scaleX(0.9500);transform-origin:50% 0;">5k</div>
<div style="left:1190px;top:1019px;height:14px;line-height:14px;font-size:11.5px;color:#fff;font-family:'Liberation Sans',sans-serif;white-space:pre;font-weight:bold;left:1180.41px;transform:scaleX(0.9500);transform-origin:50% 0;">10k</div>
<div style="left:1314px;top:1019px;height:14px;line-height:14px;font-size:11.5px;color:#fff;font-family:'Liberation Sans',sans-serif;white-space:pre;font-weight:bold;left:1304.41px;transform:scaleX(0.9500);transform-origin:50% 0;">20k</div>
<div style="left:45px;top:548px;height:14px;line-height:14px;font-size:11.5px;color:#00ffff;font-family:'Liberation Sans',sans-serif;white-space:pre;font-weight:bold;transform:scaleX(0.9753);transform-origin:0 0;">A(dBV)</div>
<div style="left:1346px;top:548px;height:14px;line-height:14px;font-size:11.5px;color:#ffff00;font-family:'Liberation Sans',sans-serif;white-space:pre;font-weight:bold;transform:scaleX(0.9753);transform-origin:0 0;">B(dBV)</div>
<div style="left:1355px;top:1029px;height:14px;line-height:14px;font-size:11.5px;color:#fff;font-family:'Liberation Sans',sans-serif;white-space:pre;font-weight:bold;left:1347.97px;transform:scaleX(1.0316);transform-origin:50% 0;">Hz</div>
<div style="left:36px;top:1029px;width:73px;height:14px;background:#fff;border:1px solid #000;outline:1px solid #fff;outline-offset:-2px;"></div>
<div style="left:38px;top:1029px;height:14px;line-height:14px;font-size:11.5px;color:#000;font-family:'Liberation Sans',sans-serif;white-space:pre;font-weight:bold;transform:scaleX(0.9392);transform-origin:0 0;">Zero Padding</div>
<div style="left:117px;top:1029px;height:14px;line-height:14px;font-size:11px;color:#fff;font-family:'Liberation Sans',sans-serif;white-space:pre;font-weight:bold;transform:scaleX(0.9997);transform-origin:0 0;">Resolution: 0.366211Hz, 0.5Hz (real)</div>
<div style="left:599px;top:1029px;height:14px;line-height:14px;font-size:11px;color:#fff;font-family:'Liberation Sans',sans-serif;white-space:pre;font-weight:bold;transform:scaleX(0.9968);transform-origin:0 0;">AMPLITUDE SPECTRUM in dBV (Vr=1 Vrms)</div>
<div style="left:1195px;top:1029px;height:14px;line-height:14px;font-size:11px;color:#fff;font-family:'Liberation Sans',sans-serif;white-space:pre;font-weight:bold;transform:scaleX(0.9922);transform-origin:0 0;">Averaged Frames: 10</div>
<div style="left:1325.5px;top:575.5px;height:14px;line-height:14px;font-size:16px;color:#fff;font-family:'Liberation Sans',sans-serif;white-space:pre;font-weight:bold;transform:scaleX(1.0691);transform-origin:0 0;">Mi</div>
<div style="left:1326px;top:578px;width:20px;height:1px;background:#000;"></div>
<div style="left:1326px;top:580px;width:20px;height:1px;background:#000;"></div>
<div style="left:1326px;top:582px;width:20px;height:1px;background:#000;"></div>
<div style="left:1326px;top:575px;width:20px;height:2px;background:#000;"></div>
<div style="left:294px;top:537.5px;height:13px;line-height:13px;font-size:10.5px;color:#00ffff;font-family:'Liberation Sans',sans-serif;white-space:pre;font-weight:bold;transform:scaleX(1.0431);transform-origin:0 0;">A: Peak Frequency=</div>
<div style="left:408px;top:537.5px;height:13px;line-height:13px;font-size:10.5px;color:#00ffff;font-family:'Liberation Sans',sans-serif;white-space:pre;font-weight:bold;transform:scaleX(1.0505);transform-origin:0 0;">1.001672</div>
<div style="left:462px;top:537.5px;height:13px;line-height:13px;font-size:10.5px;color:#00ffff;font-family:'Liberation Sans',sans-serif;white-space:pre;font-weight:bold;transform:scaleX(0.9105);transform-origin:0 0;">kHz</div>
<div style="left:487px;top:537.5px;height:13px;line-height:13px;font-size:10.5px;color:#00ffff;font-family:'Liberation Sans',sans-serif;white-space:pre;font-weight:bold;transform:scaleX(1.0465);transform-origin:0 0;">THD=</div>
<div style="left:531px;top:537.5px;height:13px;line-height:13px;font-size:10.5px;color:#00ffff;font-family:'Liberation Sans',sans-serif;white-space:pre;font-weight:bold;transform:scaleX(1.0244);transform-origin:0 0;">0.01207 % (</div>
<div style="left:602px;top:537.5px;height:13px;line-height:13px;font-size:10.5px;color:#00ffff;font-family:'Liberation Sans',sans-serif;white-space:pre;font-weight:bold;transform:scaleX(1.0363);transform-origin:0 0;">-78.36 dB)</div>
<div style="left:661px;top:537.5px;height:13px;line-height:13px;font-size:10.5px;color:#00ffff;font-family:'Liberation Sans',sans-serif;white-space:pre;font-weight:bold;transform:scaleX(1.0380);transform-origin:0 0;">THD+N=</div>
<div style="left:717px;top:537.5px;height:13px;line-height:13px;font-size:10.5px;color:#00ffff;font-family:'Liberation Sans',sans-serif;white-space:pre;font-weight:bold;transform:scaleX(1.0244);transform-origin:0 0;">1.67100 % (</div>
<div style="left:787px;top:537.5px;height:13px;line-height:13px;font-size:10.5px;color:#00ffff;font-family:'Liberation Sans',sans-serif;white-space:pre;font-weight:bold;transform:scaleX(1.0363);transform-origin:0 0;">-35.54 dB)</div>
<div style="left:847px;top:537.5px;height:13px;line-height:13px;font-size:10.5px;color:#00ffff;font-family:'Liberation Sans',sans-serif;white-space:pre;font-weight:bold;transform:scaleX(1.0051);transform-origin:0 0;">SINAD=</div>
<div style="left:901px;top:537.5px;height:13px;line-height:13px;font-size:10.5px;color:#00ffff;font-family:'Liberation Sans',sans-serif;white-space:pre;font-weight:bold;transform:scaleX(0.9957);transform-origin:0 0;">35.54 dB</div>
<div style="left:953px;top:537.5px;height:13px;line-height:13px;font-size:10.5px;color:#00ffff;font-family:'Liberation Sans',sans-serif;white-space:pre;font-weight:bold;transform:scaleX(0.9893);transform-origin:0 0;">SNR=</div>
<div style="left:996px;top:537.5px;height:13px;line-height:13px;font-size:10.5px;color:#00ffff;font-family:'Liberation Sans',sans-serif;white-space:pre;font-weight:bold;transform:scaleX(0.9957);transform-origin:0 0;">35.54 dB</div>
<div style="left:1047px;top:537.5px;height:13px;line-height:13px;font-size:10.5px;color:#00ffff;font-family:'Liberation Sans',sans-serif;white-space:pre;font-weight:bold;transform:scaleX(0.9936);transform-origin:0 0;">NL=</div>
<div style="left:1079px;top:537.5px;height:13px;line-height:13px;font-size:10.5px;color:#00ffff;font-family:'Liberation Sans',sans-serif;white-space:pre;font-weight:bold;transform:scaleX(1.0617);transform-origin:0 0;">-98.64 dBV</div>
<div style="left:294px;top:549.5px;height:13px;line-height:13px;font-size:10.5px;color:#ffff00;font-family:'Liberation Sans',sans-serif;white-space:pre;font-weight:bold;transform:scaleX(1.0431);transform-origin:0 0;">B: Peak Frequency=</div>
<div style="left:408px;top:549.5px;height:13px;line-height:13px;font-size:10.5px;color:#ffff00;font-family:'Liberation Sans',sans-serif;white-space:pre;font-weight:bold;transform:scaleX(1.0505);transform-origin:0 0;">1.001672</div>
<div style="left:462px;top:549.5px;height:13px;line-height:13px;font-size:10.5px;color:#ffff00;font-family:'Liberation Sans',sans-serif;white-space:pre;font-weight:bold;transform:scaleX(0.9105);transform-origin:0 0;">kHz</div>
<div style="left:487px;top:549.5px;height:13px;line-height:13px;font-size:10.5px;color:#ffff00;font-family:'Liberation Sans',sans-serif;white-space:pre;font-weight:bold;transform:scaleX(1.0465);transform-origin:0 0;">THD=</div>
<div style="left:531px;top:549.5px;height:13px;line-height:13px;font-size:10.5px;color:#ffff00;font-family:'Liberation Sans',sans-serif;white-space:pre;font-weight:bold;transform:scaleX(1.0244);transform-origin:0 0;">0.00004 % (</div>
<div style="left:596px;top:549.5px;height:13px;line-height:13px;font-size:10.5px;color:#ffff00;font-family:'Liberation Sans',sans-serif;white-space:pre;font-weight:bold;transform:scaleX(1.0354);transform-origin:0 0;">-128.45 dB)</div>
<div style="left:661px;top:549.5px;height:13px;line-height:13px;font-size:10.5px;color:#ffff00;font-family:'Liberation Sans',sans-serif;white-space:pre;font-weight:bold;transform:scaleX(1.0380);transform-origin:0 0;">THD+N=</div>
<div style="left:717px;top:549.5px;height:13px;line-height:13px;font-size:10.5px;color:#ffff00;font-family:'Liberation Sans',sans-serif;white-space:pre;font-weight:bold;transform:scaleX(1.0350);transform-origin:0 0;">0.00211 % (</div>
<div style="left:787px;top:549.5px;height:13px;line-height:13px;font-size:10.5px;color:#ffff00;font-family:'Liberation Sans',sans-serif;white-space:pre;font-weight:bold;transform:scaleX(1.0363);transform-origin:0 0;">-93.52 dB)</div>
<div style="left:847px;top:549.5px;height:13px;line-height:13px;font-size:10.5px;color:#ffff00;font-family:'Liberation Sans',sans-serif;white-space:pre;font-weight:bold;transform:scaleX(1.0051);transform-origin:0 0;">SINAD=</div>
<div style="left:901px;top:549.5px;height:13px;line-height:13px;font-size:10.5px;color:#ffff00;font-family:'Liberation Sans',sans-serif;white-space:pre;font-weight:bold;transform:scaleX(0.9957);transform-origin:0 0;">93.52 dB</div>
<div style="left:953px;top:549.5px;height:13px;line-height:13px;font-size:10.5px;color:#ffff00;font-family:'Liberation Sans',sans-serif;white-space:pre;font-weight:bold;transform:scaleX(0.9893);transform-origin:0 0;">SNR=</div>
<div style="left:996px;top:549.5px;height:13px;line-height:13px;font-size:10.5px;color:#ffff00;font-family:'Liberation Sans',sans-serif;white-space:pre;font-weight:bold;transform:scaleX(0.9957);transform-origin:0 0;">93.52 dB</div>
<div style="left:1047px;top:549.5px;height:13px;line-height:13px;font-size:10.5px;color:#ffff00;font-family:'Liberation Sans',sans-serif;white-space:pre;font-weight:bold;transform:scaleX(0.9936);transform-origin:0 0;">NL=</div>
<div style="left:1079px;top:549.5px;height:13px;line-height:13px;font-size:10.5px;color:#ffff00;font-family:'Liberation Sans',sans-serif;white-space:pre;font-weight:bold;transform:scaleX(1.0617);transform-origin:0 0;">-92.81 dBV</div>
<div style="left:1018px;top:127px;width:902px;height:224px;background:#fff;box-shadow:0 0 0 1px rgba(110,110,110,.55),0 2px 7px 1px rgba(0,0,0,.32);"></div>
<svg style="left:1026px;top:133px" width="17" height="17" viewBox="0 0 17 17"><text x="0.5" y="7" font-size="8" font-weight="bold" font-family="Liberation Sans,sans-serif"><tspan fill="#0000ff">D</tspan><tspan fill="#ff0000">D</tspan><tspan fill="#00c000">P</tspan></text><path d="M0.5,8.5 h15 v7 h-15 z M0.5,12 h15 M5.5,8.5 v7 M10.5,8.5 v7" fill="none" stroke="#606060" stroke-width="1"/></svg>
<div style="left:1047px;top:133.7px;height:20px;line-height:20px;font-size:12.5px;color:#999;font-family:'Liberation Sans',sans-serif;white-space:pre;transform:scaleX(1.0000);transform-origin:0 0;">A&amp;B-Harmonic Frequencies, RMS, Phases</div>
<svg style="left:1790px;top:136px" width="12" height="12" viewBox="0 0 12 12"><path d="M0.5,6.5 H11.5" stroke="#707070" stroke-width="1"/></svg>
<svg style="left:1839px;top:136px" width="12" height="12" viewBox="0 0 12 12"><rect x="1" y="1" width="10" height="10" fill="none" stroke="#707070" stroke-width="1"/></svg>
<svg style="left:1889px;top:136px" width="12" height="12" viewBox="0 0 12 12"><path d="M0.8,0.8 L11.2,11.2 M11.2,0.8 L0.8,11.2" stroke="#707070" stroke-width="1.1"/></svg>
<div style="left:1021px;top:162px;width:896px;height:168px;background:#000;"></div>
<div style="left:1021px;top:162px;width:896px;height:17px;background:#f0f0f0;"></div>
<div style="left:1021px;top:162px;width:50px;height:17px;background:#f0f0f0;box-shadow:inset 1px 1px 0 #fff,inset -1px -1px 0 #696969,inset -2px -2px 0 #a0a0a0;"></div>
<div style="left:1027px;top:163px;height:15px;line-height:15px;font-size:13px;color:#000;font-family:'Liberation Sans',sans-serif;white-space:pre;transform:scaleX(0.8000);transform-origin:0 0;">A-Order</div>
<div style="left:1071px;top:162px;width:100px;height:17px;background:#f0f0f0;box-shadow:inset 1px 1px 0 #fff,inset -1px -1px 0 #696969,inset -2px -2px 0 #a0a0a0;"></div>
<div style="left:1077px;top:163px;height:15px;line-height:15px;font-size:13px;color:#000;font-family:'Liberation Sans',sans-serif;white-space:pre;transform:scaleX(0.8000);transform-origin:0 0;">A-Freq. (Hz)</div>
<div style="left:1171px;top:162px;width:100px;height:17px;background:#f0f0f0;box-shadow:inset 1px 1px 0 #fff,inset -1px -1px 0 #696969,inset -2px -2px 0 #a0a0a0;"></div>
<div style="left:1177px;top:163px;height:15px;line-height:15px;font-size:13px;color:#000;font-family:'Liberation Sans',sans-serif;white-space:pre;transform:scaleX(0.8000);transform-origin:0 0;">A-RMS (dBV)</div>
<div style="left:1271px;top:162px;width:100px;height:17px;background:#f0f0f0;box-shadow:inset 1px 1px 0 #fff,inset -1px -1px 0 #696969,inset -2px -2px 0 #a0a0a0;"></div>
<div style="left:1277px;top:163px;height:15px;line-height:15px;font-size:13px;color:#000;font-family:'Liberation Sans',sans-serif;white-space:pre;transform:scaleX(0.8000);transform-origin:0 0;">A-%</div>
<div style="left:1371px;top:162px;width:100px;height:17px;background:#f0f0f0;box-shadow:inset 1px 1px 0 #fff,inset -1px -1px 0 #696969,inset -2px -2px 0 #a0a0a0;"></div>
<div style="left:1377px;top:163px;height:15px;line-height:15px;font-size:13px;color:#000;font-family:'Liberation Sans',sans-serif;white-space:pre;transform:scaleX(0.8000);transform-origin:0 0;">A-Phase (D)</div>
<div style="left:1471px;top:162px;width:50px;height:17px;background:#f0f0f0;box-shadow:inset 1px 1px 0 #fff,inset -1px -1px 0 #696969,inset -2px -2px 0 #a0a0a0;"></div>
<div style="left:1477px;top:163px;height:15px;line-height:15px;font-size:13px;color:#000;font-family:'Liberation Sans',sans-serif;white-space:pre;transform:scaleX(0.8000);transform-origin:0 0;">B-Order</div>
<div style="left:1521px;top:162px;width:100px;height:17px;background:#f0f0f0;box-shadow:inset 1px 1px 0 #fff,inset -1px -1px 0 #696969,inset -2px -2px 0 #a0a0a0;"></div>
<div style="left:1527px;top:163px;height:15px;line-height:15px;font-size:13px;color:#000;font-family:'Liberation Sans',sans-serif;white-space:pre;transform:scaleX(0.8000);transform-origin:0 0;">B-Freq. (Hz)</div>
<div style="left:1621px;top:162px;width:100px;height:17px;background:#f0f0f0;box-shadow:inset 1px 1px 0 #fff,inset -1px -1px 0 #696969,inset -2px -2px 0 #a0a0a0;"></div>
<div style="left:1627px;top:163px;height:15px;line-height:15px;font-size:13px;color:#000;font-family:'Liberation Sans',sans-serif;white-space:pre;transform:scaleX(0.8000);transform-origin:0 0;">B-RMS (dBV)</div>
<div style="left:1721px;top:162px;width:100px;height:17px;background:#f0f0f0;box-shadow:inset 1px 1px 0 #fff,inset -1px -1px 0 #696969,inset -2px -2px 0 #a0a0a0;"></div>
<div style="left:1727px;top:163px;height:15px;line-height:15px;font-size:13px;color:#000;font-family:'Liberation Sans',sans-serif;white-space:pre;transform:scaleX(0.8000);transform-origin:0 0;">B-%</div>
<div style="left:1821px;top:162px;width:96px;height:17px;background:#f0f0f0;box-shadow:inset 1px 1px 0 #fff,inset -1px -1px 0 #696969,inset -2px -2px 0 #a0a0a0;"></div>
<div style="left:1827px;top:163px;height:15px;line-height:15px;font-size:13px;color:#000;font-family:'Liberation Sans',sans-serif;white-space:pre;transform:scaleX(0.8000);transform-origin:0 0;">B-Phase (D)</div>
<div style="left:1027px;top:180px;height:16px;line-height:16px;font-size:13px;color:#fff;font-family:'Liberation Sans',sans-serif;white-space:pre;transform:scaleX(0.8400);transform-origin:0 0;">1</div>
<div style="left:1077px;top:180px;height:16px;line-height:16px;font-size:13px;color:#fff;font-family:'Liberation Sans',sans-serif;white-space:pre;transform:scaleX(0.8400);transform-origin:0 0;">1.001672 kHz</div>
<div style="left:1177px;top:180px;height:16px;line-height:16px;font-size:13px;color:#fff;font-family:'Liberation Sans',sans-serif;white-space:pre;transform:scaleX(0.8400);transform-origin:0 0;">-63.10 dBV</div>
<div style="left:1277px;top:180px;height:16px;line-height:16px;font-size:13px;color:#fff;font-family:'Liberation Sans',sans-serif;white-space:pre;transform:scaleX(0.8400);transform-origin:0 0;">100.0000000  %</div>
<div style="left:1377px;top:180px;height:16px;line-height:16px;font-size:13px;color:#fff;font-family:'Liberation Sans',sans-serif;white-space:pre;transform:scaleX(0.8400);transform-origin:0 0;">2.19  D</div>
<div style="left:1477px;top:180px;height:16px;line-height:16px;font-size:13px;color:#fff;font-family:'Liberation Sans',sans-serif;white-space:pre;transform:scaleX(0.8400);transform-origin:0 0;">1</div>
<div style="left:1527px;top:180px;height:16px;line-height:16px;font-size:13px;color:#fff;font-family:'Liberation Sans',sans-serif;white-space:pre;transform:scaleX(0.8400);transform-origin:0 0;">1.001672 kHz</div>
<div style="left:1627px;top:180px;height:16px;line-height:16px;font-size:13px;color:#fff;font-family:'Liberation Sans',sans-serif;white-space:pre;transform:scaleX(0.8400);transform-origin:0 0;">0.71 dBV</div>
<div style="left:1727px;top:180px;height:16px;line-height:16px;font-size:13px;color:#fff;font-family:'Liberation Sans',sans-serif;white-space:pre;transform:scaleX(0.8400);transform-origin:0 0;">100.0000000  %</div>
<div style="left:1827px;top:180px;height:16px;line-height:16px;font-size:13px;color:#fff;font-family:'Liberation Sans',sans-serif;white-space:pre;transform:scaleX(0.8400);transform-origin:0 0;">58.12  D</div>
<div style="left:1027px;top:197px;height:16px;line-height:16px;font-size:13px;color:#fff;font-family:'Liberation Sans',sans-serif;white-space:pre;transform:scaleX(0.8400);transform-origin:0 0;">2</div>
<div style="left:1077px;top:197px;height:16px;line-height:16px;font-size:13px;color:#fff;font-family:'Liberation Sans',sans-serif;white-space:pre;transform:scaleX(0.8400);transform-origin:0 0;">2.003344 kHz</div>
<div style="left:1177px;top:197px;height:16px;line-height:16px;font-size:13px;color:#fff;font-family:'Liberation Sans',sans-serif;white-space:pre;transform:scaleX(0.8400);transform-origin:0 0;">-147.67 dBV</div>
<div style="left:1277px;top:197px;height:16px;line-height:16px;font-size:13px;color:#fff;font-family:'Liberation Sans',sans-serif;white-space:pre;transform:scaleX(0.8400);transform-origin:0 0;">0.0059137  %</div>
<div style="left:1377px;top:197px;height:16px;line-height:16px;font-size:13px;color:#fff;font-family:'Liberation Sans',sans-serif;white-space:pre;transform:scaleX(0.8400);transform-origin:0 0;">172.04  D</div>
<div style="left:1477px;top:197px;height:16px;line-height:16px;font-size:13px;color:#fff;font-family:'Liberation Sans',sans-serif;white-space:pre;transform:scaleX(0.8400);transform-origin:0 0;">2</div>
<div style="left:1527px;top:197px;height:16px;line-height:16px;font-size:13px;color:#fff;font-family:'Liberation Sans',sans-serif;white-space:pre;transform:scaleX(0.8400);transform-origin:0 0;">2.003344 kHz</div>
<div style="left:1627px;top:197px;height:16px;line-height:16px;font-size:13px;color:#fff;font-family:'Liberation Sans',sans-serif;white-space:pre;transform:scaleX(0.8400);transform-origin:0 0;">-129.15 dBV</div>
<div style="left:1727px;top:197px;height:16px;line-height:16px;font-size:13px;color:#fff;font-family:'Liberation Sans',sans-serif;white-space:pre;transform:scaleX(0.8400);transform-origin:0 0;">0.0000321  %</div>
<div style="left:1827px;top:197px;height:16px;line-height:16px;font-size:13px;color:#fff;font-family:'Liberation Sans',sans-serif;white-space:pre;transform:scaleX(0.8400);transform-origin:0 0;">-105.61  D</div>
<div style="left:1027px;top:214px;height:16px;line-height:16px;font-size:13px;color:#fff;font-family:'Liberation Sans',sans-serif;white-space:pre;transform:scaleX(0.8400);transform-origin:0 0;">3</div>
<div style="left:1077px;top:214px;height:16px;line-height:16px;font-size:13px;color:#fff;font-family:'Liberation Sans',sans-serif;white-space:pre;transform:scaleX(0.8400);transform-origin:0 0;">3.005016 kHz</div>
<div style="left:1177px;top:214px;height:16px;line-height:16px;font-size:13px;color:#fff;font-family:'Liberation Sans',sans-serif;white-space:pre;transform:scaleX(0.8400);transform-origin:0 0;">-149.08 dBV</div>
<div style="left:1277px;top:214px;height:16px;line-height:16px;font-size:13px;color:#fff;font-family:'Liberation Sans',sans-serif;white-space:pre;transform:scaleX(0.8400);transform-origin:0 0;">0.0050281  %</div>
<div style="left:1377px;top:214px;height:16px;line-height:16px;font-size:13px;color:#fff;font-family:'Liberation Sans',sans-serif;white-space:pre;transform:scaleX(0.8400);transform-origin:0 0;">-45.55  D</div>
<div style="left:1477px;top:214px;height:16px;line-height:16px;font-size:13px;color:#fff;font-family:'Liberation Sans',sans-serif;white-space:pre;transform:scaleX(0.8400);transform-origin:0 0;">3</div>
<div style="left:1527px;top:214px;height:16px;line-height:16px;font-size:13px;color:#fff;font-family:'Liberation Sans',sans-serif;white-space:pre;transform:scaleX(0.8400);transform-origin:0 0;">3.005016 kHz</div>
<div style="left:1627px;top:214px;height:16px;line-height:16px;font-size:13px;color:#fff;font-family:'Liberation Sans',sans-serif;white-space:pre;transform:scaleX(0.8400);transform-origin:0 0;">-136.72 dBV</div>
<div style="left:1727px;top:214px;height:16px;line-height:16px;font-size:13px;color:#fff;font-family:'Liberation Sans',sans-serif;white-space:pre;transform:scaleX(0.8400);transform-origin:0 0;">0.0000134  %</div>
<div style="left:1827px;top:214px;height:16px;line-height:16px;font-size:13px;color:#fff;font-family:'Liberation Sans',sans-serif;white-space:pre;transform:scaleX(0.8400);transform-origin:0 0;">62.09  D</div>
<div style="left:1027px;top:231px;height:16px;line-height:16px;font-size:13px;color:#fff;font-family:'Liberation Sans',sans-serif;white-space:pre;transform:scaleX(0.8400);transform-origin:0 0;">4</div>
<div style="left:1077px;top:231px;height:16px;line-height:16px;font-size:13px;color:#fff;font-family:'Liberation Sans',sans-serif;white-space:pre;transform:scaleX(0.8400);transform-origin:0 0;">4.006688 kHz</div>
<div style="left:1177px;top:231px;height:16px;line-height:16px;font-size:13px;color:#fff;font-family:'Liberation Sans',sans-serif;white-space:pre;transform:scaleX(0.8400);transform-origin:0 0;">-149.60 dBV</div>
<div style="left:1277px;top:231px;height:16px;line-height:16px;font-size:13px;color:#fff;font-family:'Liberation Sans',sans-serif;white-space:pre;transform:scaleX(0.8400);transform-origin:0 0;">0.0047352  %</div>
<div style="left:1377px;top:231px;height:16px;line-height:16px;font-size:13px;color:#fff;font-family:'Liberation Sans',sans-serif;white-space:pre;transform:scaleX(0.8400);transform-origin:0 0;">136.49  D</div>
<div style="left:1477px;top:231px;height:16px;line-height:16px;font-size:13px;color:#fff;font-family:'Liberation Sans',sans-serif;white-space:pre;transform:scaleX(0.8400);transform-origin:0 0;">4</div>
<div style="left:1527px;top:231px;height:16px;line-height:16px;font-size:13px;color:#fff;font-family:'Liberation Sans',sans-serif;white-space:pre;transform:scaleX(0.8400);transform-origin:0 0;">4.006688 kHz</div>
<div style="left:1627px;top:231px;height:16px;line-height:16px;font-size:13px;color:#fff;font-family:'Liberation Sans',sans-serif;white-space:pre;transform:scaleX(0.8400);transform-origin:0 0;">-142.92 dBV</div>
<div style="left:1727px;top:231px;height:16px;line-height:16px;font-size:13px;color:#fff;font-family:'Liberation Sans',sans-serif;white-space:pre;transform:scaleX(0.8400);transform-origin:0 0;">0.0000066  %</div>
<div style="left:1827px;top:231px;height:16px;line-height:16px;font-size:13px;color:#fff;font-family:'Liberation Sans',sans-serif;white-space:pre;transform:scaleX(0.8400);transform-origin:0 0;">52.09  D</div>
<div style="left:1027px;top:248px;height:16px;line-height:16px;font-size:13px;color:#fff;font-family:'Liberation Sans',sans-serif;white-space:pre;transform:scaleX(0.8400);transform-origin:0 0;">5</div>
<div style="left:1077px;top:248px;height:16px;line-height:16px;font-size:13px;color:#fff;font-family:'Liberation Sans',sans-serif;white-space:pre;transform:scaleX(0.8400);transform-origin:0 0;">5.008360 kHz</div>
<div style="left:1177px;top:248px;height:16px;line-height:16px;font-size:13px;color:#fff;font-family:'Liberation Sans',sans-serif;white-space:pre;transform:scaleX(0.8400);transform-origin:0 0;">-149.45 dBV</div>
<div style="left:1277px;top:248px;height:16px;line-height:16px;font-size:13px;color:#fff;font-family:'Liberation Sans',sans-serif;white-space:pre;transform:scaleX(0.8400);transform-origin:0 0;">0.0048151  %</div>
<div style="left:1377px;top:248px;height:16px;line-height:16px;font-size:13px;color:#fff;font-family:'Liberation Sans',sans-serif;white-space:pre;transform:scaleX(0.8400);transform-origin:0 0;">-163.27  D</div>
<div style="left:1477px;top:248px;height:16px;line-height:16px;font-size:13px;color:#fff;font-family:'Liberation Sans',sans-serif;white-space:pre;transform:scaleX(0.8400);transform-origin:0 0;">5</div>
<div style="left:1527px;top:248px;height:16px;line-height:16px;font-size:13px;color:#fff;font-family:'Liberation Sans',sans-serif;white-space:pre;transform:scaleX(0.8400);transform-origin:0 0;">5.008360 kHz</div>
<div style="left:1627px;top:248px;height:16px;line-height:16px;font-size:13px;color:#fff;font-family:'Liberation Sans',sans-serif;white-space:pre;transform:scaleX(0.8400);transform-origin:0 0;">-141.91 dBV</div>
<div style="left:1727px;top:248px;height:16px;line-height:16px;font-size:13px;color:#fff;font-family:'Liberation Sans',sans-serif;white-space:pre;transform:scaleX(0.8400);transform-origin:0 0;">0.0000074  %</div>
<div style="left:1827px;top:248px;height:16px;line-height:16px;font-size:13px;color:#fff;font-family:'Liberation Sans',sans-serif;white-space:pre;transform:scaleX(0.8400);transform-origin:0 0;">28.36  D</div>
<div style="left:1027px;top:265px;height:16px;line-height:16px;font-size:13px;color:#fff;font-family:'Liberation Sans',sans-serif;white-space:pre;transform:scaleX(0.8400);transform-origin:0 0;">6</div>
<div style="left:1077px;top:265px;height:16px;line-height:16px;font-size:13px;color:#fff;font-family:'Liberation Sans',sans-serif;white-space:pre;transform:scaleX(0.8400);transform-origin:0 0;">6.010033 kHz</div>
<div style="left:1177px;top:265px;height:16px;line-height:16px;font-size:13px;color:#fff;font-family:'Liberation Sans',sans-serif;white-space:pre;transform:scaleX(0.8400);transform-origin:0 0;">-151.66 dBV</div>
<div style="left:1277px;top:265px;height:16px;line-height:16px;font-size:13px;color:#fff;font-family:'Liberation Sans',sans-serif;white-space:pre;transform:scaleX(0.8400);transform-origin:0 0;">0.0037347  %</div>
<div style="left:1377px;top:265px;height:16px;line-height:16px;font-size:13px;color:#fff;font-family:'Liberation Sans',sans-serif;white-space:pre;transform:scaleX(0.8400);transform-origin:0 0;">-151.01  D</div>
<div style="left:1477px;top:265px;height:16px;line-height:16px;font-size:13px;color:#fff;font-family:'Liberation Sans',sans-serif;white-space:pre;transform:scaleX(0.8400);transform-origin:0 0;">6</div>
<div style="left:1527px;top:265px;height:16px;line-height:16px;font-size:13px;color:#fff;font-family:'Liberation Sans',sans-serif;white-space:pre;transform:scaleX(0.8400);transform-origin:0 0;">6.010033 kHz</div>
<div style="left:1627px;top:265px;height:16px;line-height:16px;font-size:13px;color:#fff;font-family:'Liberation Sans',sans-serif;white-space:pre;transform:scaleX(0.8400);transform-origin:0 0;">-144.01 dBV</div>
<div style="left:1727px;top:265px;height:16px;line-height:16px;font-size:13px;color:#fff;font-family:'Liberation Sans',sans-serif;white-space:pre;transform:scaleX(0.8400);transform-origin:0 0;">0.0000058  %</div>
<div style="left:1827px;top:265px;height:16px;line-height:16px;font-size:13px;color:#fff;font-family:'Liberation Sans',sans-serif;white-space:pre;transform:scaleX(0.8400);transform-origin:0 0;">32.44  D</div>
<div style="left:1027px;top:282px;height:16px;line-height:16px;font-size:13px;color:#fff;font-family:'Liberation Sans',sans-serif;white-space:pre;transform:scaleX(0.8400);transform-origin:0 0;">7</div>
<div style="left:1077px;top:282px;height:16px;line-height:16px;font-size:13px;color:#fff;font-family:'Liberation Sans',sans-serif;white-space:pre;transform:scaleX(0.8400);transform-origin:0 0;">7.011705 kHz</div>
<div style="left:1177px;top:282px;height:16px;line-height:16px;font-size:13px;color:#fff;font-family:'Liberation Sans',sans-serif;white-space:pre;transform:scaleX(0.8400);transform-origin:0 0;">-152.43 dBV</div>
<div style="left:1277px;top:282px;height:16px;line-height:16px;font-size:13px;color:#fff;font-family:'Liberation Sans',sans-serif;white-space:pre;transform:scaleX(0.8400);transform-origin:0 0;">0.0034172  %</div>
<div style="left:1377px;top:282px;height:16px;line-height:16px;font-size:13px;color:#fff;font-family:'Liberation Sans',sans-serif;white-space:pre;transform:scaleX(0.8400);transform-origin:0 0;">39.08  D</div>
<div style="left:1477px;top:282px;height:16px;line-height:16px;font-size:13px;color:#fff;font-family:'Liberation Sans',sans-serif;white-space:pre;transform:scaleX(0.8400);transform-origin:0 0;">7</div>
<div style="left:1527px;top:282px;height:16px;line-height:16px;font-size:13px;color:#fff;font-family:'Liberation Sans',sans-serif;white-space:pre;transform:scaleX(0.8400);transform-origin:0 0;">7.011705 kHz</div>
<div style="left:1627px;top:282px;height:16px;line-height:16px;font-size:13px;color:#fff;font-family:'Liberation Sans',sans-serif;white-space:pre;transform:scaleX(0.8400);transform-origin:0 0;">-143.00 dBV</div>
<div style="left:1727px;top:282px;height:16px;line-height:16px;font-size:13px;color:#fff;font-family:'Liberation Sans',sans-serif;white-space:pre;transform:scaleX(0.8400);transform-origin:0 0;">0.0000065  %</div>
<div style="left:1827px;top:282px;height:16px;line-height:16px;font-size:13px;color:#fff;font-family:'Liberation Sans',sans-serif;white-space:pre;transform:scaleX(0.8400);transform-origin:0 0;">-58.06  D</div>
<div style="left:1027px;top:299px;height:16px;line-height:16px;font-size:13px;color:#fff;font-family:'Liberation Sans',sans-serif;white-space:pre;transform:scaleX(0.8400);transform-origin:0 0;">8</div>
<div style="left:1077px;top:299px;height:16px;line-height:16px;font-size:13px;color:#fff;font-family:'Liberation Sans',sans-serif;white-space:pre;transform:scaleX(0.8400);transform-origin:0 0;">8.013377 kHz</div>
<div style="left:1177px;top:299px;height:16px;line-height:16px;font-size:13px;color:#fff;font-family:'Liberation Sans',sans-serif;white-space:pre;transform:scaleX(0.8400);transform-origin:0 0;">-151.56 dBV</div>
<div style="left:1277px;top:299px;height:16px;line-height:16px;font-size:13px;color:#fff;font-family:'Liberation Sans',sans-serif;white-space:pre;transform:scaleX(0.8400);transform-origin:0 0;">0.0037791  %</div>
<div style="left:1377px;top:299px;height:16px;line-height:16px;font-size:13px;color:#fff;font-family:'Liberation Sans',sans-serif;white-space:pre;transform:scaleX(0.8400);transform-origin:0 0;">7.60  D</div>
<div style="left:1477px;top:299px;height:16px;line-height:16px;font-size:13px;color:#fff;font-family:'Liberation Sans',sans-serif;white-space:pre;transform:scaleX(0.8400);transform-origin:0 0;">8</div>
<div style="left:1527px;top:299px;height:16px;line-height:16px;font-size:13px;color:#fff;font-family:'Liberation Sans',sans-serif;white-space:pre;transform:scaleX(0.8400);transform-origin:0 0;">8.013377 kHz</div>
<div style="left:1627px;top:299px;height:16px;line-height:16px;font-size:13px;color:#fff;font-family:'Liberation Sans',sans-serif;white-space:pre;transform:scaleX(0.8400);transform-origin:0 0;">-143.18 dBV</div>
<div style="left:1727px;top:299px;height:16px;line-height:16px;font-size:13px;color:#fff;font-family:'Liberation Sans',sans-serif;white-space:pre;transform:scaleX(0.8400);transform-origin:0 0;">0.0000064  %</div>
<div style="left:1827px;top:299px;height:16px;line-height:16px;font-size:13px;color:#fff;font-family:'Liberation Sans',sans-serif;white-space:pre;transform:scaleX(0.8400);transform-origin:0 0;">88.23  D</div>
<div style="left:1021px;top:195px;width:896px;height:1px;background:#fff;"></div>
<div style="left:1021px;top:212px;width:896px;height:1px;background:#fff;"></div>
<div style="left:1021px;top:229px;width:896px;height:1px;background:#fff;"></div>
<div style="left:1021px;top:246px;width:896px;height:1px;background:#fff;"></div>
<div style="left:1021px;top:263px;width:896px;height:1px;background:#fff;"></div>
<div style="left:1021px;top:280px;width:896px;height:1px;background:#fff;"></div>
<div style="left:1021px;top:297px;width:896px;height:1px;background:#fff;"></div>
<div style="left:1021px;top:314px;width:896px;height:1px;background:#fff;"></div>
<div style="left:1021px;top:331px;width:896px;height:1px;background:#fff;"></div>
<div style="left:1071px;top:179px;width:1px;height:151px;background:#fff;"></div>
<div style="left:1171px;top:179px;width:1px;height:151px;background:#fff;"></div>
<div style="left:1271px;top:179px;width:1px;height:151px;background:#fff;"></div>
<div style="left:1371px;top:179px;width:1px;height:151px;background:#fff;"></div>
<div style="left:1471px;top:179px;width:1px;height:151px;background:#fff;"></div>
<div style="left:1521px;top:179px;width:1px;height:151px;background:#fff;"></div>
<div style="left:1621px;top:179px;width:1px;height:151px;background:#fff;"></div>
<div style="left:1721px;top:179px;width:1px;height:151px;background:#fff;"></div>
<div style="left:1821px;top:179px;width:1px;height:151px;background:#fff;"></div>
<div style="left:1019px;top:160px;width:900px;height:190px;border-left:1px solid #a0a0a0;border-top:1px solid #a0a0a0;"></div>
<div style="left:1020px;top:161px;width:898px;height:188px;border-left:1px solid #696969;border-top:1px solid #696969;"></div>
<div style="left:1021px;top:330px;width:896px;height:18px;background:#f0f0f0;"></div>
<div style="left:1041px;top:330px;width:855px;height:18px;background:#cdcdcd;"></div>
<svg style="left:1026px;top:334px" width="8" height="10" viewBox="0 0 8 10"><path d="M6,1 L2,5 L6,9" fill="none" stroke="#505050" stroke-width="1.8"/></svg>
<svg style="left:1903px;top:334px" width="8" height="10" viewBox="0 0 8 10"><path d="M2,1 L6,5 L2,9" fill="none" stroke="#505050" stroke-width="1.8"/></svg>
<div style="left:1407px;top:435px;width:267px;height:81px;background:#000;box-shadow:0 0 0 1px rgba(110,110,110,.55),0 2px 7px 1px rgba(0,0,0,.32);"></div>
<div style="left:1407px;top:435px;width:267px;height:32px;background:#fff;"></div>
<svg style="left:1415px;top:441.5px" width="17" height="17" viewBox="0 0 17 17"><text x="0.5" y="7" font-size="8.5" font-weight="bold" font-family="Liberation Sans,sans-serif" textLength="14.5" lengthAdjust="spacingAndGlyphs"><tspan fill="#0000ff">D</tspan><tspan fill="#ff0000">D</tspan><tspan fill="#00c000">P</tspan></text><circle cx="7" cy="11.5" r="2.8" fill="#fff" stroke="#000" stroke-width="1"/><path d="M7,10 v3 M5.5,11.5 h3" stroke="#000" stroke-width="0.9"/><path d="M9.2,13.7 L12,16.5" stroke="#000" stroke-width="1.5"/></svg>
<div style="left:1436px;top:441.7px;height:20px;line-height:20px;font-size:12.5px;color:#999;font-family:'Liberation Sans',sans-serif;white-space:pre;transform:scaleX(1.0042);transform-origin:0 0;">THD Notch 1...</div>
<svg style="left:1544px;top:444px" width="12" height="12" viewBox="0 0 12 12"><path d="M0.5,6.5 H11.5" stroke="#707070" stroke-width="1"/></svg>
<svg style="left:1593px;top:444px" width="12" height="12" viewBox="0 0 12 12"><rect x="1" y="1" width="10" height="10" fill="none" stroke="#707070" stroke-width="1"/></svg>
<svg style="left:1643px;top:444px" width="12" height="12" viewBox="0 0 12 12"><path d="M0.8,0.8 L11.2,11.2 M11.2,0.8 L0.8,11.2" stroke="#707070" stroke-width="1.1"/></svg>
<svg style="left:1407px;top:467px" width="267" height="49" viewBox="1407 467 267 49"><text x="1424.8" y="502.1" font-family="Liberation Mono,monospace" font-size="35.5" fill="#ffffff" stroke="#ffffff" stroke-width="0.4" textLength="250.0" lengthAdjust="spacingAndGlyphs" xml:space="preserve">-142.18 dB</text></svg>
<div style="left:1683px;top:436px;width:239px;height:78px;background:#000;box-shadow:0 0 0 1px rgba(110,110,110,.55),0 2px 7px 1px rgba(0,0,0,.32);"></div>
<div style="left:1683px;top:436px;width:239px;height:32px;background:#fff;"></div>
<svg style="left:1691px;top:442.5px" width="17" height="17" viewBox="0 0 17 17"><text x="0.5" y="7" font-size="8.5" font-weight="bold" font-family="Liberation Sans,sans-serif" textLength="14.5" lengthAdjust="spacingAndGlyphs"><tspan fill="#0000ff">D</tspan><tspan fill="#ff0000">D</tspan><tspan fill="#00c000">P</tspan></text><circle cx="7" cy="11.5" r="2.8" fill="#fff" stroke="#000" stroke-width="1"/><path d="M7,10 v3 M5.5,11.5 h3" stroke="#000" stroke-width="0.9"/><path d="M9.2,13.7 L12,16.5" stroke="#000" stroke-width="1.5"/></svg>
<div style="left:1712px;top:442.7px;height:20px;line-height:20px;font-size:12.5px;color:#999;font-family:'Liberation Sans',sans-serif;white-space:pre;transform:scaleX(0.9881);transform-origin:0 0;">THD No...</div>
<svg style="left:1792px;top:445px" width="12" height="12" viewBox="0 0 12 12"><path d="M0.5,6.5 H11.5" stroke="#707070" stroke-width="1"/></svg>
<svg style="left:1841px;top:445px" width="12" height="12" viewBox="0 0 12 12"><rect x="1" y="1" width="10" height="10" fill="none" stroke="#707070" stroke-width="1"/></svg>
<svg style="left:1891px;top:445px" width="12" height="12" viewBox="0 0 12 12"><path d="M0.8,0.8 L11.2,11.2 M11.2,0.8 L0.8,11.2" stroke="#707070" stroke-width="1.1"/></svg>
<svg style="left:1683px;top:468px" width="239" height="46" viewBox="1683 468 239 46"><text x="1691.4" y="501.6" font-family="Liberation Mono,monospace" font-size="35.5" fill="#ffffff" stroke="#ffffff" stroke-width="0.4" textLength="230.0" lengthAdjust="spacingAndGlyphs" xml:space="preserve">-141.79 dB</text></svg>
<div style="left:1403px;top:354px;width:268px;height:76px;background:#000;box-shadow:0 0 0 1px rgba(110,110,110,.55),0 2px 7px 1px rgba(0,0,0,.32);"></div>
<div style="left:1403px;top:354px;width:268px;height:32px;background:#fff;"></div>
<svg style="left:1411px;top:360.5px" width="17" height="17" viewBox="0 0 17 17"><text x="0.5" y="7" font-size="8.5" font-weight="bold" font-family="Liberation Sans,sans-serif" textLength="14.5" lengthAdjust="spacingAndGlyphs"><tspan fill="#0000ff">D</tspan><tspan fill="#ff0000">D</tspan><tspan fill="#00c000">P</tspan></text><circle cx="7" cy="11.5" r="2.8" fill="#fff" stroke="#000" stroke-width="1"/><path d="M7,10 v3 M5.5,11.5 h3" stroke="#000" stroke-width="0.9"/><path d="M9.2,13.7 L12,16.5" stroke="#000" stroke-width="1.5"/></svg>
<div style="left:1432px;top:360.7px;height:20px;line-height:20px;font-size:12.5px;color:#999;font-family:'Liberation Sans',sans-serif;white-space:pre;transform:scaleX(1.0189);transform-origin:0 0;">THD Notch 1</div>
<svg style="left:1541px;top:363px" width="12" height="12" viewBox="0 0 12 12"><path d="M0.5,6.5 H11.5" stroke="#707070" stroke-width="1"/></svg>
<svg style="left:1590px;top:363px" width="12" height="12" viewBox="0 0 12 12"><rect x="1" y="1" width="10" height="10" fill="none" stroke="#707070" stroke-width="1"/></svg>
<svg style="left:1640px;top:363px" width="12" height="12" viewBox="0 0 12 12"><path d="M0.8,0.8 L11.2,11.2 M11.2,0.8 L0.8,11.2" stroke="#707070" stroke-width="1.1"/></svg>
<svg style="left:1403px;top:386px" width="268" height="44" viewBox="1403 386 268 44"><text x="1418.3" y="418.6" font-family="Liberation Mono,monospace" font-size="35.5" fill="#ffffff" stroke="#ffffff" stroke-width="0.4" textLength="254.6" lengthAdjust="spacingAndGlyphs" xml:space="preserve">0.0000078 %</text></svg>
<div style="left:1682px;top:354px;width:241px;height:79px;background:#000;box-shadow:0 0 0 1px rgba(110,110,110,.55),0 2px 7px 1px rgba(0,0,0,.32);"></div>
<div style="left:1682px;top:354px;width:241px;height:32px;background:#fff;"></div>
<svg style="left:1690px;top:360.5px" width="17" height="17" viewBox="0 0 17 17"><text x="0.5" y="7" font-size="8.5" font-weight="bold" font-family="Liberation Sans,sans-serif" textLength="14.5" lengthAdjust="spacingAndGlyphs"><tspan fill="#0000ff">D</tspan><tspan fill="#ff0000">D</tspan><tspan fill="#00c000">P</tspan></text><circle cx="7" cy="11.5" r="2.8" fill="#fff" stroke="#000" stroke-width="1"/><path d="M7,10 v3 M5.5,11.5 h3" stroke="#000" stroke-width="0.9"/><path d="M9.2,13.7 L12,16.5" stroke="#000" stroke-width="1.5"/></svg>
<div style="left:1711px;top:360.7px;height:20px;line-height:20px;font-size:12.5px;color:#999;font-family:'Liberation Sans',sans-serif;white-space:pre;transform:scaleX(0.9910);transform-origin:0 0;">THD Not...</div>
<svg style="left:1793px;top:363px" width="12" height="12" viewBox="0 0 12 12"><path d="M0.5,6.5 H11.5" stroke="#707070" stroke-width="1"/></svg>
<svg style="left:1842px;top:363px" width="12" height="12" viewBox="0 0 12 12"><rect x="1" y="1" width="10" height="10" fill="none" stroke="#707070" stroke-width="1"/></svg>
<svg style="left:1892px;top:363px" width="12" height="12" viewBox="0 0 12 12"><path d="M0.8,0.8 L11.2,11.2 M11.2,0.8 L0.8,11.2" stroke="#707070" stroke-width="1.1"/></svg>
<svg style="left:1682px;top:386px" width="241" height="47" viewBox="1682 386 241 47"><text x="1691.6" y="420.1" font-family="Liberation Mono,monospace" font-size="35.5" fill="#ffffff" stroke="#ffffff" stroke-width="0.4" textLength="229.9" lengthAdjust="spacingAndGlyphs" xml:space="preserve">0.0000081 %</text></svg>
<div style="left:1450px;top:562px;width:232px;height:78px;background:#000;box-shadow:0 0 0 1px rgba(110,110,110,.55),0 2px 7px 1px rgba(0,0,0,.32);"></div>
<div style="left:1450px;top:562px;width:232px;height:32px;background:#fff;"></div>
<svg style="left:1458px;top:568.5px" width="17" height="17" viewBox="0 0 17 17"><text x="0.5" y="7" font-size="8.5" font-weight="bold" font-family="Liberation Sans,sans-serif" textLength="14.5" lengthAdjust="spacingAndGlyphs"><tspan fill="#0000ff">D</tspan><tspan fill="#ff0000">D</tspan><tspan fill="#00c000">P</tspan></text><circle cx="7" cy="11.5" r="2.8" fill="#fff" stroke="#000" stroke-width="1"/><path d="M7,10 v3 M5.5,11.5 h3" stroke="#000" stroke-width="0.9"/><path d="M9.2,13.7 L12,16.5" stroke="#000" stroke-width="1.5"/></svg>
<div style="left:1479px;top:568.7px;height:20px;line-height:20px;font-size:12.5px;color:#999;font-family:'Liberation Sans',sans-serif;white-space:pre;transform:scaleX(0.9343);transform-origin:0 0;">THD (C...</div>
<svg style="left:1551px;top:571px" width="12" height="12" viewBox="0 0 12 12"><path d="M0.5,6.5 H11.5" stroke="#707070" stroke-width="1"/></svg>
<svg style="left:1600px;top:571px" width="12" height="12" viewBox="0 0 12 12"><rect x="1" y="1" width="10" height="10" fill="none" stroke="#707070" stroke-width="1"/></svg>
<svg style="left:1650px;top:571px" width="12" height="12" viewBox="0 0 12 12"><path d="M0.8,0.8 L11.2,11.2 M11.2,0.8 L0.8,11.2" stroke="#707070" stroke-width="1.1"/></svg>
<svg style="left:1450px;top:594px" width="232" height="46" viewBox="1450 594 232 46"><text x="1465.8" y="626.9" font-family="Liberation Mono,monospace" font-size="33.5" fill="#00ffff" stroke="#00ffff" stroke-width="0.4" textLength="215.1" lengthAdjust="spacingAndGlyphs" xml:space="preserve">0.01207 %</text></svg>
<div style="left:1687px;top:563px;width:232px;height:78px;background:#000;box-shadow:0 0 0 1px rgba(110,110,110,.55),0 2px 7px 1px rgba(0,0,0,.32);"></div>
<div style="left:1687px;top:563px;width:232px;height:32px;background:#fff;"></div>
<svg style="left:1695px;top:569.5px" width="17" height="17" viewBox="0 0 17 17"><text x="0.5" y="7" font-size="8.5" font-weight="bold" font-family="Liberation Sans,sans-serif" textLength="14.5" lengthAdjust="spacingAndGlyphs"><tspan fill="#0000ff">D</tspan><tspan fill="#ff0000">D</tspan><tspan fill="#00c000">P</tspan></text><circle cx="7" cy="11.5" r="2.8" fill="#fff" stroke="#000" stroke-width="1"/><path d="M7,10 v3 M5.5,11.5 h3" stroke="#000" stroke-width="0.9"/><path d="M9.2,13.7 L12,16.5" stroke="#000" stroke-width="1.5"/></svg>
<div style="left:1716px;top:569.7px;height:20px;line-height:20px;font-size:12.5px;color:#999;font-family:'Liberation Sans',sans-serif;white-space:pre;transform:scaleX(0.8809);transform-origin:0 0;">THD_B</div>
<svg style="left:1788px;top:572px" width="12" height="12" viewBox="0 0 12 12"><path d="M0.5,6.5 H11.5" stroke="#707070" stroke-width="1"/></svg>
<svg style="left:1837px;top:572px" width="12" height="12" viewBox="0 0 12 12"><rect x="1" y="1" width="10" height="10" fill="none" stroke="#707070" stroke-width="1"/></svg>
<svg style="left:1887px;top:572px" width="12" height="12" viewBox="0 0 12 12"><path d="M0.8,0.8 L11.2,11.2 M11.2,0.8 L0.8,11.2" stroke="#707070" stroke-width="1.1"/></svg>
<svg style="left:1687px;top:595px" width="232" height="46" viewBox="1687 595 232 46"><text x="1703.4" y="627.9" font-family="Liberation Mono,monospace" font-size="33.5" fill="#ffff00" stroke="#ffff00" stroke-width="0.4" textLength="214.2" lengthAdjust="spacingAndGlyphs" xml:space="preserve">0.00004 %</text></svg>
<div style="left:1450px;top:650px;width:232px;height:78px;background:#000;box-shadow:0 0 0 1px rgba(110,110,110,.55),0 2px 7px 1px rgba(0,0,0,.32);"></div>
<div style="left:1450px;top:650px;width:232px;height:32px;background:#fff;"></div>
<svg style="left:1458px;top:656.5px" width="17" height="17" viewBox="0 0 17 17"><text x="0.5" y="7" font-size="8.5" font-weight="bold" font-family="Liberation Sans,sans-serif" textLength="14.5" lengthAdjust="spacingAndGlyphs"><tspan fill="#0000ff">D</tspan><tspan fill="#ff0000">D</tspan><tspan fill="#00c000">P</tspan></text><circle cx="7" cy="11.5" r="2.8" fill="#fff" stroke="#000" stroke-width="1"/><path d="M7,10 v3 M5.5,11.5 h3" stroke="#000" stroke-width="0.9"/><path d="M9.2,13.7 L12,16.5" stroke="#000" stroke-width="1.5"/></svg>
<div style="left:1479px;top:656.7px;height:20px;line-height:20px;font-size:12.5px;color:#999;font-family:'Liberation Sans',sans-serif;white-space:pre;transform:scaleX(0.9676);transform-origin:0 0;">THD+...</div>
<svg style="left:1551px;top:659px" width="12" height="12" viewBox="0 0 12 12"><path d="M0.5,6.5 H11.5" stroke="#707070" stroke-width="1"/></svg>
<svg style="left:1600px;top:659px" width="12" height="12" viewBox="0 0 12 12"><rect x="1" y="1" width="10" height="10" fill="none" stroke="#707070" stroke-width="1"/></svg>
<svg style="left:1650px;top:659px" width="12" height="12" viewBox="0 0 12 12"><path d="M0.8,0.8 L11.2,11.2 M11.2,0.8 L0.8,11.2" stroke="#707070" stroke-width="1.1"/></svg>
<svg style="left:1450px;top:682px" width="232" height="46" viewBox="1450 682 232 46"><text x="1465.8" y="714.9" font-family="Liberation Mono,monospace" font-size="33.5" fill="#00ffff" stroke="#00ffff" stroke-width="0.4" textLength="215.1" lengthAdjust="spacingAndGlyphs" xml:space="preserve">1.67100 %</text></svg>
<div style="left:1687px;top:651px;width:232px;height:78px;background:#000;box-shadow:0 0 0 1px rgba(110,110,110,.55),0 2px 7px 1px rgba(0,0,0,.32);"></div>
<div style="left:1687px;top:651px;width:232px;height:32px;background:#fff;"></div>
<svg style="left:1695px;top:657.5px" width="17" height="17" viewBox="0 0 17 17"><text x="0.5" y="7" font-size="8.5" font-weight="bold" font-family="Liberation Sans,sans-serif" textLength="14.5" lengthAdjust="spacingAndGlyphs"><tspan fill="#0000ff">D</tspan><tspan fill="#ff0000">D</tspan><tspan fill="#00c000">P</tspan></text><circle cx="7" cy="11.5" r="2.8" fill="#fff" stroke="#000" stroke-width="1"/><path d="M7,10 v3 M5.5,11.5 h3" stroke="#000" stroke-width="0.9"/><path d="M9.2,13.7 L12,16.5" stroke="#000" stroke-width="1.5"/></svg>
<div style="left:1716px;top:657.7px;height:20px;line-height:20px;font-size:12.5px;color:#999;font-family:'Liberation Sans',sans-serif;white-space:pre;transform:scaleX(0.9676);transform-origin:0 0;">THD+...</div>
<svg style="left:1788px;top:660px" width="12" height="12" viewBox="0 0 12 12"><path d="M0.5,6.5 H11.5" stroke="#707070" stroke-width="1"/></svg>
<svg style="left:1837px;top:660px" width="12" height="12" viewBox="0 0 12 12"><rect x="1" y="1" width="10" height="10" fill="none" stroke="#707070" stroke-width="1"/></svg>
<svg style="left:1887px;top:660px" width="12" height="12" viewBox="0 0 12 12"><path d="M0.8,0.8 L11.2,11.2 M11.2,0.8 L0.8,11.2" stroke="#707070" stroke-width="1.1"/></svg>
<svg style="left:1687px;top:683px" width="232" height="46" viewBox="1687 683 232 46"><text x="1703.4" y="715.9" font-family="Liberation Mono,monospace" font-size="33.5" fill="#ffff00" stroke="#ffff00" stroke-width="0.4" textLength="214.2" lengthAdjust="spacingAndGlyphs" xml:space="preserve">0.00211 %</text></svg>
<div style="left:1451px;top:739px;width:232px;height:78px;background:#000;box-shadow:0 0 0 1px rgba(110,110,110,.55),0 2px 7px 1px rgba(0,0,0,.32);"></div>
<div style="left:1451px;top:739px;width:232px;height:32px;background:#fff;"></div>
<svg style="left:1459px;top:745.5px" width="17" height="17" viewBox="0 0 17 17"><text x="0.5" y="7" font-size="8.5" font-weight="bold" font-family="Liberation Sans,sans-serif" textLength="14.5" lengthAdjust="spacingAndGlyphs"><tspan fill="#0000ff">D</tspan><tspan fill="#ff0000">D</tspan><tspan fill="#00c000">P</tspan></text><circle cx="7" cy="11.5" r="2.8" fill="#fff" stroke="#000" stroke-width="1"/><path d="M7,10 v3 M5.5,11.5 h3" stroke="#000" stroke-width="0.9"/><path d="M9.2,13.7 L12,16.5" stroke="#000" stroke-width="1.5"/></svg>
<div style="left:1480px;top:745.7px;height:20px;line-height:20px;font-size:12.5px;color:#999;font-family:'Liberation Sans',sans-serif;white-space:pre;transform:scaleX(0.9257);transform-origin:0 0;">SNR (C...</div>
<svg style="left:1552px;top:748px" width="12" height="12" viewBox="0 0 12 12"><path d="M0.5,6.5 H11.5" stroke="#707070" stroke-width="1"/></svg>
<svg style="left:1601px;top:748px" width="12" height="12" viewBox="0 0 12 12"><rect x="1" y="1" width="10" height="10" fill="none" stroke="#707070" stroke-width="1"/></svg>
<svg style="left:1651px;top:748px" width="12" height="12" viewBox="0 0 12 12"><path d="M0.8,0.8 L11.2,11.2 M11.2,0.8 L0.8,11.2" stroke="#707070" stroke-width="1.1"/></svg>
<svg style="left:1451px;top:771px" width="232" height="46" viewBox="1451 771 232 46"><text x="1459.0" y="803.9" font-family="Liberation Mono,monospace" font-size="33.5" fill="#00ffff" stroke="#00ffff" stroke-width="0.4" textLength="224.0" lengthAdjust="spacingAndGlyphs" xml:space="preserve">35.54 dB</text></svg>
<div style="left:1687px;top:739px;width:232px;height:78px;background:#000;box-shadow:0 0 0 1px rgba(110,110,110,.55),0 2px 7px 1px rgba(0,0,0,.32);"></div>
<div style="left:1687px;top:739px;width:232px;height:32px;background:#fff;"></div>
<svg style="left:1695px;top:745.5px" width="17" height="17" viewBox="0 0 17 17"><text x="0.5" y="7" font-size="8.5" font-weight="bold" font-family="Liberation Sans,sans-serif" textLength="14.5" lengthAdjust="spacingAndGlyphs"><tspan fill="#0000ff">D</tspan><tspan fill="#ff0000">D</tspan><tspan fill="#00c000">P</tspan></text><circle cx="7" cy="11.5" r="2.8" fill="#fff" stroke="#000" stroke-width="1"/><path d="M7,10 v3 M5.5,11.5 h3" stroke="#000" stroke-width="0.9"/><path d="M9.2,13.7 L12,16.5" stroke="#000" stroke-width="1.5"/></svg>
<div style="left:1716px;top:745.7px;height:20px;line-height:20px;font-size:12.5px;color:#999;font-family:'Liberation Sans',sans-serif;white-space:pre;transform:scaleX(0.9257);transform-origin:0 0;">SNR (C...</div>
<svg style="left:1788px;top:748px" width="12" height="12" viewBox="0 0 12 12"><path d="M0.5,6.5 H11.5" stroke="#707070" stroke-width="1"/></svg>
<svg style="left:1837px;top:748px" width="12" height="12" viewBox="0 0 12 12"><rect x="1" y="1" width="10" height="10" fill="none" stroke="#707070" stroke-width="1"/></svg>
<svg style="left:1887px;top:748px" width="12" height="12" viewBox="0 0 12 12"><path d="M0.8,0.8 L11.2,11.2 M11.2,0.8 L0.8,11.2" stroke="#707070" stroke-width="1.1"/></svg>
<svg style="left:1687px;top:771px" width="232" height="46" viewBox="1687 771 232 46"><text x="1696.5" y="803.9" font-family="Liberation Mono,monospace" font-size="33.5" fill="#ffff00" stroke="#ffff00" stroke-width="0.4" textLength="223.2" lengthAdjust="spacingAndGlyphs" xml:space="preserve">93.52 dB</text></svg>
<div style="left:1450px;top:825px;width:232px;height:78px;background:#000;box-shadow:0 0 0 1px rgba(110,110,110,.55),0 2px 7px 1px rgba(0,0,0,.32);"></div>
<div style="left:1450px;top:825px;width:232px;height:32px;background:#fff;"></div>
<svg style="left:1458px;top:831.5px" width="17" height="17" viewBox="0 0 17 17"><text x="0.5" y="7" font-size="8.5" font-weight="bold" font-family="Liberation Sans,sans-serif" textLength="14.5" lengthAdjust="spacingAndGlyphs"><tspan fill="#0000ff">D</tspan><tspan fill="#ff0000">D</tspan><tspan fill="#00c000">P</tspan></text><circle cx="7" cy="11.5" r="2.8" fill="#fff" stroke="#000" stroke-width="1"/><path d="M7,10 v3 M5.5,11.5 h3" stroke="#000" stroke-width="0.9"/><path d="M9.2,13.7 L12,16.5" stroke="#000" stroke-width="1.5"/></svg>
<div style="left:1479px;top:831.7px;height:20px;line-height:20px;font-size:12.5px;color:#999;font-family:'Liberation Sans',sans-serif;white-space:pre;transform:scaleX(0.9560);transform-origin:0 0;">SINAD ...</div>
<svg style="left:1551px;top:834px" width="12" height="12" viewBox="0 0 12 12"><path d="M0.5,6.5 H11.5" stroke="#707070" stroke-width="1"/></svg>
<svg style="left:1600px;top:834px" width="12" height="12" viewBox="0 0 12 12"><rect x="1" y="1" width="10" height="10" fill="none" stroke="#707070" stroke-width="1"/></svg>
<svg style="left:1650px;top:834px" width="12" height="12" viewBox="0 0 12 12"><path d="M0.8,0.8 L11.2,11.2 M11.2,0.8 L0.8,11.2" stroke="#707070" stroke-width="1.1"/></svg>
<svg style="left:1450px;top:857px" width="232" height="46" viewBox="1450 857 232 46"><text x="1459.0" y="889.9" font-family="Liberation Mono,monospace" font-size="33.5" fill="#00ffff" stroke="#00ffff" stroke-width="0.4" textLength="224.0" lengthAdjust="spacingAndGlyphs" xml:space="preserve">35.54 dB</text></svg>
<div style="left:1687px;top:827px;width:232px;height:78px;background:#000;box-shadow:0 0 0 1px rgba(110,110,110,.55),0 2px 7px 1px rgba(0,0,0,.32);"></div>
<div style="left:1687px;top:827px;width:232px;height:32px;background:#fff;"></div>
<svg style="left:1695px;top:833.5px" width="17" height="17" viewBox="0 0 17 17"><text x="0.5" y="7" font-size="8.5" font-weight="bold" font-family="Liberation Sans,sans-serif" textLength="14.5" lengthAdjust="spacingAndGlyphs"><tspan fill="#0000ff">D</tspan><tspan fill="#ff0000">D</tspan><tspan fill="#00c000">P</tspan></text><circle cx="7" cy="11.5" r="2.8" fill="#fff" stroke="#000" stroke-width="1"/><path d="M7,10 v3 M5.5,11.5 h3" stroke="#000" stroke-width="0.9"/><path d="M9.2,13.7 L12,16.5" stroke="#000" stroke-width="1.5"/></svg>
<div style="left:1716px;top:833.7px;height:20px;line-height:20px;font-size:12.5px;color:#999;font-family:'Liberation Sans',sans-serif;white-space:pre;transform:scaleX(0.9560);transform-origin:0 0;">SINAD ...</div>
<svg style="left:1788px;top:836px" width="12" height="12" viewBox="0 0 12 12"><path d="M0.5,6.5 H11.5" stroke="#707070" stroke-width="1"/></svg>
<svg style="left:1837px;top:836px" width="12" height="12" viewBox="0 0 12 12"><rect x="1" y="1" width="10" height="10" fill="none" stroke="#707070" stroke-width="1"/></svg>
<svg style="left:1887px;top:836px" width="12" height="12" viewBox="0 0 12 12"><path d="M0.8,0.8 L11.2,11.2 M11.2,0.8 L0.8,11.2" stroke="#707070" stroke-width="1.1"/></svg>
<svg style="left:1687px;top:859px" width="232" height="46" viewBox="1687 859 232 46"><text x="1696.5" y="891.9" font-family="Liberation Mono,monospace" font-size="33.5" fill="#ffff00" stroke="#ffff00" stroke-width="0.4" textLength="223.2" lengthAdjust="spacingAndGlyphs" xml:space="preserve">93.52 dB</text></svg>
<div style="left:1451px;top:916px;width:232px;height:78px;background:#000;box-shadow:0 0 0 1px rgba(110,110,110,.55),0 2px 7px 1px rgba(0,0,0,.32);"></div>
<div style="left:1451px;top:916px;width:232px;height:32px;background:#fff;"></div>
<svg style="left:1459px;top:922.5px" width="17" height="17" viewBox="0 0 17 17"><text x="0.5" y="7" font-size="8.5" font-weight="bold" font-family="Liberation Sans,sans-serif" textLength="14.5" lengthAdjust="spacingAndGlyphs"><tspan fill="#0000ff">D</tspan><tspan fill="#ff0000">D</tspan><tspan fill="#00c000">P</tspan></text><circle cx="7" cy="11.5" r="2.8" fill="#fff" stroke="#000" stroke-width="1"/><path d="M7,10 v3 M5.5,11.5 h3" stroke="#000" stroke-width="0.9"/><path d="M9.2,13.7 L12,16.5" stroke="#000" stroke-width="1.5"/></svg>
<div style="left:1480px;top:922.7px;height:20px;line-height:20px;font-size:12.5px;color:#999;font-family:'Liberation Sans',sans-serif;white-space:pre;transform:scaleX(0.9499);transform-origin:0 0;">ENOB (...</div>
<svg style="left:1552px;top:925px" width="12" height="12" viewBox="0 0 12 12"><path d="M0.5,6.5 H11.5" stroke="#707070" stroke-width="1"/></svg>
<svg style="left:1601px;top:925px" width="12" height="12" viewBox="0 0 12 12"><rect x="1" y="1" width="10" height="10" fill="none" stroke="#707070" stroke-width="1"/></svg>
<svg style="left:1651px;top:925px" width="12" height="12" viewBox="0 0 12 12"><path d="M0.8,0.8 L11.2,11.2 M11.2,0.8 L0.8,11.2" stroke="#707070" stroke-width="1.1"/></svg>
<svg style="left:1451px;top:948px" width="232" height="46" viewBox="1451 948 232 46"><text x="1459.0" y="980.9" font-family="Liberation Mono,monospace" font-size="33.5" fill="#00ffff" stroke="#00ffff" stroke-width="0.4" textLength="224.0" lengthAdjust="spacingAndGlyphs" xml:space="preserve">5.61 Bit</text></svg>
<div style="left:1687px;top:915px;width:232px;height:78px;background:#000;box-shadow:0 0 0 1px rgba(110,110,110,.55),0 2px 7px 1px rgba(0,0,0,.32);"></div>
<div style="left:1687px;top:915px;width:232px;height:32px;background:#fff;"></div>
<svg style="left:1695px;top:921.5px" width="17" height="17" viewBox="0 0 17 17"><text x="0.5" y="7" font-size="8.5" font-weight="bold" font-family="Liberation Sans,sans-serif" textLength="14.5" lengthAdjust="spacingAndGlyphs"><tspan fill="#0000ff">D</tspan><tspan fill="#ff0000">D</tspan><tspan fill="#00c000">P</tspan></text><circle cx="7" cy="11.5" r="2.8" fill="#fff" stroke="#000" stroke-width="1"/><path d="M7,10 v3 M5.5,11.5 h3" stroke="#000" stroke-width="0.9"/><path d="M9.2,13.7 L12,16.5" stroke="#000" stroke-width="1.5"/></svg>
<div style="left:1716px;top:921.7px;height:20px;line-height:20px;font-size:12.5px;color:#999;font-family:'Liberation Sans',sans-serif;white-space:pre;transform:scaleX(0.9499);transform-origin:0 0;">ENOB (...</div>
<svg style="left:1788px;top:924px" width="12" height="12" viewBox="0 0 12 12"><path d="M0.5,6.5 H11.5" stroke="#707070" stroke-width="1"/></svg>
<svg style="left:1837px;top:924px" width="12" height="12" viewBox="0 0 12 12"><rect x="1" y="1" width="10" height="10" fill="none" stroke="#707070" stroke-width="1"/></svg>
<svg style="left:1887px;top:924px" width="12" height="12" viewBox="0 0 12 12"><path d="M0.8,0.8 L11.2,11.2 M11.2,0.8 L0.8,11.2" stroke="#707070" stroke-width="1.1"/></svg>
<svg style="left:1687px;top:947px" width="232" height="46" viewBox="1687 947 232 46"><text x="1702.5" y="979.9" font-family="Liberation Mono,monospace" font-size="33.5" fill="#ffff00" stroke="#ffff00" stroke-width="0.4" textLength="216.9" lengthAdjust="spacingAndGlyphs" xml:space="preserve">15.24 Bit</text></svg>
<div style="left:7px;top:1055px;width:1920px;height:24px;background:#f0f0f0;"></div>
<div style="left:7px;top:1055px;width:1920px;height:1px;background:#fff;"></div>
<div style="left:0px;top:1078px;width:1927px;height:1px;background:#3c3c3c;"></div>
<div style="left:11px;top:1058px;width:1px;height:19px;background:#fff;"></div>
<div style="left:12px;top:1058px;width:1px;height:19px;background:#a0a0a0;"></div>
<div style="left:25px;top:1060.7px;height:19px;line-height:19px;font-size:12.5px;color:#000;font-family:'Liberation Sans',sans-serif;white-space:pre;left:21.18px;transform:scaleX(1.0350);transform-origin:50% 0;">T</div>
<div style="left:37px;top:1058px;width:184px;height:22px;background:#fff;box-shadow:inset 1px 1px 0 #a0a0a0,inset 2px 2px 0 #696969,inset -1px -1px 0 #fff,inset -2px -2px 0 #e3e3e3;"></div>
<div style="left:37px;top:1058px;width:186px;height:22px;background:#fff;box-shadow:inset 1px 1px 0 #a0a0a0,inset 2px 2px 0 #696969,inset -1px -1px 0 #fff,inset -2px -2px 0 #e3e3e3;"></div>
<div style="left:203px;top:1060px;width:18px;height:18px;background:#f0f0f0;box-shadow:inset 1px 1px 0 #fff,inset -1px -1px 0 #696969,inset -2px -2px 0 #a0a0a0;"></div>
<svg style="left:207.0px;top:1067.0px" width="9" height="5" viewBox="0 0 9 5"><polygon points="0,0 9,0 4.5,5" fill="#000"/></svg>
<div style="left:41px;top:1061.7px;height:20px;line-height:20px;font-size:12.5px;color:#000;font-family:'Liberation Sans',sans-serif;white-space:pre;transform:scaleX(1.0800);transform-origin:0 0;">2s</div>
<div style="left:224px;top:1058px;width:156px;height:22px;background:#fff;box-shadow:inset 1px 1px 0 #a0a0a0,inset 2px 2px 0 #696969,inset -1px -1px 0 #fff,inset -2px -2px 0 #e3e3e3;"></div>
<div style="left:224px;top:1058px;width:158px;height:22px;background:#fff;box-shadow:inset 1px 1px 0 #a0a0a0,inset 2px 2px 0 #696969,inset -1px -1px 0 #fff,inset -2px -2px 0 #e3e3e3;"></div>
<div style="left:362px;top:1060px;width:18px;height:18px;background:#f0f0f0;box-shadow:inset 1px 1px 0 #fff,inset -1px -1px 0 #696969,inset -2px -2px 0 #a0a0a0;"></div>
<svg style="left:366.0px;top:1067.0px" width="9" height="5" viewBox="0 0 9 5"><polygon points="0,0 9,0 4.5,5" fill="#000"/></svg>
<div style="left:228px;top:1061.7px;height:20px;line-height:20px;font-size:12.5px;color:#000;font-family:'Liberation Sans',sans-serif;white-space:pre;transform:scaleX(1.0800);transform-origin:0 0;">×500</div>
<div style="left:394px;top:1060.7px;height:19px;line-height:19px;font-size:12.5px;color:#000;font-family:'Liberation Sans',sans-serif;white-space:pre;left:389.83px;transform:scaleX(1.0350);transform-origin:50% 0;">A</div>
<div style="left:407px;top:1058px;width:176px;height:22px;background:#000;box-shadow:inset 1px 1px 0 #a0a0a0,inset 2px 2px 0 #696969,inset -1px -1px 0 #fff,inset -2px -2px 0 #e3e3e3;"></div>
<div style="left:407px;top:1058px;width:178px;height:22px;background:#000;box-shadow:inset 1px 1px 0 #a0a0a0,inset 2px 2px 0 #696969,inset -1px -1px 0 #fff,inset -2px -2px 0 #e3e3e3;"></div>
<div style="left:565px;top:1060px;width:18px;height:18px;background:#f0f0f0;box-shadow:inset 1px 1px 0 #fff,inset -1px -1px 0 #696969,inset -2px -2px 0 #a0a0a0;"></div>
<svg style="left:569.0px;top:1067.0px" width="9" height="5" viewBox="0 0 9 5"><polygon points="0,0 9,0 4.5,5" fill="#000"/></svg>
<div style="left:411px;top:1061.7px;height:20px;line-height:20px;font-size:12.5px;color:#00ffff;font-family:'Liberation Sans',sans-serif;white-space:pre;transform:scaleX(1.0800);transform-origin:0 0;">±2mV</div>
<div style="left:586px;top:1058px;width:148px;height:22px;background:#000;box-shadow:inset 1px 1px 0 #a0a0a0,inset 2px 2px 0 #696969,inset -1px -1px 0 #fff,inset -2px -2px 0 #e3e3e3;"></div>
<div style="left:586px;top:1058px;width:150px;height:22px;background:#000;box-shadow:inset 1px 1px 0 #a0a0a0,inset 2px 2px 0 #696969,inset -1px -1px 0 #fff,inset -2px -2px 0 #e3e3e3;"></div>
<div style="left:716px;top:1060px;width:18px;height:18px;background:#f0f0f0;box-shadow:inset 1px 1px 0 #fff,inset -1px -1px 0 #696969,inset -2px -2px 0 #a0a0a0;"></div>
<svg style="left:720.0px;top:1067.0px" width="9" height="5" viewBox="0 0 9 5"><polygon points="0,0 9,0 4.5,5" fill="#000"/></svg>
<div style="left:590px;top:1061.7px;height:20px;line-height:20px;font-size:12.5px;color:#00ffff;font-family:'Liberation Sans',sans-serif;white-space:pre;transform:scaleX(1.0800);transform-origin:0 0;">Off</div>
<div style="left:747px;top:1060.7px;height:19px;line-height:19px;font-size:12.5px;color:#000;font-family:'Liberation Sans',sans-serif;white-space:pre;left:741.79px;transform:scaleX(1.0350);transform-origin:50% 0;">M</div>
<div style="left:759px;top:1058px;width:129px;height:22px;background:#fff;box-shadow:inset 1px 1px 0 #a0a0a0,inset 2px 2px 0 #696969,inset -1px -1px 0 #fff,inset -2px -2px 0 #e3e3e3;"></div>
<div style="left:759px;top:1058px;width:131px;height:22px;background:#fff;box-shadow:inset 1px 1px 0 #a0a0a0,inset 2px 2px 0 #696969,inset -1px -1px 0 #fff,inset -2px -2px 0 #e3e3e3;"></div>
<div style="left:870px;top:1060px;width:18px;height:18px;background:#f0f0f0;box-shadow:inset 1px 1px 0 #fff,inset -1px -1px 0 #696969,inset -2px -2px 0 #a0a0a0;"></div>
<svg style="left:874.0px;top:1067.0px" width="9" height="5" viewBox="0 0 9 5"><polygon points="0,0 9,0 4.5,5" fill="#000"/></svg>
<div style="left:763px;top:1061.7px;height:20px;line-height:20px;font-size:12.5px;color:#000;font-family:'Liberation Sans',sans-serif;white-space:pre;transform:scaleX(1.0800);transform-origin:0 0;">A&amp;B</div>
<div style="left:901px;top:1060.7px;height:19px;line-height:19px;font-size:12.5px;color:#000;font-family:'Liberation Sans',sans-serif;white-space:pre;left:896.83px;transform:scaleX(1.0350);transform-origin:50% 0;">B</div>
<div style="left:914px;top:1058px;width:176px;height:22px;background:#000;box-shadow:inset 1px 1px 0 #a0a0a0,inset 2px 2px 0 #696969,inset -1px -1px 0 #fff,inset -2px -2px 0 #e3e3e3;"></div>
<div style="left:914px;top:1058px;width:178px;height:22px;background:#000;box-shadow:inset 1px 1px 0 #a0a0a0,inset 2px 2px 0 #696969,inset -1px -1px 0 #fff,inset -2px -2px 0 #e3e3e3;"></div>
<div style="left:1072px;top:1060px;width:18px;height:18px;background:#f0f0f0;box-shadow:inset 1px 1px 0 #fff,inset -1px -1px 0 #696969,inset -2px -2px 0 #a0a0a0;"></div>
<svg style="left:1076.0px;top:1067.0px" width="9" height="5" viewBox="0 0 9 5"><polygon points="0,0 9,0 4.5,5" fill="#000"/></svg>
<div style="left:918px;top:1061.7px;height:20px;line-height:20px;font-size:12.5px;color:#ffff00;font-family:'Liberation Sans',sans-serif;white-space:pre;transform:scaleX(1.0800);transform-origin:0 0;">±2V</div>
<div style="left:1094px;top:1058px;width:147px;height:22px;background:#000;box-shadow:inset 1px 1px 0 #a0a0a0,inset 2px 2px 0 #696969,inset -1px -1px 0 #fff,inset -2px -2px 0 #e3e3e3;"></div>
<div style="left:1094px;top:1058px;width:149px;height:22px;background:#000;box-shadow:inset 1px 1px 0 #a0a0a0,inset 2px 2px 0 #696969,inset -1px -1px 0 #fff,inset -2px -2px 0 #e3e3e3;"></div>
<div style="left:1223px;top:1060px;width:18px;height:18px;background:#f0f0f0;box-shadow:inset 1px 1px 0 #fff,inset -1px -1px 0 #696969,inset -2px -2px 0 #a0a0a0;"></div>
<svg style="left:1227.0px;top:1067.0px" width="9" height="5" viewBox="0 0 9 5"><polygon points="0,0 9,0 4.5,5" fill="#000"/></svg>
<div style="left:1098px;top:1061.7px;height:20px;line-height:20px;font-size:12.5px;color:#ffff00;font-family:'Liberation Sans',sans-serif;white-space:pre;transform:scaleX(1.0800);transform-origin:0 0;">Off</div>
<div style="left:1682px;top:1002px;width:243px;height:57px;background:#f0f0f0;box-shadow:0 0 0 1px rgba(110,110,110,.55),0 2px 7px 1px rgba(0,0,0,.32);"></div>
<div style="left:1682px;top:1002px;width:243px;height:27px;background:#fff;"></div>
<svg style="left:1685px;top:1007px" width="17" height="17" viewBox="0 0 16 16"><rect width="16" height="16" fill="#ffff00"/><path d="M0.5,4 q1.9,-5 3.8,0 t3.8,0 t3.8,0 t3.8,0" fill="none" stroke="#ff0000" stroke-width="1.1"/><path d="M0.5,9.5 v-3 h2.5 v3 h2.5 v-3 h2.5 v3 h2.5 v-3 h2.5 v3 h2" fill="none" stroke="#00b000" stroke-width="1.1"/><path d="M0.5,14.5 l2,-3 l2,3 l2,-3 l2,3 l2,-3 l2,3 l2,-3 l1.2,2" fill="none" stroke="#0000ff" stroke-width="1.1"/></svg>
<div style="left:1706px;top:1006.7px;height:20px;line-height:20px;font-size:12.5px;color:#999;font-family:'Liberation Sans',sans-serif;white-space:pre;transform:scaleX(0.9799);transform-origin:0 0;">Signal Ge...</div>
<svg style="left:1794px;top:1009px" width="12" height="12" viewBox="0 0 12 12"><path d="M0.5,6.5 H11.5" stroke="#707070" stroke-width="1"/></svg>
<svg style="left:1843px;top:1009px" width="12" height="12" viewBox="0 0 12 12"><rect x="1" y="1" width="10" height="10" fill="none" stroke="#d0d0d0" stroke-width="1"/></svg>
<svg style="left:1893px;top:1009px" width="12" height="12" viewBox="0 0 12 12"><path d="M0.8,0.8 L11.2,11.2 M11.2,0.8 L0.8,11.2" stroke="#707070" stroke-width="1.1"/></svg>
<div style="left:1688px;top:1037px;width:13px;height:13px;background:#fff;box-shadow:inset 1px 1px 0 #333,inset -1px -1px 0 #333;"></div>
<div style="left:1706px;top:1035px;height:17px;line-height:17px;font-size:13px;color:#000;font-family:'Liberation Sans',sans-serif;white-space:pre;transform:scaleX(0.8275);transform-origin:0 0;">Show Editor</div>
<div style="left:1768px;top:1034px;width:127px;height:21px;background:#fff;box-shadow:inset 1px 1px 0 #a0a0a0,inset 2px 2px 0 #696969,inset -1px -1px 0 #fff,inset -2px -2px 0 #e3e3e3;"></div>
<div style="left:1768px;top:1034px;width:129px;height:21px;background:#fff;box-shadow:inset 1px 1px 0 #a0a0a0,inset 2px 2px 0 #696969,inset -1px -1px 0 #fff,inset -2px -2px 0 #e3e3e3;"></div>
<div style="left:1879px;top:1036px;width:16px;height:17px;background:#f0f0f0;box-shadow:inset 1px 1px 0 #fff,inset -1px -1px 0 #696969,inset -2px -2px 0 #a0a0a0;"></div>
<svg style="left:1882.0px;top:1042.5px" width="9" height="5" viewBox="0 0 9 5"><polygon points="0,0 9,0 4.5,5" fill="#000"/></svg>
<div style="left:1773px;top:1036px;height:17px;line-height:17px;font-size:13px;color:#000;font-family:'Liberation Sans',sans-serif;white-space:pre;transform:scaleX(0.8485);transform-origin:0 0;">No Loopback</div>
<div style="left:1898px;top:1033px;width:24px;height:23px;background:#f0f0f0;box-shadow:inset 1px 1px 0 #fff,inset -1px -1px 0 #696969,inset -2px -2px 0 #a0a0a0;"></div>
<svg style="left:1904px;top:1039px" width="11" height="10" viewBox="0 0 11 10"><polygon points="0,0 11,5 0,10" fill="#ff0000"/></svg>
</body></html>
